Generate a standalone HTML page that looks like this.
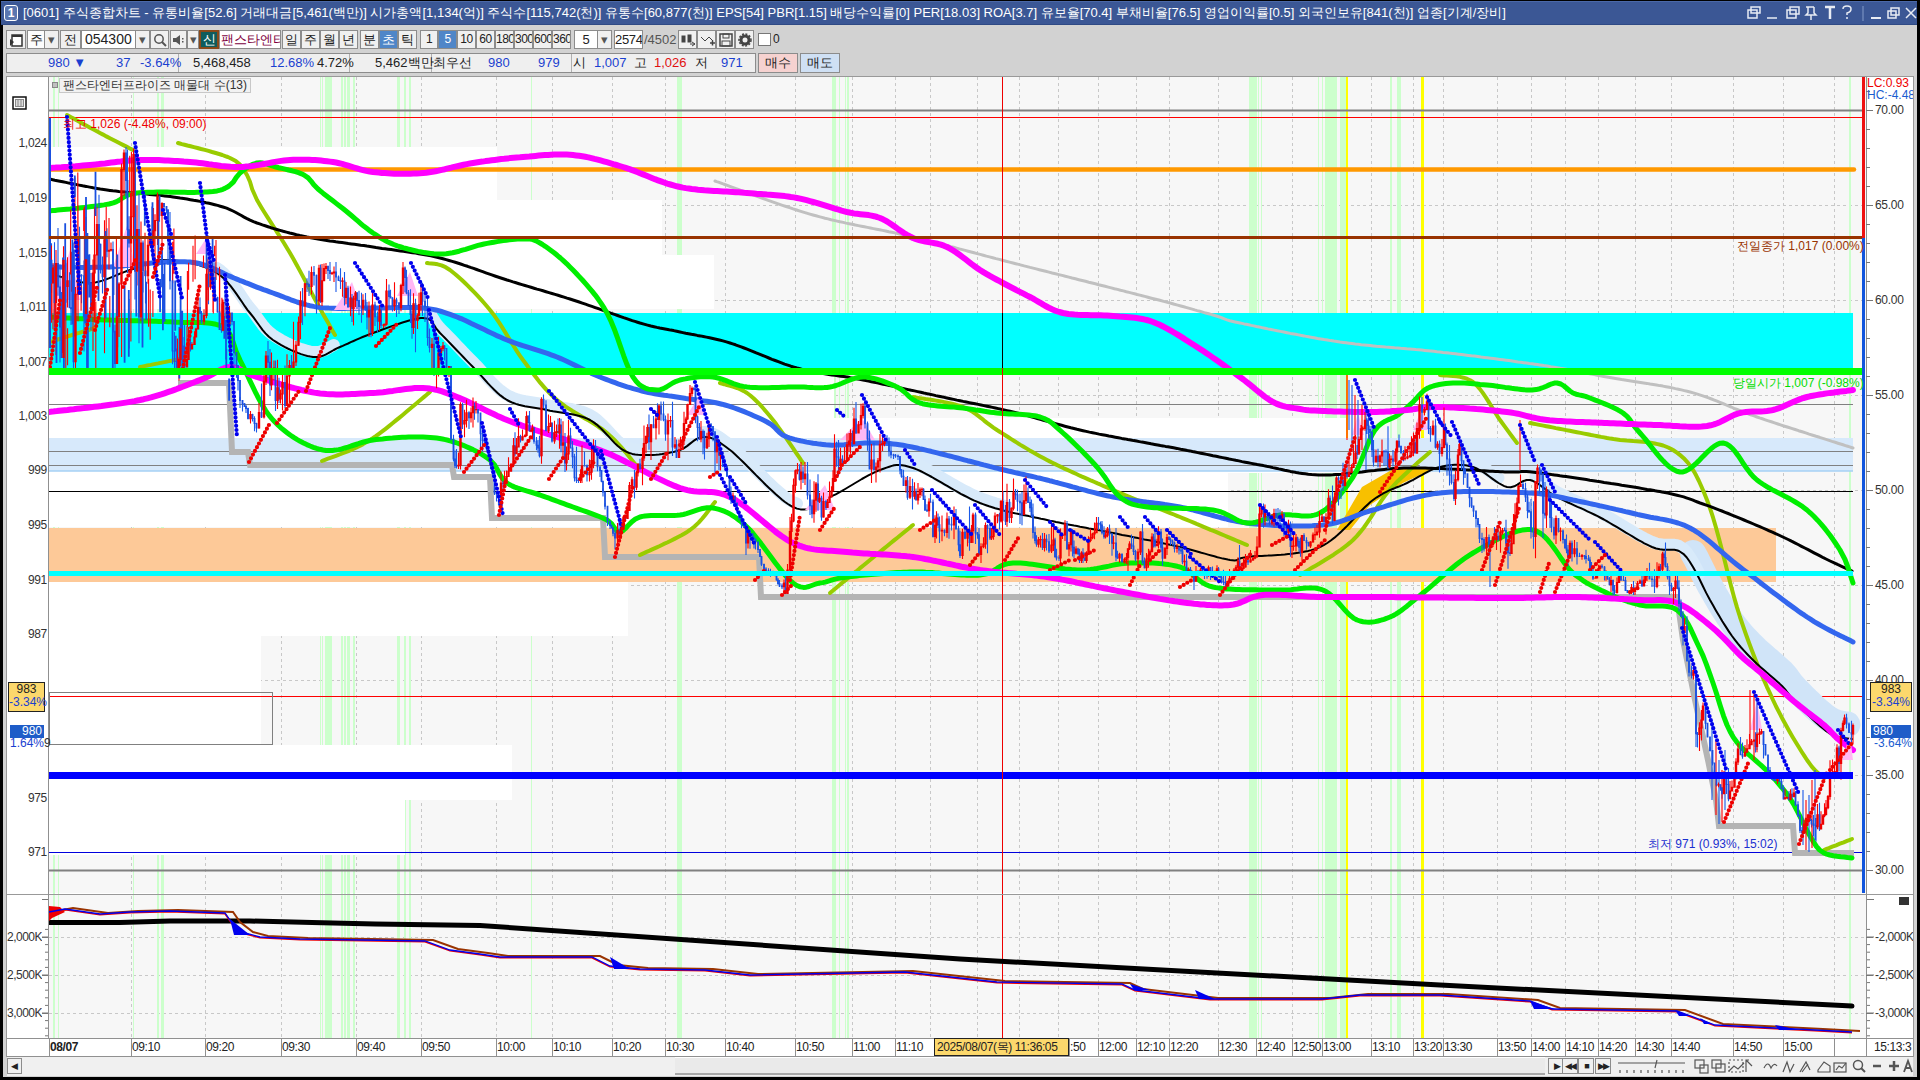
<!DOCTYPE html>
<html><head><meta charset="utf-8"><style>
*{margin:0;padding:0;box-sizing:border-box}
html,body{width:1920px;height:1080px;overflow:hidden;background:#000;font-family:"Liberation Sans",sans-serif;}
.a{position:absolute}
.t{position:absolute;white-space:nowrap;font-size:12px;line-height:14px}
.btn{position:absolute;background:#f0f0f0;border:1px solid #8c8c8c;font-size:13px;line-height:17px;text-align:center;color:#222;white-space:nowrap;overflow:hidden}
</style></head><body>

<div class="a" style="left:3px;top:25px;width:1914px;height:1052px;background:#d2d2d2"></div>
<div class="a" style="left:1px;top:1px;width:1916px;height:24px;background:#3b5795;border-top:1px solid #4a68a8;border-bottom:1px solid #2f4a85"></div>
<div class="a" style="left:4px;top:5px;width:14px;height:16px;border:1px solid #fff;border-radius:3px;background:#5a76b0;color:#fff;font-size:12px;font-weight:bold;line-height:14px;text-align:center">1</div>
<div class="t" style="left:23px;top:5px;color:#fff;font-size:13px;line-height:15px;letter-spacing:0px">[0601] 주식종합차트 - 유통비율[52.6] 거래대금[5,461(백만)] 시가총액[1,134(억)] 주식수[115,742(천)] 유통수[60,877(천)] EPS[54] PBR[1.15] 배당수익률[0] PER[18.03] ROA[3.7] 유보율[70.4] 부채비율[76.5] 영업이익률[0.5] 외국인보유[841(천)] 업종[기계/장비]</div>
<svg class="a" style="left:1740px;top:3px" width="178" height="20" viewBox="0 0 178 20"><g fill="none" stroke="#e8ecf4" stroke-width="1.5"><rect x="8" y="7" width="9" height="8"/><rect x="11" y="4" width="9" height="6"/><line x1="27" y1="15" x2="37" y2="15"/><rect x="47" y="7" width="9" height="8"/><rect x="50" y="4" width="9" height="7"/><path d="M66 4 L74 4 M68 4 L68 10 L66 12 L76 12 L74 10 L74 4 M71 12 L71 17"/><path d="M85 4 L95 4 M90 4 L90 16" stroke-width="2.5"/><path d="M103 6 Q103 3 107 3 Q111 3 111 6 Q111 9 107 10 L107 12 M107 14 L107 16"/><line x1="123" y1="3" x2="123" y2="18" stroke="#6c84b8"/><line x1="131" y1="15" x2="141" y2="15" stroke-width="2"/><rect x="148" y="8" width="8" height="7"/><rect x="151" y="5" width="8" height="7"/><path d="M166 5 L176 15 M176 5 L166 15"/></g></svg>
<div class="btn" style="left:6px;top:30px;width:20px;height:19px;background:#f0f0f0;color:#222;"></div>
<svg class="a" style="left:9px;top:34px" width="14" height="13"><rect x="3" y="1" width="10" height="11" fill="#fff" stroke="#333" stroke-width="1.5"/><rect x="3" y="1" width="10" height="2" fill="#333"/><path d="M1 5 L5 8 L1 12 Z" fill="#333"/></svg>
<div class="btn" style="left:27px;top:30px;width:18px;height:19px;background:#fcfcfc;color:#222;">주</div>
<div class="btn" style="left:44px;top:30px;width:15px;height:19px;background:#f0f0f0;color:#555;">▾</div>
<div class="btn" style="left:60px;top:30px;width:21px;height:19px;background:#f0f0f0;color:#222;">전</div>
<div class="btn" style="left:81px;top:30px;width:55px;height:19px;background:#fff;color:#222;text-align:left;padding-left:3px;font-size:14px">054300</div>
<div class="btn" style="left:135px;top:30px;width:15px;height:19px;background:#f0f0f0;color:#555;">▾</div>
<div class="btn" style="left:150px;top:30px;width:19px;height:19px;background:#f0f0f0;color:#222;"></div>
<svg class="a" style="left:153px;top:33px" width="14" height="14"><circle cx="6" cy="6" r="4.2" fill="none" stroke="#555" stroke-width="1.5"/><line x1="9" y1="9" x2="13" y2="13" stroke="#555" stroke-width="2"/></svg>
<div class="btn" style="left:170px;top:30px;width:17px;height:19px;background:#f0f0f0;color:#222;"></div>
<div class="btn" style="left:187px;top:30px;width:12px;height:19px;background:#f0f0f0;color:#555;">▾</div>
<svg class="a" style="left:172px;top:34px" width="13" height="12"><path d="M1 4 L4 4 L8 1 L8 11 L4 8 L1 8 Z" fill="#555"/><rect x="10" y="4" width="1.5" height="1.5" fill="#555"/><rect x="10" y="7" width="1.5" height="1.5" fill="#555"/></svg>
<div class="a" style="left:199px;top:30px;width:20px;height:19px;background:#0f5c5c;border:2px solid #8a4a1a;color:#fff;font-size:13px;line-height:15px;text-align:center">신</div>
<div class="a" style="left:219px;top:30px;width:62px;height:19px;background:#fff;border:1px solid #8c8c8c;color:#800040;font-size:13px;line-height:17px;overflow:hidden;white-space:nowrap;padding-left:1px">팬스타엔터</div>
<div class="btn" style="left:282px;top:30px;width:19px;height:19px;background:#f0f0f0;color:#222;">일</div>
<div class="btn" style="left:301px;top:30px;width:19px;height:19px;background:#f0f0f0;color:#222;">주</div>
<div class="btn" style="left:320px;top:30px;width:19px;height:19px;background:#f0f0f0;color:#222;">월</div>
<div class="btn" style="left:339px;top:30px;width:19px;height:19px;background:#f0f0f0;color:#222;">년</div>
<div class="btn" style="left:360px;top:30px;width:19px;height:19px;background:#f0f0f0;color:#222;">분</div>
<div class="btn" style="left:379px;top:30px;width:19px;height:19px;background:#4f86c8;color:#fff;">초</div>
<div class="btn" style="left:398px;top:30px;width:19px;height:19px;background:#f0f0f0;color:#222;">틱</div>
<div class="btn" style="left:420px;top:30px;width:18px;height:19px;background:#f0f0f0;color:#222;font-size:12px;letter-spacing:-0.5px">1</div>
<div class="btn" style="left:438px;top:30px;width:19px;height:19px;background:#4f86c8;color:#fff;font-size:12px;letter-spacing:-0.5px">5</div>
<div class="btn" style="left:457px;top:30px;width:19px;height:19px;background:#f0f0f0;color:#222;font-size:12px;letter-spacing:-0.5px">10</div>
<div class="btn" style="left:476px;top:30px;width:19px;height:19px;background:#f0f0f0;color:#222;font-size:12px;letter-spacing:-0.5px">60</div>
<div class="btn" style="left:495px;top:30px;width:19px;height:19px;background:#f0f0f0;color:#222;font-size:12px;letter-spacing:-0.5px">180</div>
<div class="btn" style="left:514px;top:30px;width:19px;height:19px;background:#f0f0f0;color:#222;font-size:12px;letter-spacing:-0.5px">300</div>
<div class="btn" style="left:533px;top:30px;width:19px;height:19px;background:#f0f0f0;color:#222;font-size:12px;letter-spacing:-0.5px">600</div>
<div class="btn" style="left:552px;top:30px;width:19px;height:19px;background:#f0f0f0;color:#222;font-size:12px;letter-spacing:-0.5px">3600</div>
<div class="btn" style="left:574px;top:30px;width:24px;height:19px;background:#fff;color:#222;">5</div>
<div class="btn" style="left:597px;top:30px;width:15px;height:19px;background:#f0f0f0;color:#555;">▾</div>
<div class="btn" style="left:614px;top:30px;width:29px;height:19px;background:#fff;color:#222;font-size:13px;letter-spacing:-0.3px">2574</div>
<div class="t" style="left:644px;top:33px;color:#555;font-size:13px">/4502</div>
<div class="btn" style="left:678px;top:30px;width:19px;height:19px;background:#f0f0f0;color:#222;"></div>
<div class="btn" style="left:697px;top:30px;width:19px;height:19px;background:#f0f0f0;color:#222;"></div>
<div class="btn" style="left:716px;top:30px;width:19px;height:19px;background:#f0f0f0;color:#222;"></div>
<div class="btn" style="left:735px;top:30px;width:19px;height:19px;background:#f0f0f0;color:#222;"></div>
<svg class="a" style="left:680px;top:32px" width="76" height="16"><g fill="#444" stroke="#444"><rect x="2" y="4" width="3" height="6"/><rect x="8" y="3" width="3" height="7"/><path d="M10 12 L15 12 M12 10 L15 12 L12 14" fill="none"/><path d="M21 5 L25 9 L29 5 L33 9" fill="none"/><path d="M30 11 L35 11 M32.5 8.5 L32.5 13.5" fill="none" stroke-width="1.5"/><rect x="40" y="2" width="12" height="12" fill="none" stroke-width="1.5"/><rect x="43" y="2" width="6" height="4" fill="none"/><rect x="42" y="9" width="8" height="5" fill="none"/><circle cx="65" cy="8" r="4" fill="none" stroke-width="3"/><circle cx="65" cy="8" r="6" fill="none" stroke-width="1.5" stroke-dasharray="2 1.5"/></g></svg>
<div class="a" style="left:758px;top:33px;width:13px;height:13px;background:#fff;border:1px solid #777"></div>
<div class="t" style="left:773px;top:32px;color:#222;font-size:12px">0</div>
<div class="a" style="left:6px;top:53px;width:750px;height:20px;background:#efefef;border:1px solid #8c8c8c"></div>
<div class="a" style="left:178px;top:54px;width:1px;height:18px;background:#b0b0b0"></div>
<div class="a" style="left:349px;top:54px;width:1px;height:18px;background:#b0b0b0"></div>
<div class="a" style="left:431px;top:54px;width:1px;height:18px;background:#b0b0b0"></div>
<div class="a" style="left:571px;top:54px;width:1px;height:18px;background:#b0b0b0"></div>
<div class="t" style="left:48px;top:55px;color:#1a3fd0;font-size:13px;line-height:16px">980 ▼</div>
<div class="t" style="left:116px;top:55px;color:#1a3fd0;font-size:13px;line-height:16px">37</div>
<div class="t" style="left:140px;top:55px;color:#1a3fd0;font-size:13px;line-height:16px">-3.64%</div>
<div class="t" style="left:193px;top:55px;color:#222;font-size:13px;line-height:16px">5,468,458</div>
<div class="t" style="left:270px;top:55px;color:#1a3fd0;font-size:13px;line-height:16px">12.68%</div>
<div class="t" style="left:317px;top:55px;color:#222;font-size:13px;line-height:16px">4.72%</div>
<div class="t" style="left:375px;top:55px;color:#222;font-size:13px;line-height:16px">5,462백만</div>
<div class="t" style="left:433px;top:55px;color:#222;font-size:13px;line-height:16px">최우선</div>
<div class="t" style="left:488px;top:55px;color:#1a3fd0;font-size:13px;line-height:16px">980</div>
<div class="t" style="left:538px;top:55px;color:#1a3fd0;font-size:13px;line-height:16px">979</div>
<div class="t" style="left:573px;top:55px;color:#222;font-size:13px;line-height:16px">시</div>
<div class="t" style="left:594px;top:55px;color:#1a3fd0;font-size:13px;line-height:16px">1,007</div>
<div class="t" style="left:634px;top:55px;color:#222;font-size:13px;line-height:16px">고</div>
<div class="t" style="left:654px;top:55px;color:#e01010;font-size:13px;line-height:16px">1,026</div>
<div class="t" style="left:695px;top:55px;color:#222;font-size:13px;line-height:16px">저</div>
<div class="t" style="left:721px;top:55px;color:#1a3fd0;font-size:13px;line-height:16px">971</div>
<div class="btn" style="left:758px;top:53px;width:40px;height:20px;background:#f6d2d0;font-size:13px;line-height:18px">매수</div>
<div class="btn" style="left:800px;top:53px;width:40px;height:20px;background:#cfe0f4;font-size:13px;line-height:18px">매도</div>
<div class="a" style="left:6px;top:76px;width:1908px;height:981px;background:#fff;border:1px solid #999"></div>
<svg class="a" style="left:0;top:0" width="1920" height="1080" viewBox="0 0 1920 1080" shape-rendering="auto">
<defs><clipPath id="cpm"><rect x="49" y="77" width="1813" height="816"/></clipPath><clipPath id="cpl"><rect x="49" y="895" width="1817" height="143"/></clipPath></defs>
<rect x="49" y="77" width="1817" height="816" fill="#f7f7f7"/>
<rect x="49" y="895" width="1817" height="143" fill="#f7f7f7"/>
<line x1="131.5" y1="77" x2="131.5" y2="893" stroke="#c8c8c8" stroke-width="1" stroke-dasharray="3 3"/>
<line x1="131.5" y1="896" x2="131.5" y2="1038" stroke="#c8c8c8" stroke-width="1" stroke-dasharray="3 3"/>
<line x1="205.5" y1="77" x2="205.5" y2="893" stroke="#c8c8c8" stroke-width="1" stroke-dasharray="3 3"/>
<line x1="205.5" y1="896" x2="205.5" y2="1038" stroke="#c8c8c8" stroke-width="1" stroke-dasharray="3 3"/>
<line x1="281.5" y1="77" x2="281.5" y2="893" stroke="#c8c8c8" stroke-width="1" stroke-dasharray="3 3"/>
<line x1="281.5" y1="896" x2="281.5" y2="1038" stroke="#c8c8c8" stroke-width="1" stroke-dasharray="3 3"/>
<line x1="356.5" y1="77" x2="356.5" y2="893" stroke="#c8c8c8" stroke-width="1" stroke-dasharray="3 3"/>
<line x1="356.5" y1="896" x2="356.5" y2="1038" stroke="#c8c8c8" stroke-width="1" stroke-dasharray="3 3"/>
<line x1="421.5" y1="77" x2="421.5" y2="893" stroke="#c8c8c8" stroke-width="1" stroke-dasharray="3 3"/>
<line x1="421.5" y1="896" x2="421.5" y2="1038" stroke="#c8c8c8" stroke-width="1" stroke-dasharray="3 3"/>
<line x1="496.5" y1="77" x2="496.5" y2="893" stroke="#c8c8c8" stroke-width="1" stroke-dasharray="3 3"/>
<line x1="496.5" y1="896" x2="496.5" y2="1038" stroke="#c8c8c8" stroke-width="1" stroke-dasharray="3 3"/>
<line x1="552.5" y1="77" x2="552.5" y2="893" stroke="#c8c8c8" stroke-width="1" stroke-dasharray="3 3"/>
<line x1="552.5" y1="896" x2="552.5" y2="1038" stroke="#c8c8c8" stroke-width="1" stroke-dasharray="3 3"/>
<line x1="612.5" y1="77" x2="612.5" y2="893" stroke="#c8c8c8" stroke-width="1" stroke-dasharray="3 3"/>
<line x1="612.5" y1="896" x2="612.5" y2="1038" stroke="#c8c8c8" stroke-width="1" stroke-dasharray="3 3"/>
<line x1="665.5" y1="77" x2="665.5" y2="893" stroke="#c8c8c8" stroke-width="1" stroke-dasharray="3 3"/>
<line x1="665.5" y1="896" x2="665.5" y2="1038" stroke="#c8c8c8" stroke-width="1" stroke-dasharray="3 3"/>
<line x1="725.5" y1="77" x2="725.5" y2="893" stroke="#c8c8c8" stroke-width="1" stroke-dasharray="3 3"/>
<line x1="725.5" y1="896" x2="725.5" y2="1038" stroke="#c8c8c8" stroke-width="1" stroke-dasharray="3 3"/>
<line x1="795.5" y1="77" x2="795.5" y2="893" stroke="#c8c8c8" stroke-width="1" stroke-dasharray="3 3"/>
<line x1="795.5" y1="896" x2="795.5" y2="1038" stroke="#c8c8c8" stroke-width="1" stroke-dasharray="3 3"/>
<line x1="852.5" y1="77" x2="852.5" y2="893" stroke="#c8c8c8" stroke-width="1" stroke-dasharray="3 3"/>
<line x1="852.5" y1="896" x2="852.5" y2="1038" stroke="#c8c8c8" stroke-width="1" stroke-dasharray="3 3"/>
<line x1="895.5" y1="77" x2="895.5" y2="893" stroke="#c8c8c8" stroke-width="1" stroke-dasharray="3 3"/>
<line x1="895.5" y1="896" x2="895.5" y2="1038" stroke="#c8c8c8" stroke-width="1" stroke-dasharray="3 3"/>
<line x1="930.5" y1="77" x2="930.5" y2="893" stroke="#c8c8c8" stroke-width="1" stroke-dasharray="3 3"/>
<line x1="930.5" y1="896" x2="930.5" y2="1038" stroke="#c8c8c8" stroke-width="1" stroke-dasharray="3 3"/>
<line x1="977.5" y1="77" x2="977.5" y2="893" stroke="#c8c8c8" stroke-width="1" stroke-dasharray="3 3"/>
<line x1="977.5" y1="896" x2="977.5" y2="1038" stroke="#c8c8c8" stroke-width="1" stroke-dasharray="3 3"/>
<line x1="1019.5" y1="77" x2="1019.5" y2="893" stroke="#c8c8c8" stroke-width="1" stroke-dasharray="3 3"/>
<line x1="1019.5" y1="896" x2="1019.5" y2="1038" stroke="#c8c8c8" stroke-width="1" stroke-dasharray="3 3"/>
<line x1="1058.5" y1="77" x2="1058.5" y2="893" stroke="#c8c8c8" stroke-width="1" stroke-dasharray="3 3"/>
<line x1="1058.5" y1="896" x2="1058.5" y2="1038" stroke="#c8c8c8" stroke-width="1" stroke-dasharray="3 3"/>
<line x1="1098.5" y1="77" x2="1098.5" y2="893" stroke="#c8c8c8" stroke-width="1" stroke-dasharray="3 3"/>
<line x1="1098.5" y1="896" x2="1098.5" y2="1038" stroke="#c8c8c8" stroke-width="1" stroke-dasharray="3 3"/>
<line x1="1136.5" y1="77" x2="1136.5" y2="893" stroke="#c8c8c8" stroke-width="1" stroke-dasharray="3 3"/>
<line x1="1136.5" y1="896" x2="1136.5" y2="1038" stroke="#c8c8c8" stroke-width="1" stroke-dasharray="3 3"/>
<line x1="1169.5" y1="77" x2="1169.5" y2="893" stroke="#c8c8c8" stroke-width="1" stroke-dasharray="3 3"/>
<line x1="1169.5" y1="896" x2="1169.5" y2="1038" stroke="#c8c8c8" stroke-width="1" stroke-dasharray="3 3"/>
<line x1="1218.5" y1="77" x2="1218.5" y2="893" stroke="#c8c8c8" stroke-width="1" stroke-dasharray="3 3"/>
<line x1="1218.5" y1="896" x2="1218.5" y2="1038" stroke="#c8c8c8" stroke-width="1" stroke-dasharray="3 3"/>
<line x1="1256.5" y1="77" x2="1256.5" y2="893" stroke="#c8c8c8" stroke-width="1" stroke-dasharray="3 3"/>
<line x1="1256.5" y1="896" x2="1256.5" y2="1038" stroke="#c8c8c8" stroke-width="1" stroke-dasharray="3 3"/>
<line x1="1292.5" y1="77" x2="1292.5" y2="893" stroke="#c8c8c8" stroke-width="1" stroke-dasharray="3 3"/>
<line x1="1292.5" y1="896" x2="1292.5" y2="1038" stroke="#c8c8c8" stroke-width="1" stroke-dasharray="3 3"/>
<line x1="1322.5" y1="77" x2="1322.5" y2="893" stroke="#c8c8c8" stroke-width="1" stroke-dasharray="3 3"/>
<line x1="1322.5" y1="896" x2="1322.5" y2="1038" stroke="#c8c8c8" stroke-width="1" stroke-dasharray="3 3"/>
<line x1="1371.5" y1="77" x2="1371.5" y2="893" stroke="#c8c8c8" stroke-width="1" stroke-dasharray="3 3"/>
<line x1="1371.5" y1="896" x2="1371.5" y2="1038" stroke="#c8c8c8" stroke-width="1" stroke-dasharray="3 3"/>
<line x1="1413.5" y1="77" x2="1413.5" y2="893" stroke="#c8c8c8" stroke-width="1" stroke-dasharray="3 3"/>
<line x1="1413.5" y1="896" x2="1413.5" y2="1038" stroke="#c8c8c8" stroke-width="1" stroke-dasharray="3 3"/>
<line x1="1443.5" y1="77" x2="1443.5" y2="893" stroke="#c8c8c8" stroke-width="1" stroke-dasharray="3 3"/>
<line x1="1443.5" y1="896" x2="1443.5" y2="1038" stroke="#c8c8c8" stroke-width="1" stroke-dasharray="3 3"/>
<line x1="1497.5" y1="77" x2="1497.5" y2="893" stroke="#c8c8c8" stroke-width="1" stroke-dasharray="3 3"/>
<line x1="1497.5" y1="896" x2="1497.5" y2="1038" stroke="#c8c8c8" stroke-width="1" stroke-dasharray="3 3"/>
<line x1="1531.5" y1="77" x2="1531.5" y2="893" stroke="#c8c8c8" stroke-width="1" stroke-dasharray="3 3"/>
<line x1="1531.5" y1="896" x2="1531.5" y2="1038" stroke="#c8c8c8" stroke-width="1" stroke-dasharray="3 3"/>
<line x1="1565.5" y1="77" x2="1565.5" y2="893" stroke="#c8c8c8" stroke-width="1" stroke-dasharray="3 3"/>
<line x1="1565.5" y1="896" x2="1565.5" y2="1038" stroke="#c8c8c8" stroke-width="1" stroke-dasharray="3 3"/>
<line x1="1598.5" y1="77" x2="1598.5" y2="893" stroke="#c8c8c8" stroke-width="1" stroke-dasharray="3 3"/>
<line x1="1598.5" y1="896" x2="1598.5" y2="1038" stroke="#c8c8c8" stroke-width="1" stroke-dasharray="3 3"/>
<line x1="1635.5" y1="77" x2="1635.5" y2="893" stroke="#c8c8c8" stroke-width="1" stroke-dasharray="3 3"/>
<line x1="1635.5" y1="896" x2="1635.5" y2="1038" stroke="#c8c8c8" stroke-width="1" stroke-dasharray="3 3"/>
<line x1="1671.5" y1="77" x2="1671.5" y2="893" stroke="#c8c8c8" stroke-width="1" stroke-dasharray="3 3"/>
<line x1="1671.5" y1="896" x2="1671.5" y2="1038" stroke="#c8c8c8" stroke-width="1" stroke-dasharray="3 3"/>
<line x1="1733.5" y1="77" x2="1733.5" y2="893" stroke="#c8c8c8" stroke-width="1" stroke-dasharray="3 3"/>
<line x1="1733.5" y1="896" x2="1733.5" y2="1038" stroke="#c8c8c8" stroke-width="1" stroke-dasharray="3 3"/>
<line x1="1783.5" y1="77" x2="1783.5" y2="893" stroke="#c8c8c8" stroke-width="1" stroke-dasharray="3 3"/>
<line x1="1783.5" y1="896" x2="1783.5" y2="1038" stroke="#c8c8c8" stroke-width="1" stroke-dasharray="3 3"/>
<line x1="1834.5" y1="77" x2="1834.5" y2="893" stroke="#c8c8c8" stroke-width="1" stroke-dasharray="3 3"/>
<line x1="1834.5" y1="896" x2="1834.5" y2="1038" stroke="#c8c8c8" stroke-width="1" stroke-dasharray="3 3"/>
<line x1="49" y1="205.5" x2="1862" y2="205.5" stroke="#c8c8c8" stroke-width="1" stroke-dasharray="3 3"/>
<line x1="49" y1="300.5" x2="1862" y2="300.5" stroke="#c8c8c8" stroke-width="1" stroke-dasharray="3 3"/>
<line x1="49" y1="395.5" x2="1862" y2="395.5" stroke="#c8c8c8" stroke-width="1" stroke-dasharray="3 3"/>
<line x1="49" y1="490.5" x2="1862" y2="490.5" stroke="#c8c8c8" stroke-width="1" stroke-dasharray="3 3"/>
<line x1="49" y1="585.5" x2="1862" y2="585.5" stroke="#c8c8c8" stroke-width="1" stroke-dasharray="3 3"/>
<line x1="49" y1="680.5" x2="1862" y2="680.5" stroke="#c8c8c8" stroke-width="1" stroke-dasharray="3 3"/>
<line x1="49" y1="775.5" x2="1862" y2="775.5" stroke="#c8c8c8" stroke-width="1" stroke-dasharray="3 3"/>
<line x1="49" y1="937.5" x2="1866" y2="937.5" stroke="#c8c8c8" stroke-width="1" stroke-dasharray="3 3"/>
<line x1="49" y1="975.5" x2="1866" y2="975.5" stroke="#c8c8c8" stroke-width="1" stroke-dasharray="3 3"/>
<line x1="49" y1="1013.5" x2="1866" y2="1013.5" stroke="#c8c8c8" stroke-width="1" stroke-dasharray="3 3"/>
<rect x="53" y="77" width="2" height="961" fill="#ccffcc"/>
<rect x="58" y="77" width="1" height="961" fill="#ccffcc"/>
<rect x="133" y="77" width="1" height="961" fill="#ccffcc"/>
<rect x="157" y="77" width="2" height="961" fill="#ccffcc"/>
<rect x="161" y="77" width="3" height="961" fill="#ccffcc"/>
<rect x="320" y="77" width="1" height="961" fill="#ccffcc"/>
<rect x="322" y="77" width="1" height="961" fill="#ccffcc"/>
<rect x="325" y="77" width="7" height="961" fill="#ccffcc"/>
<rect x="341" y="77" width="2" height="961" fill="#ccffcc"/>
<rect x="344" y="77" width="2" height="961" fill="#ccffcc"/>
<rect x="347" y="77" width="3" height="961" fill="#ccffcc"/>
<rect x="353" y="77" width="2" height="961" fill="#ccffcc"/>
<rect x="397" y="77" width="3" height="961" fill="#ccffcc"/>
<rect x="404" y="77" width="2" height="961" fill="#ccffcc"/>
<rect x="409" y="77" width="2" height="961" fill="#ccffcc"/>
<rect x="531" y="77" width="1" height="961" fill="#ccffcc"/>
<rect x="677" y="77" width="5" height="961" fill="#ccffcc"/>
<rect x="832" y="77" width="4" height="961" fill="#ccffcc"/>
<rect x="839" y="77" width="1" height="961" fill="#ccffcc"/>
<rect x="845" y="77" width="1" height="961" fill="#ccffcc"/>
<rect x="847" y="77" width="2" height="961" fill="#ccffcc"/>
<rect x="1249" y="77" width="8" height="961" fill="#ccffcc"/>
<rect x="1258" y="77" width="1" height="961" fill="#ccffcc"/>
<rect x="1261" y="77" width="1" height="961" fill="#ccffcc"/>
<rect x="1318" y="77" width="1" height="961" fill="#ccffcc"/>
<rect x="1322" y="77" width="1" height="961" fill="#ccffcc"/>
<rect x="1325" y="77" width="12" height="961" fill="#ccffcc"/>
<rect x="1340" y="77" width="6" height="961" fill="#ccffcc"/>
<rect x="1390" y="77" width="2" height="961" fill="#ccffcc"/>
<rect x="1397" y="77" width="4" height="961" fill="#ccffcc"/>
<rect x="1849" y="77" width="2" height="961" fill="#ccffcc"/>
<rect x="1346" y="77" width="2" height="961" fill="#ffff00"/>
<rect x="1421" y="77" width="3" height="961" fill="#ffff00"/>
<rect x="49" y="147" width="448" height="53" fill="#ffffff"/>
<rect x="49" y="200" width="613" height="55" fill="#ffffff"/>
<rect x="49" y="255" width="665" height="54" fill="#ffffff"/>
<rect x="49" y="364" width="785" height="54" fill="#ffffff"/>
<rect x="49" y="418" width="1297" height="55" fill="#ffffff"/>
<rect x="49" y="473" width="1179" height="54" fill="#ffffff"/>
<rect x="49" y="582" width="579" height="54" fill="#ffffff"/>
<rect x="49" y="636" width="212" height="55" fill="#ffffff"/>
<rect x="49" y="691" width="212" height="54" fill="#ffffff"/>
<rect x="49" y="745" width="463" height="55" fill="#ffffff"/>
<rect x="49" y="800" width="356" height="55" fill="#ffffff"/>
<g clip-path="url(#cpm)">
<rect x="49" y="313" width="1804" height="55" fill="#00ffff"/>
<rect x="49" y="438" width="1804" height="33" fill="#d7e9fb"/>
<line x1="49" y1="471" x2="1853" y2="471" stroke="#a6d0f4" stroke-width="1.5"/>
<rect x="49" y="528" width="1727" height="54" fill="#fdc998"/>
<line x1="49" y1="110.5" x2="1862" y2="110.5" stroke="#808080" stroke-width="2" stroke-linecap="butt"/>
<line x1="49" y1="117.5" x2="1862" y2="117.5" stroke="#ff0000" stroke-width="1" stroke-linecap="butt"/>
<line x1="49" y1="404.5" x2="1853" y2="404.5" stroke="#808080" stroke-width="1" stroke-linecap="butt"/>
<line x1="49" y1="451.5" x2="1853" y2="451.5" stroke="#808080" stroke-width="1" stroke-linecap="butt"/>
<line x1="49" y1="465.5" x2="1853" y2="465.5" stroke="#808080" stroke-width="1" stroke-linecap="butt"/>
<line x1="49" y1="491.5" x2="1853" y2="491.5" stroke="#000000" stroke-width="1" stroke-linecap="butt"/>
<line x1="49" y1="696.5" x2="1862" y2="696.5" stroke="#ff0000" stroke-width="1" stroke-linecap="butt"/>
<line x1="49" y1="852.5" x2="1862" y2="852.5" stroke="#0000dd" stroke-width="1.2" stroke-linecap="butt"/>
<line x1="49" y1="870.5" x2="1862" y2="870.5" stroke="#808080" stroke-width="2" stroke-linecap="butt"/>
<line x1="49" y1="169.5" x2="1854" y2="169.5" stroke="#ff9900" stroke-width="4.5" stroke-linecap="round"/>
<polyline points="178.0,383.0 229.0,383.0 232.0,452.0 248.0,452.0 250.0,465.0 452.0,465.0 454.0,477.0 490.0,477.0 492.0,518.0 603.0,518.0 605.0,557.0 759.0,557.0 761.0,597.0 1677.0,597.0 1683.0,640.0 1695.0,700.0 1708.0,760.0 1716.0,800.0 1719.0,826.0 1793.0,826.0 1795.0,853.0 1854.0,853.0" fill="none" stroke="#b4b4b4" stroke-width="6" stroke-linejoin="miter"/>
<polyline points="1693.0,553.0 1696.1,558.5 1699.3,564.8 1702.7,571.8 1706.2,578.9 1710.0,586.0 1712.9,591.1 1715.9,596.4 1719.1,601.8 1722.3,607.2 1725.6,612.4 1728.8,617.4 1732.0,622.0 1735.1,626.1 1738.1,629.9 1741.1,633.5 1744.2,636.9 1747.3,640.2 1750.5,643.5 1754.0,647.0 1756.9,649.8 1760.1,652.7 1763.4,655.6 1766.8,658.6 1770.2,661.4 1773.5,664.3 1776.6,667.0 1779.5,669.6 1782.0,672.0 1786.0,676.5 1788.7,680.2 1791.5,684.0 1796.0,689.0 1798.3,691.3 1801.0,694.0 1803.9,696.9 1807.0,700.0 1810.3,703.1 1813.6,706.3 1816.9,709.3 1820.2,712.2 1823.4,714.8 1826.3,717.1 1829.0,719.0 1833.0,721.2 1837.0,722.6 1840.8,723.6 1844.3,724.1 1847.4,724.4" fill="none" stroke="#d0e4f8" stroke-width="26" stroke-linecap="round" stroke-linejoin="round"/>
<polyline points="217.0,268.0 220.7,270.7 224.2,273.8 227.5,277.3 230.7,281.1 233.7,285.1 236.6,289.2 239.5,293.3 242.2,297.3 244.8,301.2 247.4,304.8 250.0,308.0 253.7,312.6 256.8,317.0 259.7,321.0 262.5,324.8 265.5,328.4 268.9,331.8 273.0,335.0 275.6,336.7 278.3,338.4 281.3,340.2 284.5,341.9 287.7,343.5 291.1,345.1 294.4,346.5 297.8,347.9 301.1,349.1 304.3,350.1 307.4,351.0 310.3,351.6 313.0,352.0 316.5,352.1 319.8,351.7 322.7,350.8 325.6,349.6 328.3,348.2 331.0,346.6 333.8,345.0" fill="none" stroke="#d8eafa" stroke-width="12" stroke-linecap="round" stroke-linejoin="round"/>
<polyline points="431.4,315.9 433.6,319.2 436.1,323.3 440.0,328.0 442.4,330.4 445.0,333.0 447.8,335.9 450.8,339.0 453.9,342.2 457.0,345.5 460.3,348.9 463.5,352.3 466.7,355.6 469.9,358.9 473.0,362.0 476.0,365.1 479.0,368.4 482.0,371.7 485.0,375.0 488.0,378.4 491.1,381.6 494.2,384.7 497.3,387.7 500.4,390.4 503.7,392.9 507.0,395.0 509.9,396.5 512.8,397.8 515.8,398.9 518.8,399.8 521.8,400.5 524.9,401.2 528.0,401.7 531.1,402.2 534.3,402.7 537.4,403.2 540.6,403.7 543.8,404.3 547.0,405.0 550.0,405.7 553.1,406.3 556.2,406.8 559.4,407.3 562.5,407.8 565.7,408.2 568.9,408.8 572.1,409.3 575.3,410.0 578.4,410.7 581.4,411.5 584.4,412.5 587.2,413.7 590.0,415.0 593.4,417.1 596.7,419.6 599.9,422.4 603.0,425.5 606.0,428.7 609.0,431.9 611.9,435.1 614.7,438.1 617.5,440.8 620.3,443.1 623.0,445.0 626.2,446.7 629.3,448.0 632.3,448.9 635.2,449.5 638.1,449.8" fill="none" stroke="#d8eafa" stroke-width="12" stroke-linecap="round" stroke-linejoin="round"/>
<polyline points="703.0,432.0 705.6,432.1 708.0,432.3 710.4,432.8 712.8,433.6 715.3,434.8 718.2,436.4 721.5,438.7 725.4,441.5 730.0,445.0 732.3,446.8 734.7,449.0 737.3,451.4 740.1,454.1 743.1,457.0 746.1,460.0 749.3,463.2 752.5,466.5 755.8,469.9 759.2,473.2 762.6,476.6 765.9,480.0 769.3,483.2 772.6,486.3 775.8,489.3 779.0,492.1 782.1,494.7 785.0,497.0 787.9,499.0 790.5,500.7 793.0,502.0 797.0,503.6" fill="none" stroke="#d8eafa" stroke-width="12" stroke-linecap="round" stroke-linejoin="round"/>
<polyline points="877.3,466.0 880.0,465.0 883.5,463.7 886.6,462.6 889.3,461.7 891.8,460.9 894.2,460.3 896.7,460.0 899.2,460.0 902.0,460.2 905.2,460.8 908.8,461.7 913.0,463.0 915.3,463.8 917.8,464.9 920.4,466.0 923.1,467.4 925.9,468.8 928.8,470.4 931.8,472.0 934.9,473.8 938.0,475.6 941.2,477.4 944.4,479.3 947.6,481.2 950.9,483.1 954.2,485.0 957.5,486.9 960.8,488.8 964.1,490.5 967.4,492.2 970.6,493.8 973.8,495.4 976.9,496.7 980.0,498.0 983.0,499.1 986.1,500.2 989.1,501.3 992.2,502.2 995.2,503.2 998.3,504.0 1001.4,504.9 1004.4,505.7 1007.5,506.4" fill="none" stroke="#d8eafa" stroke-width="12" stroke-linecap="round" stroke-linejoin="round"/>
<polyline points="1425.1,468.1 1428.0,466.6 1431.0,465.2 1434.0,463.9 1437.0,462.8 1440.0,462.0 1443.0,461.3 1446.0,460.8 1449.0,460.3 1452.0,460.0 1454.9,459.8 1457.9,459.7 1460.9,459.9 1463.9,460.1 1466.9,460.6 1470.0,461.2 1473.0,462.0 1476.1,463.2 1479.3,464.8 1482.5,466.7 1485.8,468.9 1489.0,471.3 1492.2,473.6 1495.4,475.9 1498.5,478.0" fill="none" stroke="#d8eafa" stroke-width="12" stroke-linecap="round" stroke-linejoin="round"/>
<polyline points="1535.4,477.1 1538.1,478.7 1540.8,480.7 1543.6,482.9 1546.6,485.1 1549.8,487.5 1553.2,489.8 1557.0,492.0 1559.6,493.4 1562.3,494.7 1565.2,496.1 1568.1,497.5 1571.2,498.9 1574.3,500.3 1577.5,501.8 1580.8,503.2 1584.1,504.7 1587.4,506.3 1590.8,507.9 1594.2,509.5 1597.6,511.2 1601.0,513.0 1603.9,514.5 1606.8,516.2 1609.9,518.0 1613.0,519.8 1616.2,521.7 1619.5,523.7 1622.7,525.6 1625.9,527.6 1629.2,529.5 1632.4,531.4 1635.5,533.3 1638.5,535.1 1641.5,536.7 1644.3,538.3 1647.1,539.7 1649.6,540.9 1652.0,542.0 1656.1,543.5 1659.9,544.3 1663.3,544.7 1666.4,544.8 1669.2,544.8 1671.9,544.7 1674.3,544.8 1676.7,545.2 1679.0,546.0 1683.3,548.8 1686.6,552.2 1689.6,556.5 1693.0,562.0 1696.1,567.5 1699.3,573.8" fill="none" stroke="#d8eafa" stroke-width="12" stroke-linecap="round" stroke-linejoin="round"/>
<polygon points="1337,530 1362,487 1395,468 1437,467 1403,483 1370,505 1350,530" fill="#f8c000"/>
<polyline points="715.0,181.0 716.6,181.6 718.4,182.2 720.4,182.9 722.5,183.7 724.8,184.5 727.3,185.4 729.9,186.4 732.6,187.4 735.4,188.4 738.3,189.5 741.4,190.6 744.5,191.8 747.7,193.0 751.0,194.2 754.3,195.4 757.8,196.6 761.2,197.9 764.7,199.1 768.2,200.4 771.8,201.6 775.4,202.9 778.9,204.1 782.5,205.3 786.1,206.5 789.6,207.7 793.1,208.9 796.6,210.0 800.0,211.1 803.3,212.1 806.6,213.1 809.9,214.1 813.0,215.0 816.0,215.8 819.0,216.6 822.0,217.4 825.0,218.2 828.0,218.9 831.1,219.7 834.1,220.4 837.1,221.1 840.1,221.8 843.2,222.4 846.2,223.1 849.2,223.7 852.2,224.3 855.3,225.0 858.3,225.6 861.4,226.2 864.4,226.8 867.4,227.4 870.5,228.0 873.5,228.6 876.6,229.2 879.6,229.8 882.6,230.4 885.7,231.0 888.7,231.7 891.8,232.3 894.8,232.9 897.8,233.6 900.9,234.2 903.9,234.9 906.9,235.6 910.0,236.3 913.0,237.0 916.0,237.7 919.0,238.5 922.0,239.2 924.9,239.9 927.8,240.6 930.7,241.4 933.6,242.1 936.5,242.8 939.4,243.6 942.2,244.3 945.1,245.1 947.9,245.8 950.8,246.6 953.7,247.3 956.5,248.1 959.4,248.9 962.3,249.6 965.2,250.4 968.2,251.2 971.1,252.0 974.1,252.8 977.1,253.6 980.2,254.4 983.3,255.2 986.4,256.1 989.5,256.9 992.7,257.7 996.0,258.6 999.3,259.4 1002.6,260.3 1006.0,261.2 1009.5,262.1 1013.0,263.0 1015.7,263.7 1018.5,264.4 1021.3,265.1 1024.2,265.9 1027.1,266.6 1030.1,267.4 1033.1,268.1 1036.2,268.9 1039.3,269.7 1042.5,270.5 1045.7,271.3 1048.9,272.1 1052.2,273.0 1055.5,273.8 1058.8,274.6 1062.1,275.4 1065.4,276.3 1068.8,277.1 1072.1,278.0 1075.4,278.8 1078.8,279.7 1082.1,280.5 1085.5,281.3 1088.8,282.2 1092.1,283.0 1095.4,283.8 1098.6,284.7 1101.8,285.5 1105.1,286.3 1108.2,287.1 1111.3,287.9 1114.4,288.7 1117.5,289.4 1120.5,290.2 1123.4,290.9 1126.3,291.7 1129.1,292.4 1131.9,293.1 1134.6,293.8 1137.2,294.5 1139.8,295.1 1142.3,295.8 1144.7,296.4 1147.0,297.0 1151.4,298.2 1155.7,299.3 1159.8,300.3 1163.7,301.4 1167.4,302.4 1171.0,303.3 1174.4,304.3 1177.6,305.1 1180.8,306.0 1183.8,306.8 1186.7,307.6 1189.5,308.4 1192.1,309.1 1194.7,309.9 1197.2,310.6 1199.7,311.2 1202.0,311.9 1204.3,312.6 1206.5,313.2 1208.7,313.8 1210.9,314.4 1213.0,315.0 1217.3,316.3 1220.2,317.2 1222.2,318.0 1223.7,318.6 1225.1,319.2 1227.0,319.9 1229.8,320.7 1234.0,321.7 1240.0,323.0 1242.0,323.4 1244.1,323.9 1246.3,324.3 1248.7,324.8 1251.2,325.4 1253.7,325.9 1256.4,326.5 1259.2,327.0 1262.0,327.6 1264.9,328.2 1267.9,328.9 1271.0,329.5 1274.1,330.1 1277.3,330.8 1280.5,331.4 1283.8,332.0 1287.1,332.7 1290.4,333.4 1293.8,334.0 1297.2,334.6 1300.6,335.3 1304.0,335.9 1307.4,336.6 1310.8,337.2 1314.1,337.8 1317.5,338.4 1320.8,338.9 1324.1,339.5 1327.4,340.0 1330.6,340.6 1333.8,341.1 1336.9,341.5 1340.0,342.0 1343.0,342.4 1346.1,342.8 1349.1,343.2 1352.1,343.6 1355.2,344.0 1358.2,344.3 1361.2,344.7 1364.2,345.0 1367.3,345.3 1370.3,345.6 1373.3,345.9 1376.4,346.2 1379.4,346.4 1382.4,346.7 1385.5,347.0 1388.5,347.2 1391.5,347.5 1394.5,347.8 1397.6,348.0 1400.6,348.3 1403.6,348.5 1406.7,348.8 1409.7,349.0 1412.7,349.3 1415.8,349.6 1418.8,349.8 1421.8,350.1 1424.8,350.4 1427.9,350.7 1430.9,351.0 1433.9,351.3 1437.0,351.7 1440.0,352.0 1443.0,352.4 1446.1,352.7 1449.2,353.1 1452.3,353.4 1455.5,353.8 1458.6,354.2 1461.8,354.6 1465.0,355.0 1468.2,355.4 1471.4,355.8 1474.6,356.1 1477.8,356.5 1480.9,357.0 1484.1,357.4 1487.3,357.8 1490.5,358.2 1493.6,358.6 1496.8,359.0 1499.9,359.4 1503.0,359.8 1506.1,360.2 1509.1,360.6 1512.1,361.0 1515.1,361.4 1518.1,361.9 1521.0,362.3 1523.8,362.7 1526.6,363.1 1529.4,363.5 1532.1,363.8 1534.8,364.2 1537.4,364.6 1540.0,365.0 1543.7,365.6 1547.3,366.1 1550.7,366.7 1554.0,367.2 1557.1,367.7 1560.2,368.3 1563.2,368.8 1566.1,369.3 1569.0,369.8 1571.8,370.4 1574.6,370.9 1577.3,371.4 1580.1,371.9 1582.8,372.5 1585.6,373.0 1588.5,373.5 1591.3,374.1 1594.3,374.6 1597.3,375.2 1600.4,375.8 1603.7,376.4 1607.0,377.0 1609.8,377.5 1612.7,378.0 1615.6,378.5 1618.6,379.0 1621.6,379.5 1624.7,379.9 1627.8,380.4 1630.9,380.9 1634.1,381.4 1637.3,381.9 1640.5,382.4 1643.7,382.9 1646.9,383.4 1650.1,384.0 1653.3,384.5 1656.5,385.0 1659.7,385.6 1662.9,386.1 1666.1,386.7 1669.2,387.3 1672.3,387.9 1675.4,388.6 1678.4,389.2 1681.4,389.9 1684.3,390.6 1687.2,391.3 1690.0,392.0 1693.3,392.9 1696.6,393.9 1699.7,394.9 1702.8,395.9 1705.7,396.9 1708.6,397.9 1711.5,399.0 1714.3,400.1 1717.1,401.2 1719.9,402.3 1722.7,403.5 1725.5,404.7 1728.3,405.8 1731.2,407.0 1734.1,408.3 1737.1,409.5 1740.1,410.7 1743.3,412.0 1746.5,413.2 1749.9,414.5 1753.4,415.7 1757.0,417.0 1759.6,417.9 1762.4,418.8 1765.3,419.8 1768.3,420.8 1771.4,421.8 1774.6,422.9 1777.9,424.0 1781.2,425.1 1784.6,426.2 1788.1,427.3 1791.6,428.4 1795.1,429.5 1798.6,430.7 1802.2,431.8 1805.7,432.9 1809.2,434.1 1812.7,435.2 1816.1,436.3 1819.5,437.3 1822.8,438.4 1826.0,439.4 1829.1,440.4 1832.1,441.4 1835.1,442.3 1837.9,443.2 1840.5,444.0 1843.0,444.8 1845.4,445.6 1847.6,446.3 1849.6,446.9 1851.4,447.5 1853.0,448.0" fill="none" stroke="#c0c0c0" stroke-width="3" stroke-linejoin="round" stroke-linecap="round" />
<polyline points="67.0,115.0 68.8,116.0 71.0,117.2 73.6,118.6 76.6,120.3 79.8,122.0 83.1,123.9 86.6,125.8 90.1,127.7 93.6,129.5 96.9,131.3 100.0,133.0 103.1,134.6 106.4,136.4 109.9,138.2 113.4,140.0 116.9,141.8 120.2,143.5 123.4,145.1 126.4,146.6 129.0,148.0 131.2,149.1 133.0,150.0" fill="none" stroke="#99cc00" stroke-width="4" stroke-linejoin="round" stroke-linecap="round" />
<polyline points="178.0,143.0 179.8,143.5 181.9,144.1 184.5,144.7 187.4,145.5 190.6,146.3 193.9,147.1 197.5,148.0 201.1,149.0 204.8,149.9 208.5,150.9 212.1,152.0 215.7,153.0 219.1,154.0 222.3,155.0 225.2,156.1 227.8,157.0 230.0,158.0 235.8,161.1 239.7,164.3 242.4,167.5 244.6,171.1 247.0,175.0 250.0,181.7 252.2,189.3 257.0,200.0 259.2,203.8 261.7,208.0 264.5,212.5 267.6,217.3 270.8,222.4 274.1,227.5 277.5,232.8 280.8,238.0 284.1,243.2 287.1,248.2 290.0,253.0 293.3,258.8 296.6,264.7 299.8,270.6 302.9,276.4 305.9,282.2 308.9,287.8 311.7,293.2 314.4,298.3 317.0,303.0 320.7,309.7 324.3,316.2 327.7,322.1 330.7,327.4 333.1,331.7 335.0,335.0" fill="none" stroke="#99cc00" stroke-width="4" stroke-linejoin="round" stroke-linecap="round" />
<polyline points="50.0,342.0 52.0,341.4 54.7,340.5 57.8,339.5 61.3,338.4 65.0,337.2 68.6,336.1 72.0,335.0 75.4,333.9 79.2,332.8 83.0,331.6 86.7,330.5 90.1,329.5 92.9,328.6 95.0,328.0" fill="none" stroke="#99cc00" stroke-width="4" stroke-linejoin="round" stroke-linecap="round" />
<polyline points="140.0,367.0 141.9,366.6 144.4,366.1 147.3,365.5 150.7,364.9 154.3,364.1 158.1,363.4 161.9,362.6 165.7,361.9 169.3,361.1 172.7,360.5 175.6,359.9 178.1,359.4 180.0,359.0" fill="none" stroke="#99cc00" stroke-width="4" stroke-linejoin="round" stroke-linecap="round" />
<polyline points="322.0,461.0 323.7,460.3 325.6,459.6 327.9,458.7 330.3,457.9 333.1,456.9 336.0,455.8 339.0,454.7 342.2,453.5 345.6,452.2 349.0,450.8 352.5,449.3 356.0,447.6 359.6,445.9 363.1,444.1 366.6,442.1 370.0,440.0 372.8,438.2 375.8,436.1 378.9,433.8 382.2,431.4 385.6,428.8 389.0,426.1 392.5,423.3 396.0,420.4 399.5,417.6 403.0,414.7 406.4,411.8 409.7,409.0 413.0,406.3 416.0,403.7 418.9,401.3 421.6,399.0 424.1,396.9 426.4,395.0 428.3,393.3 430.0,392.0" fill="none" stroke="#99cc00" stroke-width="4" stroke-linejoin="round" stroke-linecap="round" />
<polyline points="427.0,263.0 428.9,263.3 431.4,263.5 434.4,263.8 437.7,264.3 441.5,265.4 445.6,267.2 450.0,270.0 452.5,272.0 455.3,274.2 458.2,276.8 461.3,279.5 464.5,282.5 467.7,285.7 471.0,289.0 474.4,292.4 477.7,295.9 480.9,299.4 484.1,303.0 487.1,306.5 490.0,310.0 493.3,314.2 496.4,318.6 499.5,323.2 502.5,327.9 505.4,332.6 508.3,337.4 511.2,342.1 514.1,346.8 517.0,351.4 520.0,355.8 523.0,360.0 526.0,364.0 528.9,368.0 531.8,371.8 534.6,375.6 537.5,379.3 540.4,382.9 543.4,386.4 546.5,389.9 549.8,393.3 553.3,396.7 557.0,400.0 559.7,402.2 562.6,404.4 565.6,406.6 568.8,408.6 572.0,410.7 575.3,412.7 578.7,414.7 582.1,416.7 585.4,418.7 588.8,420.6 592.1,422.6 595.3,424.6 598.4,426.7 601.5,428.7 604.3,430.8 607.0,433.0 610.8,436.4 614.5,440.0 618.1,443.8 621.6,447.7 625.0,451.6 628.2,455.5 631.1,459.1 633.8,462.5 636.2,465.5 638.3,468.0 640.0,470.0" fill="none" stroke="#99cc00" stroke-width="4" stroke-linejoin="round" stroke-linecap="round" />
<polyline points="640.0,555.0 641.8,554.1 644.0,553.1 646.6,551.9 649.6,550.6 652.8,549.1 656.2,547.6 659.8,546.0 663.4,544.2 667.2,542.5 670.9,540.7 674.5,538.9 678.1,537.0 681.5,535.2 684.6,533.4 687.5,531.7 690.0,530.0 694.5,526.5 698.6,522.6 702.3,518.5 705.6,514.4 708.6,510.6 711.1,507.1 713.2,504.2 715.0,502.0" fill="none" stroke="#99cc00" stroke-width="4" stroke-linejoin="round" stroke-linecap="round" />
<polyline points="720.0,383.0 721.8,383.6 724.2,384.2 727.0,385.0 730.2,385.8 733.6,386.8 737.1,388.0 740.5,389.4 743.9,391.1 747.0,393.0 750.3,395.5 753.5,398.2 756.6,401.2 759.8,404.4 763.0,408.0 766.2,411.7 769.6,415.7 773.0,420.0 776.0,423.8 779.2,428.3 782.7,433.1 786.2,438.1 789.6,443.2 793.0,448.1 796.1,452.8 798.9,456.9 801.2,460.4 803.0,463.0" fill="none" stroke="#99cc00" stroke-width="4" stroke-linejoin="round" stroke-linecap="round" />
<polyline points="830.0,593.0 831.8,591.5 833.9,589.8 836.4,587.7 839.3,585.3 842.3,582.8 845.6,580.1 849.0,577.3 852.6,574.3 856.2,571.4 859.7,568.4 863.3,565.5 866.7,562.7 870.0,560.0 873.1,557.5 876.4,554.8 879.8,552.0 883.3,549.1 886.9,546.2 890.5,543.3 894.0,540.4 897.4,537.7 900.7,535.0 903.8,532.5 906.6,530.2 909.1,528.2 911.2,526.4 913.0,525.0" fill="none" stroke="#99cc00" stroke-width="4" stroke-linejoin="round" stroke-linecap="round" />
<polyline points="913.0,397.0 914.8,397.3 917.0,397.7 919.5,398.1 922.4,398.5 925.5,399.0 928.8,399.4 932.3,400.0 935.9,400.6 939.5,401.2 943.2,401.9 946.9,402.6 950.5,403.4 953.9,404.2 957.2,405.1 960.2,406.0 963.0,407.0 966.6,408.6 969.9,410.3 973.0,412.1 975.9,414.1 978.6,416.2 981.4,418.3 984.1,420.6 987.0,422.9 990.1,425.2 993.4,427.6 997.0,430.0 999.7,431.7 1002.4,433.4 1005.2,435.2 1008.0,437.0 1010.9,438.9 1013.9,440.7 1016.9,442.6 1020.0,444.6 1023.2,446.5 1026.4,448.4 1029.7,450.4 1033.0,452.3 1036.4,454.3 1039.9,456.2 1043.4,458.1 1047.0,460.0 1049.7,461.4 1052.4,462.7 1055.2,464.1 1058.0,465.5 1060.9,466.9 1063.8,468.3 1066.8,469.6 1069.8,471.0 1072.8,472.4 1075.9,473.8 1078.9,475.2 1082.0,476.6 1085.1,477.9 1088.3,479.3 1091.4,480.7 1094.5,482.0 1097.6,483.4 1100.7,484.7 1103.8,486.1 1106.9,487.4 1110.0,488.7 1113.0,490.0 1116.0,491.3 1119.1,492.6 1122.1,493.8 1125.1,495.1 1128.2,496.3 1131.2,497.6 1134.2,498.8 1137.3,500.0 1140.3,501.2 1143.4,502.4 1146.4,503.6 1149.5,504.8 1152.5,506.0 1155.6,507.2 1158.6,508.4 1161.7,509.6 1164.8,510.9 1167.8,512.1 1170.9,513.3 1173.9,514.5 1177.0,515.8 1180.0,517.0 1183.1,518.3 1186.3,519.6 1189.7,521.0 1193.1,522.4 1196.6,523.9 1200.1,525.3 1203.6,526.8 1207.2,528.3 1210.7,529.8 1214.2,531.2 1217.7,532.7 1221.1,534.1 1224.4,535.5 1227.6,536.8 1230.6,538.1 1233.6,539.4 1236.3,540.5 1238.9,541.6 1241.3,542.6 1243.4,543.5 1245.3,544.3 1247.0,545.0" fill="none" stroke="#99cc00" stroke-width="4" stroke-linejoin="round" stroke-linecap="round" />
<polyline points="1300.0,575.0 1301.8,573.9 1303.9,572.6 1306.4,571.1 1309.2,569.4 1312.3,567.6 1315.6,565.7 1319.0,563.7 1322.6,561.5 1326.2,559.3 1329.9,557.0 1333.6,554.7 1337.2,552.2 1340.7,549.8 1344.1,547.3 1347.3,544.9 1350.3,542.4 1353.0,540.0 1356.8,536.1 1360.4,531.9 1363.9,527.5 1367.1,522.9 1370.2,518.3 1373.2,513.6 1376.0,509.0 1378.8,504.6 1381.6,500.4 1384.3,496.5 1387.0,493.0 1390.7,488.7 1394.3,484.8 1397.7,481.2 1401.1,478.0 1404.3,475.0 1407.3,472.2 1410.2,469.6 1413.0,467.0 1417.2,463.1 1421.3,459.5 1424.9,456.4 1427.8,453.9 1430.0,452.0" fill="none" stroke="#99cc00" stroke-width="4" stroke-linejoin="round" stroke-linecap="round" />
<polyline points="1440.0,375.0 1441.8,375.3 1444.1,375.4 1446.8,375.6 1449.8,375.7 1453.1,376.0 1456.5,376.3 1460.1,376.9 1463.5,377.7 1466.9,378.7 1470.1,380.2 1473.0,382.0 1476.3,384.9 1479.6,388.6 1482.8,392.9 1486.0,397.6 1489.0,402.4 1492.0,407.3 1494.8,412.0 1497.5,416.3 1500.0,420.0 1504.3,425.9 1508.3,431.4 1511.9,436.2 1514.8,440.1 1517.0,443.0" fill="none" stroke="#99cc00" stroke-width="4" stroke-linejoin="round" stroke-linecap="round" />
<polyline points="1530.0,423.0 1531.7,423.3 1533.6,423.7 1535.7,424.1 1538.1,424.6 1540.6,425.1 1543.4,425.6 1546.3,426.2 1549.3,426.8 1552.5,427.4 1555.8,428.1 1559.2,428.7 1562.6,429.4 1566.1,430.1 1569.7,430.8 1573.3,431.5 1576.9,432.2 1580.5,432.9 1584.1,433.6 1587.6,434.3 1591.1,435.0 1594.5,435.6 1597.8,436.2 1601.0,436.9 1604.1,437.4 1607.0,438.0 1610.3,438.6 1613.5,439.1 1616.8,439.5 1620.1,439.9 1623.4,440.2 1626.7,440.5 1629.9,440.7 1633.2,441.0 1636.4,441.2 1639.5,441.5 1642.7,441.8 1645.8,442.1 1648.8,442.5 1651.8,443.0 1654.7,443.5 1657.6,444.1 1660.4,444.8 1663.1,445.5 1665.7,446.5 1668.2,447.5 1670.7,448.7 1673.0,450.0 1677.3,452.9 1681.1,455.9 1684.6,459.1 1687.8,462.6 1690.7,466.4 1693.4,470.6 1696.1,475.3 1698.7,480.5 1701.3,486.3 1704.1,492.8 1707.0,500.0 1710.0,508.2 1713.1,517.7 1716.1,528.0 1719.1,539.0 1722.1,550.6 1725.1,562.3 1728.0,574.1 1731.0,585.7 1734.0,596.9 1737.0,607.4 1740.0,617.0 1743.0,625.9 1746.0,634.5 1749.0,642.7 1752.0,650.7 1754.9,658.3 1757.9,665.7 1760.9,672.9 1763.9,679.9 1766.9,686.8 1770.0,693.4 1773.0,700.0 1776.1,706.5 1779.4,712.9 1782.7,719.2 1786.0,725.3 1789.3,731.2 1792.6,736.9 1795.8,742.2 1798.9,747.3 1801.8,752.0 1804.5,756.2 1807.0,760.0 1811.8,766.6 1815.8,771.1 1819.2,774.1 1822.0,776.2 1824.0,778.0" fill="none" stroke="#99cc00" stroke-width="4" stroke-linejoin="round" stroke-linecap="round" />
<polyline points="1824.0,850.0 1826.0,849.2 1828.9,848.1 1832.3,846.7 1836.1,845.3 1839.9,843.7 1843.7,842.3 1847.1,840.9 1850.0,839.8 1852.0,839.0" fill="none" stroke="#99cc00" stroke-width="4" stroke-linejoin="round" stroke-linecap="round" />
<polyline points="49.0,179.0 50.7,179.3 52.6,179.7 54.8,180.2 57.3,180.7 59.9,181.2 62.8,181.8 65.8,182.4 68.9,183.1 72.2,183.7 75.6,184.4 79.0,185.1 82.6,185.8 86.1,186.4 89.7,187.1 93.2,187.8 96.8,188.4 100.3,189.0 103.7,189.5 107.0,190.0 109.9,190.4 112.8,190.8 115.7,191.1 118.7,191.5 121.8,191.8 124.9,192.1 128.0,192.4 131.1,192.7 134.2,193.0 137.4,193.3 140.5,193.6 143.6,193.8 146.7,194.1 149.8,194.4 152.9,194.7 155.9,195.0 158.9,195.3 161.9,195.6 164.7,195.9 167.6,196.3 170.3,196.6 173.0,197.0 176.6,197.5 180.1,198.1 183.6,198.6 187.0,199.1 190.3,199.7 193.6,200.3 196.8,200.8 200.0,201.4 203.1,202.0 206.1,202.7 209.1,203.3 212.0,204.0 214.8,204.7 217.6,205.4 220.3,206.2 223.0,207.0 226.6,208.2 229.9,209.6 233.0,211.0 235.9,212.5 238.6,214.0 241.4,215.5 244.1,217.1 247.0,218.6 250.1,220.1 253.4,221.6 257.0,223.0 259.7,223.9 262.4,224.9 265.2,225.8 268.0,226.7 270.9,227.7 273.9,228.6 276.9,229.5 280.0,230.4 283.2,231.3 286.4,232.1 289.7,233.0 293.0,233.8 296.4,234.7 299.9,235.5 303.4,236.2 307.0,237.0 309.7,237.5 312.4,238.1 315.2,238.6 318.0,239.0 320.9,239.5 323.8,240.0 326.8,240.4 329.8,240.9 332.8,241.3 335.9,241.8 338.9,242.2 342.0,242.6 345.1,243.0 348.3,243.5 351.4,243.9 354.5,244.3 357.6,244.7 360.7,245.2 363.8,245.6 366.9,246.1 370.0,246.5 373.0,247.0 376.0,247.5 379.1,247.9 382.1,248.4 385.1,248.8 388.2,249.2 391.2,249.6 394.2,250.0 397.3,250.5 400.3,250.9 403.4,251.3 406.4,251.8 409.5,252.2 412.5,252.7 415.6,253.1 418.6,253.7 421.7,254.2 424.8,254.7 427.8,255.3 430.9,255.9 433.9,256.6 437.0,257.3 440.0,258.0 443.0,258.8 446.1,259.6 449.1,260.5 452.2,261.4 455.2,262.3 458.3,263.3 461.4,264.3 464.4,265.3 467.5,266.3 470.5,267.4 473.6,268.4 476.6,269.5 479.7,270.6 482.7,271.7 485.8,272.8 488.8,273.8 491.8,274.9 494.9,276.0 497.9,277.0 500.9,278.0 504.0,279.0 507.0,280.0 510.0,280.9 513.0,281.9 516.0,282.8 519.0,283.7 522.0,284.6 525.0,285.5 528.0,286.4 531.0,287.3 534.0,288.2 537.0,289.1 540.0,289.9 543.0,290.8 546.0,291.7 549.0,292.6 552.0,293.5 555.0,294.4 558.0,295.3 561.0,296.2 564.0,297.1 567.0,298.1 570.0,299.0 573.0,300.0 576.1,301.0 579.2,302.0 582.3,303.1 585.5,304.2 588.7,305.3 591.9,306.4 595.2,307.6 598.4,308.7 601.7,309.9 604.9,311.0 608.1,312.2 611.3,313.3 614.5,314.4 617.6,315.5 620.6,316.6 623.6,317.7 626.6,318.7 629.4,319.6 632.2,320.6 634.9,321.4 637.5,322.2 640.0,323.0 643.9,324.1 647.5,325.1 650.9,326.0 654.0,326.7 656.9,327.4 659.7,328.0 662.4,328.5 665.1,329.0 667.8,329.5 670.6,330.1 673.6,330.6 676.7,331.3 680.0,332.0 682.8,332.6 685.7,333.2 688.5,333.7 691.4,334.3 694.3,334.8 697.3,335.4 700.3,335.9 703.3,336.5 706.4,337.1 709.6,337.8 712.8,338.5 716.1,339.2 719.4,340.0 722.9,340.9 726.4,341.9 730.0,343.0 732.7,343.9 735.5,344.8 738.3,345.8 741.2,346.9 744.1,348.0 747.1,349.2 750.1,350.4 753.2,351.6 756.2,352.9 759.4,354.1 762.5,355.4 765.7,356.7 768.8,358.0 772.0,359.3 775.2,360.5 778.3,361.7 781.5,362.9 784.6,364.1 787.8,365.1 790.9,366.2 794.0,367.1 797.0,368.0 800.0,368.8 803.0,369.6 805.9,370.2 808.8,370.9 811.7,371.5 814.6,372.0 817.5,372.6 820.3,373.1 823.2,373.5 826.1,374.0 828.9,374.4 831.8,374.9 834.8,375.3 837.7,375.7 840.7,376.2 843.7,376.6 846.8,377.1 849.9,377.6 853.1,378.2 856.3,378.7 859.6,379.3 863.0,380.0 865.7,380.5 868.5,381.1 871.3,381.7 874.2,382.3 877.2,382.9 880.1,383.5 883.2,384.2 886.2,384.8 889.3,385.5 892.4,386.1 895.5,386.8 898.7,387.5 901.8,388.2 905.0,388.9 908.2,389.6 911.3,390.3 914.5,390.9 917.6,391.6 920.7,392.3 923.8,393.0 926.8,393.6 929.9,394.3 932.8,394.9 935.8,395.6 938.7,396.2 941.5,396.8 944.3,397.4 947.0,398.0 950.4,398.7 953.7,399.4 956.9,400.1 960.1,400.7 963.2,401.4 966.3,402.0 969.3,402.6 972.3,403.2 975.2,403.8 978.2,404.4 981.1,405.0 983.9,405.6 986.8,406.2 989.7,406.8 992.5,407.4 995.4,408.0 998.3,408.6 1001.2,409.3 1004.1,409.9 1007.0,410.6 1010.0,411.3 1013.0,412.0 1016.0,412.7 1019.1,413.5 1022.1,414.3 1025.1,415.1 1028.2,415.9 1031.2,416.8 1034.2,417.6 1037.3,418.5 1040.3,419.3 1043.4,420.2 1046.4,421.1 1049.5,421.9 1052.5,422.8 1055.6,423.7 1058.6,424.5 1061.7,425.3 1064.8,426.2 1067.8,427.0 1070.9,427.8 1073.9,428.5 1077.0,429.3 1080.0,430.0 1083.1,430.7 1086.2,431.4 1089.4,432.1 1092.6,432.7 1095.8,433.4 1099.1,434.1 1102.3,434.7 1105.6,435.3 1108.8,436.0 1112.1,436.6 1115.3,437.2 1118.5,437.8 1121.7,438.4 1124.8,438.9 1127.8,439.5 1130.8,440.0 1133.7,440.6 1136.6,441.1 1139.3,441.6 1142.0,442.1 1144.6,442.5 1147.0,443.0 1151.1,443.8 1154.6,444.4 1157.7,445.0 1160.4,445.5 1163.0,445.9 1165.5,446.4 1168.0,446.8 1170.7,447.3 1173.6,447.8 1176.9,448.4 1180.6,449.2 1185.0,450.0 1187.3,450.5 1189.8,450.9 1192.4,451.5 1195.1,452.0 1197.8,452.6 1200.7,453.2 1203.7,453.8 1206.7,454.4 1209.8,455.0 1213.0,455.7 1216.2,456.3 1219.4,457.0 1222.6,457.6 1225.9,458.3 1229.2,459.0 1232.4,459.6 1235.7,460.3 1238.9,460.9 1242.1,461.6 1245.2,462.2 1248.3,462.8 1251.4,463.4 1254.3,463.9 1257.2,464.5 1260.0,465.0 1263.4,465.6 1266.6,466.3 1269.8,466.9 1272.9,467.6 1275.9,468.2 1278.8,468.9 1281.7,469.5 1284.6,470.2 1287.5,470.8 1290.4,471.4 1293.3,471.9 1296.2,472.5 1299.1,473.0 1302.1,473.4 1305.2,473.8 1308.3,474.2 1311.6,474.5 1314.9,474.7 1318.4,474.9 1322.0,475.0 1324.6,475.0 1327.3,475.0 1330.0,474.9 1332.8,474.8 1335.6,474.6 1338.4,474.4 1341.3,474.2 1344.2,473.9 1347.1,473.6 1350.0,473.3 1353.0,473.0 1356.0,472.6 1359.1,472.2 1362.1,471.9 1365.2,471.5 1368.3,471.1 1371.4,470.7 1374.6,470.4 1377.8,470.0 1381.0,469.7 1384.2,469.4 1387.4,469.1 1390.6,468.8 1393.9,468.6 1397.1,468.4 1400.4,468.2 1403.7,468.1 1407.0,468.0 1409.8,468.0 1412.8,468.0 1415.8,468.0 1418.9,468.0 1422.0,468.0 1425.2,468.1 1428.4,468.2 1431.7,468.3 1435.0,468.4 1438.3,468.5 1441.7,468.6 1445.1,468.8 1448.5,468.9 1451.8,469.1 1455.2,469.2 1458.6,469.4 1461.9,469.6 1465.2,469.8 1468.5,469.9 1471.7,470.1 1474.9,470.3 1478.1,470.5 1481.1,470.7 1484.2,470.8 1487.1,471.0 1489.9,471.2 1492.7,471.3 1495.4,471.5 1497.9,471.6 1500.4,471.7 1502.7,471.8 1504.9,471.9 1507.0,472.0 1512.2,472.1 1515.9,472.1 1518.4,472.0 1520.2,471.8 1521.5,471.6 1522.8,471.5 1524.3,471.4 1526.4,471.5 1529.5,471.8 1533.9,472.2 1540.0,473.0 1542.0,473.3 1544.2,473.6 1546.5,473.9 1549.0,474.2 1551.5,474.6 1554.3,474.9 1557.1,475.3 1560.0,475.8 1563.0,476.2 1566.1,476.6 1569.3,477.1 1572.6,477.6 1575.9,478.1 1579.3,478.6 1582.8,479.1 1586.3,479.6 1589.8,480.2 1593.4,480.7 1596.9,481.3 1600.5,481.8 1604.1,482.4 1607.7,482.9 1611.2,483.5 1614.8,484.0 1618.3,484.6 1621.7,485.2 1625.2,485.7 1628.5,486.2 1631.9,486.8 1635.1,487.3 1638.3,487.8 1641.4,488.4 1644.3,488.9 1647.2,489.4 1650.0,489.8 1652.7,490.3 1655.2,490.8 1657.6,491.2 1659.9,491.6 1662.0,492.0 1667.8,493.1 1672.8,494.2 1677.0,495.2 1680.6,496.1 1683.7,496.9 1686.3,497.8 1688.7,498.6 1690.9,499.4 1693.0,500.2 1695.2,501.1 1697.5,502.0 1700.1,503.0 1703.0,504.0 1706.2,505.1 1709.3,506.2 1712.5,507.4 1715.6,508.6 1718.8,509.8 1721.9,511.0 1725.1,512.3 1728.2,513.5 1731.4,514.8 1734.5,516.1 1737.7,517.4 1740.8,518.7 1744.0,520.0 1747.2,521.3 1750.3,522.6 1753.5,524.0 1756.6,525.3 1759.8,526.6 1762.9,528.0 1766.1,529.4 1769.2,530.8 1772.4,532.2 1775.5,533.6 1778.7,535.0 1781.8,536.5 1785.0,538.0 1788.2,539.5 1791.5,541.2 1794.8,542.8 1798.1,544.5 1801.5,546.3 1804.8,548.0 1808.1,549.7 1811.3,551.4 1814.5,553.1 1817.6,554.7 1820.5,556.2 1823.3,557.7 1826.0,559.0 1830.1,561.0 1834.2,562.9 1838.0,564.7 1841.6,566.3 1844.8,567.8 1847.7,569.1 1850.1,570.1 1852.0,571.0" fill="none" stroke="#000000" stroke-width="3" stroke-linejoin="round" stroke-linecap="round" />
<polyline points="49.0,273.0 50.8,273.5 53.1,274.2 55.7,275.1 58.6,276.1 61.8,277.2 65.2,278.3 68.8,279.4 72.4,280.4 76.1,281.3 79.8,282.1 83.3,282.6 86.8,283.0 90.0,283.0 93.1,282.7 96.2,282.2 99.4,281.5 102.5,280.6 105.6,279.5 108.7,278.4 111.8,277.1 114.9,275.8 117.9,274.5 121.0,273.3 124.0,272.1 127.0,271.0 130.0,270.0 133.1,269.0 136.2,267.9 139.2,266.8 142.1,265.6 145.0,264.5 147.9,263.4 150.8,262.4 153.8,261.5 156.9,260.8 160.1,260.3 163.5,260.0 167.0,260.0 169.8,260.1 172.7,260.3 175.8,260.6 179.0,261.0 182.2,261.5 185.5,262.0 188.9,262.6 192.2,263.4 195.6,264.2 198.9,265.1 202.2,266.2 205.4,267.3 208.5,268.6 211.5,269.9 214.3,271.4 217.0,273.0 220.7,275.7 224.2,278.8 227.5,282.3 230.7,286.1 233.7,290.1 236.6,294.2 239.5,298.3 242.2,302.3 244.8,306.2 247.4,309.8 250.0,313.0 253.7,317.6 256.8,322.0 259.7,326.0 262.5,329.8 265.5,333.4 268.9,336.8 273.0,340.0 275.6,341.7 278.3,343.4 281.3,345.2 284.5,346.9 287.7,348.5 291.1,350.1 294.4,351.5 297.8,352.9 301.1,354.1 304.3,355.1 307.4,356.0 310.3,356.6 313.0,357.0 316.5,357.1 319.8,356.7 322.7,355.8 325.6,354.6 328.3,353.2 331.0,351.6 333.8,350.0 336.8,348.4 340.0,347.0 342.7,345.9 345.4,344.7 348.1,343.5 350.8,342.2 353.6,341.0 356.5,339.7 359.5,338.3 362.6,337.0 365.9,335.7 369.3,334.3 373.0,333.0 375.7,332.0 378.7,331.0 381.8,329.8 385.1,328.6 388.5,327.4 392.0,326.1 395.5,324.9 399.0,323.7 402.5,322.5 405.9,321.5 409.2,320.5 412.4,319.7 415.4,319.0 418.2,318.4 420.8,318.1 423.0,318.0 428.3,318.8 431.4,320.9 433.6,324.2 436.1,328.3 440.0,333.0 442.4,335.4 445.0,338.0 447.8,340.9 450.8,344.0 453.9,347.2 457.0,350.5 460.3,353.9 463.5,357.3 466.7,360.6 469.9,363.9 473.0,367.0 476.0,370.1 479.0,373.4 482.0,376.7 485.0,380.0 488.0,383.4 491.1,386.6 494.2,389.7 497.3,392.7 500.4,395.4 503.7,397.9 507.0,400.0 509.9,401.5 512.8,402.8 515.8,403.9 518.8,404.8 521.8,405.5 524.9,406.2 528.0,406.7 531.1,407.2 534.3,407.7 537.4,408.2 540.6,408.7 543.8,409.3 547.0,410.0 550.0,410.7 553.1,411.3 556.2,411.8 559.4,412.3 562.5,412.8 565.7,413.2 568.9,413.8 572.1,414.3 575.3,415.0 578.4,415.7 581.4,416.5 584.4,417.5 587.2,418.7 590.0,420.0 593.4,422.1 596.7,424.6 599.9,427.4 603.0,430.5 606.0,433.7 609.0,436.9 611.9,440.1 614.7,443.1 617.5,445.8 620.3,448.1 623.0,450.0 626.2,451.7 629.3,453.0 632.3,453.9 635.2,454.5 638.1,454.8 641.0,455.0 643.9,455.0 646.9,455.0 650.0,455.0 652.9,454.9 655.9,454.8 659.0,454.5 662.1,454.1 665.2,453.6 668.4,453.1 671.4,452.4 674.4,451.7 677.3,450.9 680.0,450.0 683.6,448.3 687.0,446.1 690.1,443.6 693.2,441.2 696.3,439.1 699.6,437.6 703.0,437.0 705.6,437.1 708.0,437.3 710.4,437.8 712.8,438.6 715.3,439.8 718.2,441.4 721.5,443.7 725.4,446.5 730.0,450.0 732.3,451.8 734.7,454.0 737.3,456.4 740.1,459.1 743.1,462.0 746.1,465.0 749.3,468.2 752.5,471.5 755.8,474.9 759.2,478.2 762.6,481.6 765.9,485.0 769.3,488.2 772.6,491.3 775.8,494.3 779.0,497.1 782.1,499.7 785.0,502.0 787.9,504.0 790.5,505.7 793.0,507.0 797.0,508.6 800.5,509.4 803.8,509.6 806.8,509.3 809.6,508.4 812.3,507.2 815.0,505.8 817.7,504.1 820.4,502.3 823.4,500.4 826.5,498.6 830.0,497.0 832.8,495.7 835.7,494.3 838.8,492.6 842.0,490.9 845.2,489.0 848.5,487.0 851.9,485.0 855.2,483.0 858.6,481.0 861.9,479.0 865.2,477.2 868.4,475.4 871.5,473.8 874.5,472.3 877.3,471.0 880.0,470.0 883.5,468.7 886.6,467.6 889.3,466.7 891.8,465.9 894.2,465.3 896.7,465.0 899.2,465.0 902.0,465.2 905.2,465.8 908.8,466.7 913.0,468.0 915.3,468.8 917.8,469.9 920.4,471.0 923.1,472.4 925.9,473.8 928.8,475.4 931.8,477.0 934.9,478.8 938.0,480.6 941.2,482.4 944.4,484.3 947.6,486.2 950.9,488.1 954.2,490.0 957.5,491.9 960.8,493.8 964.1,495.5 967.4,497.2 970.6,498.8 973.8,500.4 976.9,501.7 980.0,503.0 983.0,504.1 986.1,505.2 989.1,506.3 992.2,507.2 995.2,508.2 998.3,509.0 1001.4,509.9 1004.4,510.7 1007.5,511.4 1010.5,512.2 1013.6,512.9 1016.6,513.6 1019.7,514.2 1022.7,514.9 1025.8,515.5 1028.8,516.1 1031.8,516.8 1034.9,517.4 1037.9,518.0 1040.9,518.7 1044.0,519.3 1047.0,520.0 1050.0,520.7 1053.0,521.3 1056.0,522.0 1059.0,522.6 1062.0,523.2 1065.0,523.8 1068.0,524.4 1071.0,525.0 1074.0,525.6 1077.0,526.1 1080.0,526.7 1083.0,527.2 1086.0,527.8 1089.0,528.4 1092.0,528.9 1095.0,529.5 1098.0,530.1 1101.0,530.6 1104.0,531.2 1107.0,531.8 1110.0,532.4 1113.0,533.0 1116.0,533.6 1119.1,534.2 1122.2,534.9 1125.4,535.5 1128.5,536.1 1131.7,536.8 1134.8,537.4 1138.0,538.1 1141.2,538.7 1144.3,539.4 1147.5,540.0 1150.6,540.6 1153.8,541.3 1156.8,541.9 1159.9,542.6 1162.9,543.2 1165.9,543.9 1168.8,544.5 1171.7,545.1 1174.5,545.8 1177.3,546.4 1180.0,547.0 1183.7,547.9 1187.3,548.8 1190.9,549.7 1194.5,550.7 1198.0,551.7 1201.4,552.7 1204.8,553.6 1208.1,554.6 1211.3,555.5 1214.4,556.3 1217.4,557.2 1220.2,557.9 1222.9,558.6 1225.4,559.1 1227.8,559.6 1230.0,560.0 1234.6,560.5 1236.5,560.3 1237.8,559.5 1240.5,558.3 1247.0,557.0 1249.0,556.7 1251.2,556.5 1253.6,556.3 1256.2,556.2 1258.9,556.0 1261.8,555.9 1264.8,555.7 1267.9,555.6 1271.2,555.4 1274.5,555.2 1277.8,555.0 1281.2,554.8 1284.7,554.5 1288.2,554.1 1291.6,553.8 1295.1,553.3 1298.5,552.8 1301.8,552.3 1305.1,551.6 1308.3,550.9 1311.4,550.1 1314.4,549.2 1317.3,548.1 1320.0,547.0 1323.7,545.2 1327.3,543.0 1330.8,540.5 1334.2,537.9 1337.6,535.0 1340.9,531.9 1344.2,528.8 1347.4,525.6 1350.5,522.3 1353.5,519.1 1356.5,515.9 1359.4,512.8 1362.3,509.8 1365.0,507.0 1367.8,504.4 1370.4,502.0 1373.0,500.0 1376.8,497.3 1380.4,495.1 1383.7,493.2 1386.8,491.6 1389.8,490.2 1392.7,489.0 1395.5,487.8 1398.3,486.8 1401.1,485.6 1404.0,484.4 1407.0,483.0 1410.0,481.4 1413.1,479.8 1416.1,478.1 1419.1,476.4 1422.1,474.8 1425.1,473.1 1428.0,471.6 1431.0,470.2 1434.0,468.9 1437.0,467.8 1440.0,467.0 1443.0,466.3 1446.0,465.8 1449.0,465.3 1452.0,465.0 1454.9,464.8 1457.9,464.7 1460.9,464.9 1463.9,465.1 1466.9,465.6 1470.0,466.2 1473.0,467.0 1476.1,468.2 1479.3,469.8 1482.5,471.7 1485.8,473.9 1489.0,476.3 1492.2,478.6 1495.4,480.9 1498.5,483.0 1501.5,484.7 1504.3,486.1 1507.0,487.0 1510.8,487.2 1514.3,486.3 1517.4,484.6 1520.4,482.7 1523.5,481.0 1526.6,480.0 1530.0,480.0 1532.7,480.8 1535.4,482.1 1538.1,483.7 1540.8,485.7 1543.6,487.9 1546.6,490.1 1549.8,492.5 1553.2,494.8 1557.0,497.0 1559.6,498.4 1562.3,499.7 1565.2,501.1 1568.1,502.5 1571.2,503.9 1574.3,505.3 1577.5,506.8 1580.8,508.2 1584.1,509.7 1587.4,511.3 1590.8,512.9 1594.2,514.5 1597.6,516.2 1601.0,518.0 1603.9,519.5 1606.8,521.2 1609.9,523.0 1613.0,524.8 1616.2,526.7 1619.5,528.7 1622.7,530.6 1625.9,532.6 1629.2,534.5 1632.4,536.4 1635.5,538.3 1638.5,540.1 1641.5,541.7 1644.3,543.3 1647.1,544.7 1649.6,545.9 1652.0,547.0 1656.1,548.5 1659.9,549.3 1663.3,549.7 1666.4,549.8 1669.2,549.8 1671.9,549.7 1674.3,549.8 1676.7,550.2 1679.0,551.0 1683.3,553.8 1686.6,557.2 1689.6,561.5 1693.0,567.0 1696.1,572.5 1699.3,578.8 1702.7,585.8 1706.2,592.9 1710.0,600.0 1712.9,605.1 1715.9,610.4 1719.1,615.8 1722.3,621.2 1725.6,626.4 1728.8,631.4 1732.0,636.0 1735.1,640.1 1738.1,643.9 1741.1,647.5 1744.2,650.9 1747.3,654.2 1750.5,657.5 1754.0,661.0 1756.9,663.8 1760.1,666.7 1763.4,669.6 1766.8,672.6 1770.2,675.4 1773.5,678.3 1776.6,681.0 1779.5,683.6 1782.0,686.0 1786.0,690.5 1788.7,694.2 1791.5,698.0 1796.0,703.0 1798.3,705.3 1801.0,708.0 1803.9,710.9 1807.0,714.0 1810.3,717.1 1813.6,720.3 1816.9,723.3 1820.2,726.2 1823.4,728.8 1826.3,731.1 1829.0,733.0 1833.0,735.2 1837.0,736.6 1840.8,737.6 1844.3,738.1 1847.4,738.4 1850.0,738.7 1852.0,739.0" fill="none" stroke="#000000" stroke-width="2" stroke-linejoin="round" stroke-linecap="round" />
<polyline points="49.0,267.0 50.7,267.0 52.6,267.0 54.9,267.1 57.4,267.1 60.0,267.1 62.9,267.2 66.0,267.2 69.2,267.3 72.5,267.3 75.9,267.3 79.4,267.4 82.9,267.4 86.5,267.4 90.0,267.4 93.6,267.3 97.1,267.3 100.5,267.2 103.8,267.1 107.0,267.0 110.0,266.9 113.1,266.7 116.3,266.5 119.5,266.2 122.7,265.9 126.0,265.6 129.2,265.3 132.5,265.0 135.8,264.7 139.1,264.4 142.3,264.1 145.5,263.7 148.6,263.4 151.7,263.1 154.6,262.9 157.5,262.6 160.3,262.4 163.0,262.2 165.6,262.1 168.0,262.0 172.1,261.9 175.7,261.8 179.0,261.7 182.1,261.7 184.9,261.8 187.6,261.9 190.2,262.1 192.8,262.4 195.4,262.8 198.1,263.3 201.0,264.0 204.0,264.8 206.9,265.8 209.8,266.9 212.7,268.2 215.7,269.5 218.6,270.9 221.6,272.3 224.6,273.8 227.6,275.2 230.8,276.6 234.0,278.0 236.8,279.1 239.6,280.3 242.5,281.4 245.4,282.6 248.3,283.7 251.3,284.9 254.3,286.1 257.4,287.3 260.4,288.4 263.5,289.6 266.7,290.7 269.8,291.9 273.0,293.0 276.0,294.1 278.9,295.2 281.9,296.3 284.9,297.5 287.9,298.6 290.9,299.8 293.9,300.9 297.0,302.0 300.2,303.0 303.4,304.0 306.7,304.9 310.0,305.7 313.5,306.4 317.0,307.0 319.8,307.4 322.7,307.7 325.7,307.9 328.8,308.1 331.9,308.2 335.0,308.3 338.2,308.4 341.4,308.4 344.6,308.4 347.9,308.3 351.1,308.3 354.3,308.2 357.5,308.2 360.7,308.1 363.9,308.0 367.0,308.0 370.0,308.0 373.0,308.0 376.3,308.0 379.6,308.0 383.0,307.9 386.3,307.9 389.6,307.8 392.9,307.7 396.2,307.6 399.4,307.5 402.6,307.4 405.7,307.4 408.8,307.4 411.8,307.4 414.7,307.5 417.6,307.6 420.3,307.8 423.0,308.0 426.6,308.4 429.9,308.9 433.0,309.4 435.9,310.0 438.6,310.7 441.4,311.5 444.1,312.3 447.0,313.3 450.1,314.4 453.4,315.6 457.0,317.0 459.7,318.1 462.5,319.2 465.4,320.5 468.4,321.9 471.4,323.4 474.6,324.9 477.8,326.4 481.0,328.0 484.3,329.6 487.5,331.2 490.8,332.8 494.1,334.3 497.4,335.9 500.6,337.3 503.8,338.7 507.0,340.0 510.1,341.2 513.3,342.4 516.5,343.5 519.7,344.6 522.9,345.7 526.1,346.7 529.3,347.7 532.4,348.7 535.6,349.7 538.8,350.7 541.9,351.7 545.0,352.7 548.1,353.7 551.1,354.8 554.1,355.9 557.0,357.0 560.3,358.4 563.5,359.8 566.7,361.2 569.8,362.7 572.9,364.2 576.0,365.7 579.0,367.2 582.0,368.7 585.0,370.2 588.0,371.6 591.0,373.1 594.0,374.4 597.0,375.7 600.0,377.0 603.0,378.2 606.1,379.4 609.1,380.5 612.1,381.6 615.1,382.7 618.1,383.8 621.1,384.8 624.1,385.8 627.1,386.8 630.1,387.7 633.1,388.6 636.1,389.4 639.0,390.2 642.0,391.0 645.2,391.8 648.4,392.5 651.5,393.1 654.7,393.7 657.8,394.2 660.9,394.7 664.1,395.2 667.2,395.6 670.3,396.1 673.5,396.5 676.6,397.0 679.8,397.5 683.0,398.0 686.0,398.5 688.9,398.9 691.9,399.3 694.9,399.7 697.9,400.1 700.9,400.5 703.9,400.9 706.9,401.3 710.0,401.8 713.0,402.3 716.0,402.8 719.0,403.5 722.0,404.2 725.0,405.0 728.1,405.9 731.2,406.9 734.4,408.0 737.6,409.2 740.9,410.4 744.2,411.7 747.4,413.0 750.5,414.3 753.6,415.7 756.6,417.0 759.5,418.3 762.2,419.6 764.7,420.8 767.0,422.0 771.4,424.7 774.5,427.4 777.0,430.1 779.5,432.6 782.6,434.9 787.0,437.0 789.3,437.8 791.8,438.6 794.5,439.4 797.4,440.1 800.4,440.8 803.5,441.4 806.6,442.1 809.8,442.6 813.1,443.2 816.4,443.6 819.6,444.1 822.8,444.4 825.9,444.8 829.0,445.0 832.0,445.2 835.0,445.2 838.0,445.1 841.0,445.0 844.0,444.8 847.1,444.5 850.1,444.2 853.1,444.0 856.1,443.7 859.1,443.4 862.1,443.2 865.1,443.1 868.0,443.0 871.0,443.0 874.1,443.1 876.9,443.1 879.6,443.1 882.1,443.2 884.7,443.3 887.3,443.4 890.0,443.6 892.9,443.9 896.0,444.2 899.4,444.7 903.1,445.3 907.3,446.1 912.0,447.0 914.3,447.5 916.8,448.0 919.3,448.6 922.1,449.2 924.9,449.9 927.8,450.6 930.9,451.3 934.0,452.1 937.2,452.9 940.5,453.7 943.8,454.5 947.1,455.4 950.5,456.2 953.9,457.1 957.3,458.0 960.7,458.9 964.1,459.8 967.5,460.7 970.9,461.5 974.2,462.4 977.4,463.2 980.6,464.1 983.7,464.9 986.7,465.6 989.6,466.4 992.4,467.1 995.1,467.8 997.6,468.4 1000.0,469.0 1004.3,470.0 1008.2,471.0 1011.7,471.8 1015.0,472.6 1018.0,473.3 1020.8,473.9 1023.6,474.5 1026.2,475.1 1028.8,475.7 1031.4,476.3 1034.2,476.9 1037.0,477.6 1040.1,478.3 1043.4,479.1 1047.0,480.0 1049.6,480.7 1052.3,481.3 1055.0,482.1 1057.8,482.8 1060.7,483.6 1063.6,484.4 1066.6,485.2 1069.6,486.0 1072.6,486.9 1075.7,487.7 1078.8,488.6 1081.9,489.4 1085.0,490.2 1088.1,491.1 1091.3,491.9 1094.4,492.7 1097.6,493.5 1100.7,494.3 1103.8,495.0 1106.9,495.7 1110.0,496.4 1113.0,497.0 1116.0,497.6 1119.1,498.1 1122.1,498.7 1125.1,499.2 1128.2,499.6 1131.2,500.1 1134.2,500.5 1137.3,500.9 1140.3,501.3 1143.4,501.7 1146.4,502.1 1149.5,502.4 1152.5,502.8 1155.6,503.2 1158.6,503.6 1161.7,504.0 1164.8,504.5 1167.8,504.9 1170.9,505.4 1173.9,505.9 1177.0,506.4 1180.0,507.0 1183.0,507.6 1186.1,508.3 1189.1,509.0 1192.1,509.7 1195.0,510.5 1198.0,511.3 1201.0,512.1 1204.0,513.0 1207.0,513.8 1209.9,514.7 1212.9,515.5 1215.9,516.3 1218.9,517.2 1222.0,518.0 1225.0,518.7 1228.1,519.5 1231.2,520.2 1234.3,520.9 1237.4,521.5 1240.6,522.0 1243.8,522.6 1247.0,523.0 1249.9,523.4 1252.9,523.7 1255.9,524.0 1258.9,524.3 1262.0,524.6 1265.2,524.8 1268.4,525.1 1271.6,525.3 1274.8,525.5 1278.0,525.6 1281.2,525.8 1284.5,525.9 1287.7,526.0 1290.9,526.1 1294.0,526.1 1297.2,526.1 1300.3,526.1 1303.4,526.1 1306.4,526.0 1309.3,525.9 1312.2,525.8 1315.0,525.6 1317.8,525.5 1320.4,525.2 1323.0,525.0 1326.8,524.5 1330.4,524.0 1333.7,523.3 1336.9,522.5 1340.0,521.6 1342.9,520.7 1345.8,519.7 1348.6,518.7 1351.3,517.6 1354.1,516.5 1357.0,515.4 1359.9,514.3 1362.9,513.2 1366.1,512.1 1369.5,511.0 1373.0,510.0 1375.7,509.3 1378.4,508.5 1381.1,507.6 1383.8,506.8 1386.6,505.9 1389.4,505.0 1392.3,504.2 1395.1,503.3 1398.1,502.3 1401.0,501.5 1404.0,500.6 1407.0,499.7 1410.1,498.8 1413.2,498.0 1416.4,497.2 1419.6,496.5 1422.9,495.8 1426.2,495.1 1429.6,494.5 1433.0,493.9 1436.5,493.4 1440.0,493.0 1442.7,492.7 1445.4,492.5 1448.3,492.3 1451.2,492.1 1454.2,491.9 1457.3,491.8 1460.4,491.7 1463.6,491.6 1466.8,491.5 1470.0,491.5 1473.3,491.5 1476.6,491.4 1479.9,491.4 1483.2,491.5 1486.5,491.5 1489.8,491.5 1493.0,491.6 1496.3,491.7 1499.5,491.8 1502.6,491.9 1505.7,492.0 1508.8,492.1 1511.7,492.2 1514.6,492.3 1517.5,492.4 1520.2,492.5 1522.8,492.6 1525.3,492.8 1527.7,492.9 1530.0,493.0 1534.5,493.3 1538.4,493.6 1541.9,493.9 1545.0,494.3 1547.8,494.7 1550.5,495.1 1552.9,495.6 1555.4,496.1 1557.8,496.6 1560.3,497.2 1563.0,497.8 1566.0,498.5 1569.3,499.2 1573.0,500.0 1575.6,500.5 1578.3,501.1 1581.1,501.7 1584.0,502.3 1586.9,502.9 1590.0,503.6 1593.1,504.3 1596.3,504.9 1599.5,505.7 1602.8,506.4 1606.1,507.1 1609.3,507.9 1612.6,508.6 1615.9,509.4 1619.1,510.1 1622.3,510.8 1625.4,511.6 1628.5,512.3 1631.5,513.0 1634.5,513.7 1637.3,514.4 1640.0,515.0 1643.6,515.8 1647.1,516.5 1650.4,517.2 1653.7,517.8 1656.9,518.3 1660.0,518.9 1663.1,519.4 1666.1,520.0 1669.0,520.6 1672.0,521.3 1674.9,522.1 1677.9,523.0 1680.9,524.0 1683.9,525.1 1686.9,526.5 1690.0,528.0 1693.1,529.7 1696.1,531.6 1699.1,533.5 1702.1,535.7 1705.1,537.9 1708.0,540.2 1711.0,542.7 1713.9,545.2 1716.9,547.8 1720.0,550.4 1723.1,553.1 1726.3,555.9 1729.6,558.6 1732.9,561.4 1736.4,564.2 1740.0,567.0 1742.7,569.1 1745.5,571.2 1748.4,573.5 1751.4,575.8 1754.5,578.1 1757.6,580.5 1760.8,583.0 1764.0,585.4 1767.2,587.9 1770.5,590.4 1773.8,592.9 1777.0,595.3 1780.3,597.8 1783.5,600.2 1786.6,602.6 1789.8,604.9 1792.9,607.1 1795.9,609.3 1798.8,611.4 1801.6,613.4 1804.4,615.2 1807.0,617.0 1810.8,619.4 1814.5,621.8 1818.3,624.0 1822.0,626.1 1825.6,628.1 1829.1,630.0 1832.5,631.8 1835.8,633.4 1838.9,635.0 1841.9,636.4 1844.6,637.8 1847.1,639.0 1849.3,640.1 1851.3,641.1 1853.0,642.0" fill="none" stroke="#3366ee" stroke-width="5" stroke-linejoin="round" stroke-linecap="round" />
<polyline points="49.0,211.0 50.7,210.8 52.7,210.6 55.1,210.4 57.7,210.1 60.5,209.8 63.6,209.5 66.8,209.2 70.2,208.9 73.7,208.5 77.2,208.2 80.8,207.8 84.4,207.4 88.0,207.0 91.5,206.6 94.8,206.2 98.1,205.8 101.2,205.3 104.0,204.9 106.7,204.4 109.0,204.0 113.3,202.9 116.6,201.6 119.1,200.3 121.3,198.8 123.4,197.4 125.7,196.1 128.6,194.8 132.2,193.8 137.0,193.0 139.3,192.8 141.7,192.6 144.4,192.4 147.3,192.3 150.3,192.2 153.5,192.2 156.8,192.1 160.1,192.1 163.6,192.1 167.1,192.1 170.6,192.2 174.1,192.2 177.7,192.2 181.1,192.3 184.5,192.3 187.9,192.4 191.1,192.4 194.2,192.4 197.1,192.3 199.9,192.3 202.5,192.2 204.9,192.1 207.0,192.0 212.8,191.5 217.1,190.9 220.4,190.1 222.9,189.3 224.9,188.4 226.9,187.3 229.0,186.0 233.3,182.1 236.3,177.4 240.0,173.0 243.0,170.6 246.3,168.1 249.8,165.8 253.4,164.1 257.0,163.0 259.9,162.8 262.9,163.1 265.8,163.9 268.9,164.9 272.3,165.9 276.0,167.0 278.8,167.7 281.9,168.4 285.2,169.1 288.6,170.0 292.0,170.8 295.4,171.7 298.5,172.7 301.5,173.8 304.0,175.0 308.2,177.9 311.0,181.1 313.8,184.8 318.0,189.0 320.5,191.1 323.3,193.4 326.3,195.7 329.5,198.2 332.9,200.8 336.2,203.4 339.6,206.0 342.9,208.5 346.0,211.0 349.0,213.5 352.0,216.0 355.0,218.6 358.0,221.2 361.0,223.8 364.0,226.3 367.0,228.6 370.0,230.9 373.0,233.0 376.0,234.9 378.9,236.8 381.7,238.5 384.6,240.2 387.5,241.7 390.6,243.1 393.8,244.5 397.3,245.8 401.0,247.0 403.6,247.8 406.3,248.5 409.1,249.3 412.0,250.0 415.0,250.7 418.1,251.4 421.2,252.0 424.3,252.6 427.5,253.0 430.7,253.4 433.8,253.8 436.9,254.0 440.0,254.0 443.0,254.0 446.2,253.8 449.4,253.3 452.6,252.8 455.9,252.0 459.1,251.2 462.3,250.2 465.5,249.3 468.6,248.3 471.8,247.3 474.9,246.3 478.0,245.4 481.0,244.7 484.0,244.0 487.2,243.4 490.5,242.8 493.7,242.2 497.0,241.6 500.2,241.1 503.3,240.6 506.4,240.2 509.4,239.8 512.2,239.5 515.0,239.3 517.6,239.1 520.0,239.0 524.1,238.9 527.4,238.8 530.2,239.0 533.0,239.6 536.1,240.9 540.0,243.0 542.5,244.5 545.2,246.3 548.0,248.3 551.0,250.5 554.1,252.8 557.2,255.3 560.4,258.0 563.6,260.9 566.8,263.8 569.9,266.9 573.0,270.0 576.1,273.2 579.2,276.6 582.4,280.0 585.6,283.6 588.8,287.3 592.0,291.1 595.2,295.1 598.3,299.3 601.3,303.7 604.2,308.2 607.0,313.0 610.6,320.3 614.1,328.7 617.4,337.7 620.6,346.9 623.7,355.8 626.8,364.1 629.9,371.3 633.0,377.0 636.1,381.2 639.2,384.4 642.2,386.6 645.2,388.1 648.2,389.1 651.1,389.6 654.1,389.8 657.0,390.0 660.3,389.7 663.4,388.6 666.4,387.0 669.5,385.0 672.7,383.0 676.2,381.3 680.0,380.0 682.6,379.4 685.4,378.9 688.3,378.3 691.2,377.8 694.3,377.4 697.4,377.1 700.5,376.8 703.7,376.7 706.8,376.7 709.9,376.8 713.0,377.0 716.0,377.5 718.9,378.2 721.8,379.1 724.6,380.1 727.5,381.2 730.4,382.4 733.4,383.6 736.5,384.6 739.8,385.6 743.3,386.4 747.0,387.0 749.7,387.3 752.6,387.5 755.6,387.6 758.8,387.7 762.0,387.7 765.3,387.7 768.7,387.7 772.1,387.6 775.4,387.5 778.8,387.4 782.1,387.3 785.3,387.2 788.4,387.1 791.5,387.1 794.3,387.0 797.0,387.0 800.6,387.0 804.0,387.1 807.2,387.3 810.3,387.4 813.1,387.6 816.0,387.7 818.7,387.7 821.5,387.7 824.2,387.6 827.1,387.4 830.0,387.0 833.0,386.4 836.0,385.5 839.0,384.5 842.0,383.3 844.9,382.0 847.9,380.8 850.9,379.6 853.9,378.6 856.9,377.7 860.0,377.2 863.0,377.0 866.1,377.1 869.3,377.5 872.5,378.1 875.8,378.9 879.0,379.9 882.2,380.9 885.4,382.1 888.5,383.3 891.5,384.5 894.3,385.8 897.0,387.0 900.7,389.1 903.8,391.5 906.6,394.0 909.3,396.6 912.3,399.1 915.8,401.2 920.0,403.0 922.5,403.7 925.2,404.3 928.1,404.8 931.1,405.2 934.3,405.6 937.5,405.9 940.8,406.2 944.2,406.4 947.5,406.7 950.8,406.9 954.0,407.1 957.2,407.4 960.2,407.7 963.0,408.0 966.4,408.5 969.6,408.9 972.7,409.4 975.6,409.9 978.6,410.3 981.4,410.8 984.4,411.3 987.3,411.7 990.4,412.2 993.6,412.6 997.0,413.0 999.8,413.3 1002.8,413.5 1006.0,413.7 1009.2,413.9 1012.5,414.0 1015.8,414.2 1019.2,414.3 1022.5,414.5 1025.7,414.7 1028.9,415.0 1031.9,415.4 1034.8,415.8 1037.5,416.3 1040.0,417.0 1044.2,418.5 1047.7,420.2 1050.7,422.1 1053.4,424.3 1056.2,426.8 1059.3,429.7 1063.0,433.0 1065.7,435.4 1068.7,438.1 1071.8,441.1 1075.0,444.2 1078.3,447.5 1081.7,450.8 1085.0,454.2 1088.2,457.5 1091.3,460.8 1094.3,464.0 1097.0,467.0 1100.8,471.7 1104.3,476.4 1107.4,481.2 1110.4,485.8 1113.5,490.0 1116.6,493.8 1120.0,497.0 1122.6,499.0 1125.0,500.7 1127.3,502.1 1129.6,503.2 1132.1,504.1 1135.0,504.9 1138.3,505.6 1142.3,506.3 1147.0,507.0 1149.2,507.3 1151.7,507.5 1154.3,507.7 1157.1,507.8 1160.0,508.0 1163.1,508.1 1166.2,508.1 1169.5,508.2 1172.8,508.2 1176.2,508.3 1179.6,508.3 1183.0,508.4 1186.4,508.4 1189.7,508.5 1193.0,508.5 1196.3,508.6 1199.4,508.8 1202.4,508.9 1205.3,509.1 1208.1,509.4 1210.6,509.7 1213.0,510.0 1217.3,510.9 1221.1,512.0 1224.6,513.4 1227.8,514.9 1230.7,516.4 1233.4,517.9 1236.1,519.4 1238.7,520.7 1241.3,521.8 1244.1,522.6 1247.0,523.0 1250.0,523.0 1253.0,522.7 1255.9,522.2 1258.8,521.4 1261.7,520.4 1264.6,519.4 1267.5,518.4 1270.5,517.3 1273.6,516.4 1276.7,515.6 1280.0,515.0 1282.9,514.7 1285.8,514.7 1288.9,514.8 1292.0,515.1 1295.2,515.3 1298.4,515.6 1301.6,515.9 1304.8,516.0 1308.0,515.9 1311.1,515.7 1314.2,515.1 1317.1,514.3 1320.0,513.0 1323.3,511.0 1326.6,508.7 1329.8,505.9 1333.0,502.9 1336.1,499.6 1339.1,496.0 1342.1,492.3 1345.0,488.5 1347.8,484.7 1350.4,480.8 1353.0,477.0 1356.7,470.6 1360.1,463.4 1363.1,455.9 1366.1,448.5 1369.0,441.4 1371.9,435.1 1375.0,430.0 1378.3,426.2 1381.7,423.3 1385.2,421.2 1388.7,419.6 1392.0,418.2 1395.1,416.8 1398.0,415.0 1401.5,412.3 1404.6,409.7 1407.4,407.2 1410.1,404.6 1413.0,402.0 1415.8,399.1 1418.5,396.0 1421.3,393.0 1424.4,390.2 1428.0,388.0 1430.6,386.9 1433.3,386.0 1436.2,385.2 1439.3,384.5 1442.5,384.0 1445.9,383.5 1449.4,383.2 1453.0,383.0 1455.7,382.9 1458.5,382.9 1461.3,383.0 1464.2,383.1 1467.2,383.3 1470.3,383.5 1473.4,383.8 1476.7,384.0 1480.0,384.4 1483.5,384.7 1487.0,385.0 1489.7,385.3 1492.6,385.6 1495.6,386.0 1498.7,386.4 1501.9,386.9 1505.2,387.4 1508.4,387.8 1511.7,388.3 1514.9,388.7 1518.1,389.1 1521.1,389.4 1524.1,389.7 1526.9,389.9 1529.6,390.0 1532.0,390.0 1536.1,389.6 1539.9,388.7 1543.2,387.5 1546.3,386.2 1549.2,384.9 1551.9,383.8 1554.4,383.1 1557.0,383.0 1560.8,384.0 1564.0,386.0 1567.0,388.5 1569.9,391.0 1573.0,393.0 1576.1,394.2 1579.0,394.9 1582.0,395.5 1585.6,396.4 1590.0,398.0 1592.5,399.0 1595.2,400.1 1598.3,401.2 1601.5,402.5 1604.8,403.9 1608.2,405.3 1611.5,406.8 1614.7,408.3 1617.8,409.8 1620.5,411.4 1623.0,413.0 1627.1,416.4 1629.8,419.7 1632.3,423.4 1635.4,427.7 1640.0,433.0 1642.3,435.6 1644.9,438.6 1647.6,442.1 1650.5,445.8 1653.6,449.7 1656.8,453.6 1660.0,457.5 1663.4,461.1 1666.7,464.4 1670.1,467.3 1673.5,469.6 1676.8,471.2 1680.0,472.0 1683.0,471.9 1686.1,470.8 1689.2,469.1 1692.3,466.7 1695.5,464.0 1698.7,460.9 1701.9,457.6 1705.0,454.4 1708.2,451.3 1711.3,448.5 1714.3,446.1 1717.3,444.3 1720.2,443.2 1723.0,443.0 1726.4,443.9 1729.5,445.8 1732.5,448.5 1735.4,451.9 1738.2,455.7 1741.0,459.9 1743.8,464.3 1746.8,468.6 1750.0,472.8 1753.3,476.7 1757.0,480.0 1759.7,482.0 1762.6,484.0 1765.6,485.9 1768.8,487.8 1772.0,489.6 1775.3,491.3 1778.7,493.1 1782.1,494.8 1785.4,496.6 1788.8,498.3 1792.1,500.1 1795.3,502.0 1798.4,503.9 1801.5,505.8 1804.3,507.9 1807.0,510.0 1810.7,513.3 1814.3,516.8 1817.8,520.4 1821.1,524.1 1824.3,527.9 1827.3,531.7 1830.2,535.5 1832.9,539.3 1835.4,543.0 1837.8,546.6 1840.0,550.0 1845.0,559.5 1848.6,569.0 1851.1,577.2 1853.0,583.0" fill="none" stroke="#00ee00" stroke-width="5" stroke-linejoin="round" stroke-linecap="round" />
<polyline points="49.0,317.0 50.7,317.1 52.6,317.2 54.8,317.3 57.3,317.5 59.9,317.6 62.8,317.8 65.8,317.9 68.9,318.1 72.2,318.3 75.6,318.5 79.0,318.7 82.6,318.8 86.1,319.0 89.7,319.2 93.2,319.4 96.8,319.6 100.3,319.7 103.7,319.9 107.0,320.0 109.9,320.1 112.8,320.2 115.7,320.3 118.7,320.4 121.8,320.5 124.9,320.5 128.0,320.6 131.1,320.7 134.2,320.7 137.4,320.8 140.5,320.9 143.6,320.9 146.7,321.0 149.8,321.1 152.9,321.2 155.9,321.3 158.9,321.4 161.9,321.5 164.7,321.6 167.6,321.7 170.3,321.8 173.0,322.0 176.6,322.2 180.2,322.3 183.8,322.4 187.4,322.4 190.9,322.4 194.4,322.4 197.8,322.5 201.1,322.6 204.3,322.7 207.4,322.9 210.3,323.3 213.2,323.7 215.9,324.3 218.4,325.0 220.8,325.9 223.0,327.0 228.3,331.4 231.4,336.9 233.6,343.5 236.1,351.2 240.0,360.0 242.3,364.6 244.8,369.7 247.4,375.2 250.1,381.1 253.0,387.1 255.9,393.2 259.1,399.3 262.3,405.1 265.7,410.6 269.3,415.6 273.0,420.0 275.7,422.8 278.4,425.5 281.3,428.1 284.3,430.5 287.4,432.9 290.5,435.2 293.7,437.4 296.9,439.4 300.2,441.3 303.5,443.0 306.8,444.6 310.1,446.0 313.4,447.3 316.6,448.4 319.8,449.3 323.0,450.0 326.1,450.5 329.2,450.6 332.4,450.5 335.5,450.1 338.6,449.6 341.8,448.9 344.9,448.0 348.0,447.1 351.1,446.0 354.2,445.0 357.4,444.0 360.5,442.9 363.6,442.0 366.8,441.2 369.9,440.5 373.0,440.0 376.2,439.6 379.4,439.2 382.6,438.9 385.9,438.5 389.2,438.2 392.5,438.0 395.7,437.7 399.0,437.5 402.2,437.3 405.4,437.2 408.6,437.0 411.6,437.0 414.6,436.9 417.5,436.9 420.3,436.9 423.0,437.0 426.7,437.2 430.2,437.4 433.5,437.7 436.6,438.1 439.6,438.5 442.5,439.0 445.4,439.6 448.2,440.3 451.1,441.1 454.0,442.0 457.0,443.0 460.1,444.1 463.3,445.3 466.5,446.7 469.7,448.1 473.0,449.6 476.1,451.2 479.2,452.9 482.2,454.6 485.0,456.4 487.6,458.2 490.0,460.0 494.2,464.4 497.2,469.3 499.8,474.3 502.8,479.0 507.0,483.0 509.4,484.5 512.0,485.9 514.8,487.1 517.8,488.2 520.9,489.2 524.1,490.2 527.3,491.1 530.6,492.0 533.8,493.0 536.9,494.0 540.0,495.0 543.0,496.1 546.0,497.2 549.0,498.2 552.0,499.3 554.9,500.4 557.9,501.5 560.9,502.6 563.9,503.7 566.9,504.8 570.0,505.9 573.0,507.0 576.1,508.1 579.4,509.3 582.8,510.5 586.2,511.7 589.6,512.9 592.9,514.1 596.1,515.3 599.2,516.5 602.1,517.7 604.7,518.9 607.0,520.0 611.6,523.7 614.4,527.8 616.8,530.9 620.0,532.0 622.7,530.9 625.4,528.5 628.3,525.4 631.6,522.0 635.4,519.1 640.0,517.0 642.4,516.4 645.1,516.0 648.0,515.8 651.1,515.6 654.2,515.5 657.5,515.5 660.9,515.5 664.2,515.5 667.6,515.6 670.8,515.5 674.0,515.5 677.1,515.3 680.0,515.0 683.3,514.5 686.4,513.7 689.5,512.7 692.5,511.7 695.4,510.7 698.3,509.7 701.2,508.8 704.1,508.2 707.0,507.8 710.0,507.7 713.0,508.0 716.0,508.6 719.0,509.4 721.9,510.3 724.8,511.4 727.7,512.8 730.7,514.4 733.7,516.3 736.8,518.4 740.1,520.9 743.5,523.8 747.0,527.0 749.8,529.8 752.7,533.0 755.7,536.7 758.9,540.7 762.1,545.0 765.4,549.4 768.8,553.9 772.1,558.4 775.4,562.9 778.6,567.1 781.8,571.1 784.8,574.8 787.7,578.1 790.5,580.8 793.0,583.0 796.8,585.5 800.3,586.9 803.4,587.4 806.3,587.2 809.0,586.5 811.7,585.5 814.4,584.5 817.1,583.6 820.0,583.0 822.8,582.6 825.3,582.1 827.6,581.4 829.9,580.7 832.3,579.9 835.1,579.1 838.4,578.4 842.3,577.7 847.0,577.0 849.2,576.7 851.5,576.5 854.0,576.2 856.6,575.9 859.3,575.6 862.2,575.3 865.1,575.1 868.1,574.8 871.2,574.5 874.3,574.2 877.5,573.9 880.7,573.7 884.0,573.4 887.3,573.2 890.6,573.0 893.9,572.8 897.2,572.6 900.4,572.4 903.6,572.3 906.8,572.2 909.9,572.1 913.0,572.0 916.1,572.0 919.2,572.0 922.4,572.1 925.6,572.3 928.8,572.4 932.1,572.6 935.4,572.9 938.7,573.1 942.0,573.4 945.3,573.7 948.6,573.9 951.8,574.2 955.0,574.4 958.1,574.7 961.2,574.9 964.2,575.0 967.1,575.2 969.9,575.3 972.6,575.3 975.2,575.3 977.7,575.2 980.0,575.0 984.1,574.4 987.6,573.5 990.5,572.3 993.1,570.9 995.4,569.5 997.6,568.0 999.9,566.6 1002.5,565.3 1005.4,564.2 1008.9,563.4 1013.0,563.0 1015.4,562.9 1017.9,563.0 1020.5,563.1 1023.3,563.3 1026.3,563.6 1029.3,563.9 1032.4,564.3 1035.6,564.7 1038.8,565.2 1042.1,565.7 1045.4,566.2 1048.8,566.7 1052.1,567.2 1055.5,567.7 1058.8,568.2 1062.0,568.6 1065.2,569.0 1068.4,569.3 1071.5,569.6 1074.4,569.8 1077.3,570.0 1080.0,570.0 1083.6,569.9 1087.1,569.7 1090.4,569.4 1093.7,569.0 1096.9,568.5 1100.0,567.9 1103.1,567.3 1106.1,566.7 1109.0,566.1 1112.0,565.4 1114.9,564.8 1117.9,564.3 1120.9,563.8 1123.9,563.4 1126.9,563.2 1130.0,563.0 1133.2,562.9 1136.4,562.9 1139.6,562.8 1142.9,562.9 1146.2,562.9 1149.5,563.0 1152.8,563.1 1156.1,563.3 1159.3,563.6 1162.5,563.8 1165.6,564.2 1168.7,564.6 1171.7,565.1 1174.6,565.7 1177.3,566.3 1180.0,567.0 1183.5,568.3 1186.6,569.9 1189.3,571.8 1191.8,573.8 1194.2,576.0 1196.7,578.2 1199.2,580.3 1202.0,582.3 1205.2,584.2 1208.8,585.8 1213.0,587.0 1215.4,587.5 1217.9,587.9 1220.6,588.3 1223.4,588.6 1226.4,588.9 1229.5,589.1 1232.6,589.3 1235.9,589.5 1239.2,589.6 1242.5,589.7 1245.9,589.8 1249.3,589.8 1252.6,589.8 1256.0,589.8 1259.3,589.9 1262.5,589.9 1265.7,589.9 1268.8,589.9 1271.8,589.9 1274.7,589.9 1277.4,589.9 1280.0,590.0 1283.8,590.0 1287.5,589.9 1291.0,589.7 1294.3,589.3 1297.5,589.0 1300.6,588.6 1303.6,588.3 1306.5,588.1 1309.3,587.9 1312.1,587.9 1314.8,588.1 1317.5,588.5 1320.3,589.1 1323.0,590.0 1326.4,591.7 1329.7,594.1 1332.9,596.9 1336.1,600.1 1339.1,603.5 1342.1,606.9 1345.1,610.3 1348.0,613.4 1351.0,616.1 1354.0,618.4 1357.0,620.0 1360.0,621.0 1363.1,621.7 1366.1,622.1 1369.1,622.2 1372.1,622.1 1375.1,621.6 1378.0,621.0 1381.0,620.2 1384.0,619.3 1387.0,618.2 1390.0,617.0 1392.9,615.7 1395.8,614.1 1398.5,612.4 1401.3,610.5 1404.0,608.4 1406.9,606.2 1409.7,603.8 1412.8,601.3 1416.0,598.6 1419.4,595.9 1423.0,593.0 1425.6,590.9 1428.4,588.6 1431.2,586.2 1434.1,583.7 1437.0,581.1 1440.1,578.4 1443.2,575.7 1446.3,572.9 1449.5,570.2 1452.8,567.5 1456.1,564.8 1459.4,562.2 1462.8,559.7 1466.2,557.3 1469.6,555.1 1473.0,553.0 1475.8,551.4 1478.7,549.7 1481.6,548.0 1484.7,546.3 1487.8,544.5 1490.9,542.8 1494.1,541.1 1497.2,539.4 1500.4,537.8 1503.6,536.3 1506.8,534.9 1510.0,533.6 1513.1,532.5 1516.2,531.5 1519.2,530.7 1522.1,530.1 1525.0,529.7 1527.8,529.6 1530.4,529.6 1533.0,530.0 1536.7,531.2 1540.3,533.2 1543.7,535.9 1547.0,539.1 1550.1,542.8 1553.1,546.7 1556.1,550.9 1559.0,555.1 1561.8,559.3 1564.6,563.3 1567.4,567.0 1570.2,570.3 1573.0,573.0 1576.3,575.7 1579.6,578.1 1582.7,580.3 1585.8,582.3 1588.9,584.1 1592.0,585.7 1595.0,587.3 1598.0,588.7 1601.0,590.2 1604.0,591.6 1607.0,593.0 1610.0,594.4 1613.0,595.8 1616.0,597.0 1618.9,598.2 1621.8,599.4 1624.8,600.5 1627.7,601.5 1630.7,602.4 1633.8,603.4 1636.9,604.2 1640.0,605.0 1643.0,605.6 1646.1,605.9 1649.3,606.0 1652.6,606.0 1655.9,606.0 1659.2,605.9 1662.4,606.0 1665.6,606.2 1668.7,606.7 1671.7,607.4 1674.4,608.5 1677.0,610.0 1681.0,613.6 1684.6,618.3 1687.9,623.7 1690.9,629.5 1693.7,635.6 1696.4,641.5 1699.0,647.0 1703.1,655.9 1706.5,664.7 1709.7,673.6 1713.0,683.0 1716.5,693.5 1720.0,704.9 1723.5,715.8 1727.0,725.0 1730.2,731.8 1733.2,737.1 1736.6,741.8 1741.0,747.0 1743.5,749.6 1746.2,752.3 1749.2,755.0 1752.3,757.7 1755.6,760.5 1758.8,763.3 1762.0,766.2 1765.1,769.1 1768.0,772.0 1771.5,775.8 1775.0,779.5 1778.3,783.4 1781.6,787.3 1784.8,791.3 1788.0,795.6 1791.0,800.0 1794.5,805.8 1797.8,812.1 1801.1,818.7 1804.2,825.1 1807.2,831.0 1810.0,836.0 1813.5,841.9 1816.4,846.4 1819.6,850.0 1824.0,853.0 1826.7,854.1 1829.8,855.0 1833.3,855.7 1837.0,856.3 1840.7,856.8 1844.2,857.1 1847.4,857.5 1850.0,857.7 1852.0,858.0" fill="none" stroke="#00ee00" stroke-width="5" stroke-linejoin="round" stroke-linecap="round" />
<polyline points="49.0,168.0 50.8,167.9 53.0,167.7 55.5,167.6 58.3,167.4 61.4,167.2 64.7,166.9 68.1,166.7 71.7,166.4 75.4,166.2 79.1,165.9 82.8,165.6 86.4,165.3 90.0,165.0 92.9,164.7 95.8,164.4 98.8,164.1 101.9,163.7 105.0,163.4 108.1,163.0 111.3,162.6 114.4,162.2 117.6,161.8 120.9,161.5 124.1,161.1 127.3,160.8 130.5,160.5 133.7,160.3 136.9,160.1 140.0,160.0 143.1,159.9 146.2,159.9 149.4,159.9 152.5,159.9 155.6,160.0 158.8,160.1 161.9,160.2 165.0,160.4 168.1,160.5 171.2,160.7 174.4,160.9 177.5,161.1 180.6,161.3 183.8,161.6 186.9,161.8 190.0,162.0 193.1,162.3 196.2,162.6 199.4,162.9 202.5,163.3 205.6,163.7 208.8,164.2 211.9,164.6 215.0,165.1 218.1,165.5 221.2,165.9 224.4,166.2 227.5,166.5 230.6,166.8 233.8,166.9 236.9,167.0 240.0,167.0 243.1,166.9 246.3,166.6 249.5,166.3 252.7,165.9 255.9,165.4 259.1,164.9 262.3,164.3 265.4,163.7 268.6,163.1 271.8,162.5 274.9,161.9 278.0,161.4 281.1,160.9 284.1,160.5 287.1,160.2 290.0,160.0 293.3,159.8 296.5,159.7 299.7,159.7 302.9,159.7 306.0,159.7 309.1,159.8 312.1,159.9 315.1,160.1 318.2,160.3 321.1,160.6 324.1,160.9 327.1,161.2 330.0,161.6 333.0,162.0 336.1,162.5 339.2,163.2 342.2,163.9 345.2,164.8 348.1,165.7 351.1,166.6 354.0,167.5 357.0,168.4 360.1,169.3 363.1,170.1 366.3,170.9 369.6,171.5 373.0,172.0 375.9,172.3 378.8,172.6 381.8,172.9 384.8,173.1 387.9,173.3 391.0,173.5 394.2,173.7 397.4,173.8 400.6,173.8 403.8,173.8 407.0,173.8 410.3,173.7 413.5,173.6 416.7,173.5 419.9,173.3 423.0,173.0 426.1,172.7 429.2,172.2 432.4,171.7 435.5,171.2 438.6,170.6 441.8,169.9 444.9,169.2 448.0,168.4 451.1,167.7 454.2,166.9 457.4,166.2 460.5,165.5 463.6,164.8 466.8,164.1 469.9,163.5 473.0,163.0 476.1,162.5 479.2,162.0 482.4,161.6 485.5,161.1 488.6,160.7 491.8,160.3 494.9,159.9 498.0,159.5 501.1,159.1 504.2,158.8 507.4,158.4 510.5,158.1 513.6,157.8 516.8,157.5 519.9,157.3 523.0,157.0 526.1,156.7 529.2,156.5 532.4,156.2 535.5,155.9 538.6,155.6 541.8,155.3 544.9,155.1 548.0,154.9 551.1,154.7 554.2,154.5 557.4,154.5 560.5,154.4 563.6,154.5 566.8,154.6 569.9,154.7 573.0,155.0 576.1,155.4 579.2,155.8 582.3,156.3 585.3,156.8 588.4,157.4 591.4,158.1 594.5,158.9 597.6,159.6 600.6,160.4 603.7,161.3 606.9,162.2 610.0,163.1 613.2,164.1 616.4,165.0 619.7,166.0 623.0,167.0 625.8,167.9 628.7,168.8 631.5,169.9 634.4,170.9 637.2,172.0 640.1,173.2 643.1,174.4 646.0,175.6 649.0,176.8 651.9,178.0 654.9,179.2 658.0,180.3 661.0,181.4 664.1,182.5 667.2,183.6 670.4,184.5 673.5,185.4 676.8,186.3 680.0,187.0 682.9,187.6 685.8,188.1 688.8,188.5 691.8,189.0 694.9,189.3 698.0,189.7 701.2,190.0 704.3,190.3 707.5,190.5 710.7,190.7 713.9,190.9 717.1,191.1 720.3,191.3 723.5,191.5 726.6,191.6 729.7,191.8 732.7,192.0 735.7,192.2 738.6,192.3 741.5,192.5 744.3,192.8 747.0,193.0 750.6,193.3 754.1,193.6 757.4,193.9 760.7,194.1 763.9,194.3 767.0,194.6 770.1,194.8 773.1,195.0 776.0,195.2 779.0,195.5 781.9,195.8 784.9,196.1 787.9,196.5 790.9,197.0 793.9,197.4 797.0,198.0 800.2,198.6 803.4,199.4 806.6,200.2 809.9,201.1 813.2,202.0 816.5,202.9 819.8,203.9 823.1,204.9 826.3,205.9 829.5,206.9 832.6,207.9 835.7,208.9 838.7,209.7 841.6,210.6 844.3,211.3 847.0,212.0 850.6,212.8 854.0,213.4 857.2,213.8 860.3,214.2 863.1,214.5 866.0,214.8 868.7,215.1 871.5,215.6 874.2,216.2 877.1,217.0 880.0,218.0 883.0,219.3 886.0,220.9 889.0,222.7 892.0,224.7 894.9,226.8 897.9,228.9 900.9,230.9 903.9,233.0 906.9,234.8 910.0,236.5 913.0,238.0 916.1,239.2 919.1,240.1 922.2,240.9 925.3,241.5 928.4,242.0 931.6,242.6 934.7,243.2 937.8,243.8 940.9,244.7 943.9,245.7 947.0,247.0 950.1,248.6 953.2,250.5 956.3,252.5 959.5,254.8 962.6,257.1 965.7,259.4 968.8,261.8 971.7,264.1 974.6,266.2 977.4,268.2 980.0,270.0 983.8,272.4 987.2,274.4 990.3,276.2 993.4,277.9 996.4,279.5 999.6,281.2 1003.0,283.0 1005.8,284.5 1008.6,286.0 1011.5,287.5 1014.4,289.0 1017.4,290.6 1020.4,292.1 1023.5,293.7 1026.7,295.4 1030.0,297.0 1032.7,298.4 1035.4,300.0 1038.1,301.6 1040.8,303.2 1043.6,304.9 1046.5,306.5 1049.5,308.1 1052.6,309.5 1055.9,310.9 1059.3,312.0 1063.0,313.0 1065.7,313.5 1068.5,314.0 1071.5,314.3 1074.5,314.6 1077.7,314.8 1080.9,314.9 1084.2,315.1 1087.6,315.1 1090.9,315.2 1094.2,315.2 1097.5,315.3 1100.8,315.3 1104.0,315.4 1107.1,315.6 1110.1,315.8 1113.0,316.0 1116.4,316.3 1119.7,316.6 1122.8,316.8 1125.9,317.0 1128.9,317.2 1131.9,317.5 1134.8,317.8 1137.8,318.2 1140.7,318.7 1143.7,319.3 1146.7,320.0 1149.8,320.9 1153.0,322.0 1156.0,323.2 1159.1,324.5 1162.2,326.0 1165.3,327.6 1168.5,329.3 1171.6,331.1 1174.8,333.0 1178.0,334.9 1181.2,336.9 1184.4,338.9 1187.6,341.0 1190.7,343.0 1193.9,345.0 1197.0,347.0 1200.1,349.0 1203.3,351.1 1206.5,353.2 1209.7,355.4 1212.8,357.6 1216.0,359.8 1219.2,362.0 1222.3,364.2 1225.4,366.4 1228.5,368.6 1231.5,370.8 1234.4,372.9 1237.2,375.0 1240.0,377.0 1243.4,379.5 1246.7,382.1 1249.9,384.7 1253.0,387.2 1256.0,389.7 1259.0,392.1 1261.9,394.4 1264.7,396.6 1267.5,398.6 1270.3,400.4 1273.0,402.0 1276.3,403.6 1279.5,404.9 1282.6,405.9 1285.6,406.6 1288.6,407.2 1291.5,407.7 1294.4,408.1 1297.2,408.5 1300.0,409.0 1303.3,409.6 1306.1,410.0 1308.7,410.3 1311.5,410.5 1314.6,410.6 1318.3,410.8 1323.0,411.0 1325.4,411.1 1328.1,411.2 1330.9,411.3 1334.0,411.4 1337.2,411.5 1340.5,411.6 1343.9,411.7 1347.3,411.8 1350.8,411.8 1354.2,411.9 1357.7,411.9 1361.0,412.0 1364.2,412.0 1367.3,412.0 1370.3,412.0 1373.0,412.0 1376.7,411.9 1380.2,411.8 1383.5,411.7 1386.6,411.5 1389.6,411.4 1392.5,411.1 1395.4,410.9 1398.2,410.7 1401.1,410.5 1404.0,410.2 1407.0,410.0 1409.9,409.7 1412.6,409.4 1415.2,409.0 1417.6,408.6 1420.2,408.3 1422.8,407.9 1425.5,407.5 1428.6,407.3 1431.9,407.1 1435.7,407.0 1440.0,407.0 1442.4,407.1 1444.9,407.1 1447.6,407.3 1450.5,407.4 1453.5,407.5 1456.6,407.7 1459.7,407.9 1463.0,408.1 1466.3,408.3 1469.7,408.6 1473.1,408.8 1476.5,409.1 1479.8,409.3 1483.2,409.6 1486.5,409.9 1489.8,410.2 1492.9,410.5 1496.0,410.8 1499.0,411.1 1501.8,411.4 1504.5,411.7 1507.0,412.0 1510.9,412.5 1514.4,413.1 1517.7,413.7 1520.6,414.4 1523.4,415.1 1526.1,415.8 1528.7,416.5 1531.4,417.2 1534.1,417.8 1537.0,418.4 1540.0,419.0 1543.3,419.5 1547.0,420.0 1549.6,420.3 1552.2,420.5 1555.0,420.7 1557.9,420.9 1560.8,421.1 1563.8,421.3 1566.9,421.5 1570.0,421.6 1573.2,421.7 1576.4,421.9 1579.6,422.0 1582.8,422.1 1585.9,422.2 1589.1,422.3 1592.2,422.4 1595.3,422.5 1598.4,422.7 1601.3,422.8 1604.2,422.9 1607.0,423.0 1610.4,423.2 1613.7,423.3 1617.0,423.5 1620.2,423.6 1623.4,423.7 1626.5,423.9 1629.6,424.0 1632.6,424.1 1635.7,424.2 1638.7,424.4 1641.7,424.5 1644.7,424.6 1647.8,424.7 1650.8,424.8 1653.9,424.9 1657.0,425.0 1660.2,425.1 1663.4,425.3 1666.6,425.4 1669.9,425.6 1673.2,425.9 1676.5,426.1 1679.8,426.3 1683.1,426.4 1686.3,426.6 1689.5,426.7 1692.6,426.8 1695.7,426.8 1698.7,426.7 1701.6,426.6 1704.3,426.3 1707.0,426.0 1710.6,425.3 1714.0,424.4 1717.2,423.2 1720.3,421.9 1723.1,420.5 1726.0,419.0 1728.7,417.6 1731.5,416.2 1734.2,414.9 1737.1,413.9 1740.0,413.0 1743.0,412.4 1746.0,412.0 1749.0,411.7 1752.0,411.6 1754.9,411.5 1757.9,411.5 1760.9,411.4 1763.9,411.3 1766.9,411.0 1770.0,410.6 1773.0,410.0 1776.0,409.2 1779.0,408.2 1781.9,407.0 1784.8,405.8 1787.7,404.4 1790.7,403.1 1793.7,401.7 1796.8,400.4 1800.1,399.1 1803.5,398.0 1807.0,397.0 1809.8,396.3 1812.9,395.7 1816.2,395.1 1819.6,394.5 1823.1,394.0 1826.7,393.4 1830.3,392.9 1833.9,392.5 1837.3,392.0 1840.6,391.6 1843.7,391.2 1846.6,390.9 1849.1,390.5 1851.2,390.3 1853.0,390.0" fill="none" stroke="#ff00ff" stroke-width="6" stroke-linejoin="round" stroke-linecap="round" />
<polyline points="49.0,412.0 50.6,411.8 52.5,411.6 54.6,411.3 56.8,411.1 59.3,410.8 61.9,410.5 64.6,410.2 67.5,409.9 70.6,409.5 73.7,409.2 77.0,408.8 80.3,408.4 83.8,408.1 87.2,407.7 90.8,407.2 94.3,406.8 97.9,406.4 101.5,406.0 105.0,405.5 108.6,405.0 112.1,404.6 115.6,404.1 119.0,403.6 122.3,403.1 125.6,402.6 128.7,402.1 131.7,401.6 134.6,401.1 137.4,400.5 140.0,400.0 143.7,399.2 147.4,398.3 151.0,397.4 154.5,396.4 157.9,395.4 161.2,394.4 164.5,393.3 167.7,392.2 170.8,391.2 173.8,390.1 176.8,389.0 179.6,387.9 182.5,386.8 185.2,385.7 187.8,384.7 190.4,383.7 192.9,382.7 195.4,381.8 197.7,380.9 200.0,380.0 204.2,378.3 208.0,376.6 211.3,374.9 214.3,373.2 217.1,371.6 219.7,370.2 222.2,369.0 224.7,368.0 227.3,367.3 230.0,367.0 233.0,367.1 235.6,367.6 238.0,368.4 240.4,369.5 242.9,370.9 245.7,372.4 248.8,373.9 252.6,375.5 257.0,377.0 259.3,377.7 261.7,378.4 264.3,379.2 267.0,380.1 269.8,381.0 272.7,381.9 275.7,382.8 278.8,383.7 282.0,384.7 285.2,385.6 288.4,386.6 291.7,387.5 295.0,388.3 298.3,389.2 301.5,390.0 304.7,390.7 307.9,391.4 311.0,392.0 314.1,392.6 317.0,393.0 320.2,393.4 323.4,393.7 326.6,394.0 329.8,394.2 333.0,394.3 336.2,394.4 339.3,394.4 342.5,394.4 345.6,394.3 348.7,394.2 351.8,394.1 354.9,394.0 358.0,393.8 361.0,393.6 364.1,393.5 367.1,393.3 370.0,393.1 373.0,393.0 376.3,392.8 379.6,392.5 383.0,392.2 386.3,391.8 389.6,391.3 392.9,390.9 396.2,390.4 399.4,389.9 402.6,389.5 405.7,389.1 408.8,388.7 411.8,388.4 414.7,388.1 417.6,388.0 420.3,387.9 423.0,388.0 426.6,388.2 429.9,388.6 433.0,389.1 435.9,389.7 438.6,390.4 441.4,391.2 444.1,392.1 447.0,393.2 450.1,394.3 453.4,395.6 457.0,397.0 459.7,398.1 462.5,399.2 465.4,400.5 468.4,401.9 471.4,403.4 474.6,404.9 477.8,406.4 481.0,408.0 484.3,409.6 487.5,411.2 490.8,412.8 494.1,414.3 497.4,415.9 500.6,417.3 503.8,418.7 507.0,420.0 510.1,421.2 513.2,422.4 516.4,423.6 519.5,424.7 522.6,425.8 525.8,426.9 528.9,427.9 532.0,428.9 535.1,430.0 538.2,431.0 541.4,432.0 544.5,433.0 547.6,434.0 550.8,435.0 553.9,436.0 557.0,437.0 560.1,438.0 563.1,438.9 566.0,439.8 569.0,440.6 571.9,441.4 574.7,442.2 577.6,443.0 580.6,443.9 583.5,444.7 586.6,445.7 589.7,446.6 592.9,447.7 596.2,448.8 599.6,450.1 603.2,451.5 607.0,453.0 609.6,454.1 612.4,455.3 615.2,456.6 618.1,458.0 621.1,459.5 624.2,461.0 627.3,462.6 630.5,464.2 633.7,465.9 637.0,467.6 640.2,469.2 643.5,470.9 646.8,472.6 650.0,474.3 653.3,475.9 656.5,477.6 659.7,479.1 662.8,480.6 665.9,482.1 668.9,483.5 671.8,484.7 674.6,485.9 677.4,487.0 680.0,488.0 683.7,489.2 687.3,490.1 690.6,490.8 693.8,491.2 696.9,491.5 699.9,491.7 702.8,491.7 705.6,491.8 708.5,491.9 711.3,492.1 714.2,492.3 717.1,492.8 720.1,493.4 723.3,494.3 726.6,495.5 730.0,497.0 732.7,498.4 735.5,500.1 738.4,502.0 741.3,504.0 744.3,506.2 747.3,508.5 750.4,511.0 753.5,513.5 756.6,516.1 759.7,518.7 762.8,521.3 765.9,523.9 769.1,526.5 772.2,529.0 775.3,531.5 778.3,533.8 781.4,536.0 784.4,538.0 787.3,539.9 790.2,541.6 793.0,543.0 796.2,544.4 799.3,545.6 802.4,546.7 805.4,547.6 808.3,548.3 811.2,548.9 814.1,549.4 817.0,549.8 819.8,550.1 822.7,550.3 825.5,550.5 828.4,550.7 831.4,550.8 834.4,551.0 837.4,551.2 840.5,551.4 843.7,551.7 847.0,552.0 849.8,552.3 852.5,552.6 855.4,552.8 858.3,553.0 861.2,553.2 864.1,553.4 867.1,553.6 870.1,553.8 873.1,553.9 876.1,554.1 879.2,554.2 882.3,554.4 885.3,554.6 888.4,554.8 891.5,555.0 894.6,555.2 897.7,555.4 900.8,555.7 903.9,555.9 906.9,556.3 910.0,556.6 913.0,557.0 916.0,557.4 919.1,557.9 922.1,558.4 925.1,559.0 928.2,559.5 931.2,560.1 934.2,560.8 937.3,561.4 940.3,562.0 943.4,562.7 946.4,563.4 949.5,564.0 952.5,564.7 955.6,565.4 958.6,566.0 961.7,566.7 964.8,567.3 967.8,567.9 970.9,568.5 973.9,569.0 977.0,569.5 980.0,570.0 983.0,570.4 986.1,570.8 989.1,571.2 992.2,571.6 995.2,571.9 998.3,572.2 1001.4,572.5 1004.4,572.7 1007.5,573.0 1010.5,573.2 1013.6,573.5 1016.6,573.8 1019.7,574.0 1022.7,574.3 1025.8,574.5 1028.8,574.8 1031.8,575.1 1034.9,575.4 1037.9,575.8 1040.9,576.2 1044.0,576.6 1047.0,577.0 1050.0,577.5 1053.0,578.0 1056.0,578.5 1059.0,579.0 1062.0,579.6 1065.0,580.1 1068.0,580.7 1071.0,581.3 1074.0,581.9 1077.0,582.6 1080.0,583.2 1083.0,583.8 1086.0,584.5 1089.0,585.1 1092.0,585.7 1095.0,586.4 1098.0,587.0 1101.0,587.6 1104.0,588.2 1107.0,588.8 1110.0,589.4 1113.0,590.0 1116.0,590.6 1119.1,591.2 1122.2,591.8 1125.4,592.4 1128.5,593.0 1131.7,593.6 1134.8,594.2 1138.0,594.8 1141.2,595.4 1144.3,596.0 1147.5,596.6 1150.6,597.2 1153.8,597.8 1156.8,598.3 1159.9,598.9 1162.9,599.4 1165.9,599.9 1168.8,600.4 1171.7,600.8 1174.5,601.3 1177.3,601.6 1180.0,602.0 1183.6,602.5 1187.2,602.9 1190.7,603.3 1194.1,603.7 1197.5,604.0 1200.7,604.4 1204.0,604.6 1207.1,604.9 1210.2,605.1 1213.2,605.2 1216.2,605.3 1219.1,605.4 1221.9,605.4 1224.7,605.3 1227.4,605.2 1230.0,605.0 1233.5,604.5 1236.7,603.8 1239.6,602.9 1242.2,601.8 1244.8,600.7 1247.3,599.5 1249.9,598.3 1252.7,597.2 1255.8,596.3 1259.2,595.5 1263.0,595.0 1265.4,594.8 1268.0,594.7 1270.7,594.7 1273.5,594.7 1276.4,594.7 1279.4,594.8 1282.4,594.9 1285.5,595.1 1288.7,595.3 1291.8,595.5 1295.1,595.7 1298.3,595.9 1301.5,596.1 1304.7,596.3 1307.8,596.5 1311.0,596.7 1314.0,596.8 1317.1,596.9 1320.0,597.0 1323.1,597.1 1325.9,597.1 1328.6,597.1 1331.0,597.1 1333.4,597.1 1335.7,597.1 1338.1,597.1 1340.5,597.1 1343.0,597.1 1345.6,597.0 1348.5,597.0 1351.6,597.0 1355.0,597.0 1358.9,597.0 1363.1,597.0 1367.8,597.0 1373.0,597.0 1375.2,597.0 1377.5,597.0 1379.9,597.0 1382.4,597.1 1385.0,597.1 1387.7,597.1 1390.5,597.1 1393.4,597.1 1396.3,597.2 1399.3,597.2 1402.4,597.2 1405.5,597.3 1408.7,597.3 1412.0,597.3 1415.3,597.3 1418.6,597.4 1422.0,597.4 1425.4,597.4 1428.8,597.5 1432.3,597.5 1435.7,597.5 1439.2,597.6 1442.7,597.6 1446.1,597.6 1449.6,597.7 1453.0,597.7 1456.5,597.7 1459.9,597.7 1463.3,597.8 1466.6,597.8 1469.9,597.8 1473.2,597.8 1476.4,597.9 1479.5,597.9 1482.6,597.9 1485.7,597.9 1488.6,597.9 1491.5,598.0 1494.3,598.0 1497.1,598.0 1499.7,598.0 1502.2,598.0 1504.7,598.0 1507.0,598.0 1511.4,598.0 1515.6,598.0 1519.5,597.9 1523.1,597.9 1526.6,597.8 1529.9,597.8 1533.0,597.7 1536.0,597.6 1538.8,597.5 1541.5,597.5 1544.2,597.4 1546.8,597.3 1549.3,597.2 1551.8,597.2 1554.3,597.1 1556.8,597.0 1559.3,597.0 1561.9,597.0 1564.5,596.9 1567.2,596.9 1570.0,597.0 1573.0,597.0 1576.1,597.1 1579.2,597.1 1582.3,597.2 1585.5,597.3 1588.8,597.4 1592.0,597.5 1595.3,597.7 1598.6,597.8 1601.8,597.9 1605.1,598.1 1608.3,598.2 1611.5,598.4 1614.7,598.6 1617.8,598.7 1620.9,598.9 1623.9,599.1 1626.8,599.2 1629.6,599.4 1632.4,599.6 1635.0,599.7 1637.6,599.9 1640.0,600.0 1644.1,600.2 1647.9,600.2 1651.4,600.2 1654.6,600.2 1657.6,600.1 1660.4,600.1 1663.2,600.2 1665.9,600.4 1668.5,600.7 1671.2,601.2 1674.0,602.0 1677.0,603.0 1680.1,604.3 1683.2,605.9 1686.3,607.6 1689.4,609.6 1692.5,611.7 1695.6,613.9 1698.6,616.3 1701.6,618.6 1704.6,621.0 1707.5,623.4 1710.3,625.7 1713.0,628.0 1716.5,631.0 1719.9,634.3 1723.3,637.6 1726.5,640.9 1729.6,644.2 1732.6,647.4 1735.5,650.5 1738.3,653.4 1741.0,656.0 1744.5,659.2 1747.4,661.7 1750.0,663.8 1752.7,666.0 1756.0,668.6 1760.0,672.0 1762.4,674.1 1765.1,676.4 1768.0,678.9 1771.0,681.6 1774.2,684.3 1777.4,687.1 1780.7,690.0 1784.0,692.8 1787.2,695.5 1790.3,698.2 1793.2,700.7 1796.0,703.0 1799.5,705.9 1803.0,708.6 1806.4,711.3 1809.8,713.8 1813.0,716.3 1816.0,718.6 1818.9,720.8 1821.5,723.0 1824.0,725.0 1828.5,729.1 1831.8,732.7 1834.8,735.9 1838.0,739.0 1841.2,741.6 1844.6,744.1 1848.0,746.5 1850.9,748.6 1853.0,750.0" fill="none" stroke="#ff00ff" stroke-width="6" stroke-linejoin="round" stroke-linecap="round" />
<polygon points="55,300 70,250 80,300" fill="#ffb8f4"/>
<polygon points="113,267 128,223 134,267" fill="#ffb8f4"/>
<polygon points="196,254 205,240 209,254" fill="#ffb8f4"/>
<polygon points="334,310 352,282 362,310" fill="#ffb8f4"/>
<polygon points="397,296 410,272 418,296" fill="#ffb8f4"/>
<polygon points="687,415 700,395 707,415" fill="#ffb8f4"/>
<polygon points="805,510 825,485 835,510" fill="#ffb8f4"/>
<polygon points="840,440 862,418 875,440" fill="#ffb8f4"/>
<polygon points="1352,435 1358,413 1364,435" fill="#ffb8f4"/>
<polygon points="1413,430 1422,408 1428,430" fill="#ffb8f4"/>
<polygon points="1750,730 1757,700 1762,730" fill="#ffb8f4"/>
<polygon points="1842,760 1850,735 1853,760" fill="#ffb8f4"/>
<path d="M51.5 243.3V293.0M54.5 242.2V329.0M58.0 227.9V295.8M60.0 264.6V362.6M61.5 292.0V357.9M65.5 249.6V317.1M69.5 272.3V307.8M71.0 270.9V325.1M73.5 256.7V373.0M79.5 226.8V294.3M81.5 274.2V303.2M84.0 260.5V351.5M88.5 255.0V284.7M91.0 272.9V330.8M99.0 194.7V268.0M100.5 243.8V273.5M102.5 256.6V293.4M107.0 228.2V257.3M113.0 241.4V332.7M115.0 324.7V370.5M126.0 147.0V197.9M127.5 149.4V273.1M129.0 216.2V247.4M135.0 151.2V299.4M139.0 193.7V343.2M143.0 240.6V292.4M145.5 263.0V303.6M152.0 206.5V250.6M159.5 196.1V221.7M164.0 203.0V213.3M166.5 206.8V213.5M168.0 209.0V265.0M170.0 212.0V289.5M172.5 264.9V364.2M174.5 332.1V368.0M176.5 348.5V374.2M182.0 320.4V359.8M184.5 324.9V369.5M190.5 333.2V351.5M200.0 297.6V313.9M201.5 311.1V323.7M208.5 263.6V304.2M212.5 252.3V283.7M215.0 262.3V297.5M217.5 296.8V312.6M219.5 302.6V330.1M221.5 323.7V332.8M225.0 290.2V317.8M227.5 300.8V339.3M232.0 317.0V325.2M234.0 337.0V374.8M236.5 362.0V377.7M238.0 377.0V390.4M240.0 397.0V407.9M242.5 400.3V411.5M244.5 403.3V406.1M246.0 405.0V413.0M248.0 407.7V418.4M252.5 413.7V421.4M254.5 416.3V431.2M256.5 422.7V432.6M261.5 383.5V417.9M268.0 341.0V377.9M270.0 349.0V396.0M275.5 360.5V411.1M279.0 377.7V403.1M285.0 365.4V408.0M291.5 355.0V373.3M302.5 288.1V325.1M307.0 278.2V292.1M309.0 270.7V295.9M314.0 266.0V285.5M316.5 274.8V313.7M320.5 264.4V302.7M328.0 265.5V279.1M330.0 262.0V281.0M336.0 262.0V292.0M338.5 275.6V280.6M340.5 268.3V289.0M344.5 272.0V305.6M348.0 285.8V307.8M352.0 294.0V322.0M357.0 292.0V309.0M359.0 290.8V315.0M361.5 292.7V322.7M365.5 293.1V310.7M367.0 301.9V329.5M371.0 309.4V337.2M375.0 301.8V326.1M377.5 311.5V332.4M381.0 305.6V327.9M389.0 284.5V307.5M390.5 289.7V298.0M392.5 297.3V311.4M396.5 297.7V317.1M399.0 302.2V313.9M405.0 266.4V292.2M406.5 269.7V294.2M408.5 289.9V305.0M410.5 289.3V323.0M412.0 310.6V338.8M415.5 298.8V352.2M422.5 282.8V316.0M425.0 293.5V322.1M427.5 297.0V345.8M429.5 328.6V352.5M434.0 324.1V376.1M444.5 345.0V360.5M446.5 353.0V372.9M451.0 371.0V440.3M453.5 434.7V461.5M455.0 450.5V468.0M456.5 448.9V468.4M462.5 402.7V428.9M469.0 411.3V429.1M474.5 402.8V419.8M478.0 409.4V422.5M480.5 419.6V448.0M482.5 427.9V451.3M484.5 439.9V447.1M486.5 444.4V450.7M488.5 452.6V456.3M490.5 460.8V469.1M492.5 466.2V477.0M494.5 470.2V495.1M496.5 491.0V501.4M498.5 493.0V505.5M503.0 480.8V489.6M515.0 432.3V456.3M520.5 434.8V442.5M528.0 415.1V423.6M529.5 411.1V431.6M534.0 427.0V443.7M536.5 437.1V450.3M538.0 439.9V452.8M539.5 435.7V457.6M543.5 394.6V408.3M546.0 400.2V430.7M552.0 422.3V442.4M558.0 418.6V433.2M561.0 418.8V452.2M565.0 433.1V471.9M570.5 427.7V447.9M572.5 441.1V468.3M574.5 453.8V481.5M576.5 446.7V483.0M578.5 478.9V483.0M584.5 451.6V465.6M587.0 464.6V481.5M595.5 440.0V448.4M597.5 452.0V471.3M600.0 467.0V476.9M601.5 477.7V482.2M603.0 488.4V496.4M605.0 502.7V509.4M607.5 517.8V526.0M610.0 522.0V529.1M611.5 524.5V527.6M613.0 527.0V536.2M615.0 530.3V549.5M619.0 521.2V538.0M625.5 515.1V521.0M634.5 470.1V498.5M640.0 458.7V469.4M649.0 414.4V449.8M653.5 416.0V427.3M657.5 403.2V419.3M661.0 401.5V420.8M663.5 401.4V421.2M665.5 415.5V440.8M672.5 401.7V456.1M676.5 439.5V457.3M694.0 386.9V389.8M695.5 388.0V423.3M697.5 415.6V441.3M699.5 423.1V440.1M703.0 429.5V454.2M704.5 430.8V459.5M711.0 423.0V431.3M713.0 428.3V441.2M715.0 433.7V474.4M719.0 444.3V470.2M722.5 455.8V466.9M724.5 462.8V468.3M727.0 471.5V476.8M729.5 480.2V500.1M731.0 486.4V504.0M735.0 499.5V504.0M737.0 506.5V513.2M739.0 513.5V520.2M741.5 519.0V528.3M743.5 521.7V527.9M746.0 525.0V555.0M750.0 530.3V548.7M752.5 533.7V542.2M754.0 535.7V548.4M755.5 538.5V549.4M758.0 546.0V552.9M760.0 552.0V556.2M761.5 556.5V566.1M764.0 564.0V574.0M766.0 567.3V572.3M768.5 568.2V573.3M770.5 568.8V576.7M773.0 570.7V575.6M776.5 571.9V580.5M778.0 578.1V584.8M779.5 580.0V587.0M782.0 583.4V589.1M785.5 572.9V594.0M799.5 464.2V480.4M803.0 466.4V483.0M807.5 462.0V499.5M810.0 479.6V514.9M812.0 499.4V518.2M818.0 474.3V510.8M821.5 495.8V520.8M826.0 499.7V510.0M836.5 441.7V466.7M838.5 440.1V476.0M842.5 455.3V466.3M852.5 430.4V447.0M856.0 402.0V433.8M865.0 404.0V428.4M867.5 421.5V450.8M869.5 430.6V468.8M874.0 442.8V470.7M887.0 435.2V443.9M889.0 437.4V456.5M891.0 445.7V458.3M893.5 453.7V459.1M895.5 453.9V457.7M898.0 454.5V459.9M900.0 457.0V474.3M901.5 469.0V477.7M903.5 469.8V485.2M907.5 476.1V499.7M912.5 478.7V509.5M916.0 488.6V499.6M923.5 488.2V499.1M925.0 495.6V511.1M927.0 504.2V512.0M930.5 493.7V502.3M933.0 499.5V537.4M938.0 513.5V527.9M939.5 516.4V543.0M944.5 529.4V536.2M949.0 516.0V538.8M951.5 516.8V530.5M956.0 509.0V529.7M958.5 525.7V551.2M960.0 530.7V558.0M965.0 526.3V539.3M969.5 506.5V550.8M975.5 512.4V543.9M977.5 532.1V538.8M979.0 528.1V554.4M987.5 524.3V553.2M990.0 525.6V540.0M999.5 512.7V529.6M1003.0 491.0V520.7M1005.5 505.0V525.0M1009.5 499.0V523.0M1015.5 488.9V499.8M1017.5 489.8V511.2M1020.0 493.5V523.9M1022.0 492.0V525.3M1028.0 487.5V503.0M1030.0 496.4V512.0M1031.5 499.6V517.1M1033.0 503.6V538.4M1035.0 526.6V543.5M1036.5 535.2V546.8M1042.5 533.0V549.9M1046.5 534.4V550.4M1049.0 533.9V553.1M1055.0 537.7V557.6M1056.5 548.8V560.4M1059.0 555.3V561.0M1067.0 520.9V549.2M1072.5 529.1V556.6M1074.0 540.4V558.1M1078.0 547.8V555.1M1079.5 548.8V563.0M1083.0 548.3V563.0M1085.0 552.2V560.1M1098.5 517.0V529.9M1100.5 521.6V530.3M1102.0 520.9V534.5M1104.0 526.2V538.8M1109.5 524.4V544.0M1112.0 532.9V555.8M1116.0 527.9V561.2M1117.5 550.8V558.7M1122.0 553.4V562.0M1131.5 534.4V549.1M1133.5 536.5V554.9M1135.5 549.8V561.5M1142.5 523.9V563.9M1144.5 557.6V568.2M1153.5 533.7V547.6M1155.0 529.8V547.4M1161.0 529.1V551.9M1162.5 538.5V565.8M1169.0 536.0V539.5M1170.5 537.5V545.2M1172.5 539.5V545.4M1174.5 541.5V552.5M1179.0 546.5V554.4M1181.0 547.5V554.1M1182.5 548.2V564.3M1186.5 554.1V575.0M1190.5 567.0V575.3M1194.0 571.2V590.1M1198.0 569.9V575.7M1202.5 569.0V573.7M1204.5 571.1V579.1M1207.0 572.6V578.8M1210.5 567.1V580.0M1212.5 566.6V578.1M1218.5 567.0V577.4M1220.0 574.6V577.7M1221.5 573.8V583.5M1223.5 569.7V585.3M1225.5 574.1V587.5M1231.5 577.8V579.5M1239.5 544.9V570.6M1248.0 555.5V565.0M1263.5 503.6V527.8M1267.5 509.9V521.4M1269.5 512.2V525.4M1276.0 508.8V520.8M1278.0 508.0V521.4M1280.0 509.5V527.5M1284.0 512.5V536.4M1286.5 523.9V534.5M1290.5 521.4V556.7M1297.5 536.8V546.6M1299.0 538.8V551.5M1300.5 537.6V556.7M1304.0 533.3V540.1M1306.5 537.3V549.8M1308.5 541.7V545.6M1324.0 516.2V521.9M1330.0 495.4V509.9M1332.5 485.5V523.8M1338.5 476.2V505.5M1341.0 475.4V499.0M1343.0 462.7V491.0M1347.0 461.3V478.7M1357.0 445.1V459.0M1367.0 418.2V433.9M1368.5 413.8V438.8M1370.0 426.1V440.3M1372.0 425.9V457.1M1373.5 439.9V466.5M1378.0 448.8V467.2M1384.0 449.9V466.0M1386.0 449.4V465.2M1388.0 426.3V468.9M1393.0 450.1V466.5M1399.0 434.4V448.0M1401.0 445.5V452.7M1403.5 450.1V461.2M1415.0 436.5V452.6M1422.0 396.9V428.9M1428.5 396.0V434.1M1430.5 426.1V441.7M1435.5 418.8V448.4M1439.5 440.5V472.5M1445.5 423.5V444.3M1447.0 442.6V475.8M1449.5 445.0V485.6M1451.5 464.6V484.6M1454.0 474.2V501.0M1461.5 451.7V469.9M1463.5 462.3V484.7M1465.0 470.3V478.1M1467.5 483.7V488.0M1469.5 494.3V507.3M1471.5 501.5V508.1M1473.5 507.5V517.0M1476.0 515.0V527.5M1478.0 521.0V527.6M1479.5 525.5V543.1M1482.0 532.8V553.1M1484.0 537.3V551.4M1489.0 534.5V554.8M1494.5 527.0V540.2M1498.0 528.1V540.0M1504.5 527.5V531.3M1506.0 519.8V551.9M1508.0 534.0V568.7M1510.0 537.5V555.9M1523.0 481.9V489.4M1525.5 482.7V502.0M1527.5 494.1V518.3M1529.0 501.8V512.8M1531.0 498.9V538.4M1533.5 501.3V548.8M1539.5 466.5V493.8M1541.0 470.0V481.5M1543.0 476.0V537.9M1545.0 482.0V518.6M1548.5 492.5V500.7M1550.0 497.0V528.1M1551.5 504.2V532.3M1554.0 518.2V539.5M1558.5 522.5V532.5M1563.0 529.6V543.5M1565.0 538.8V548.2M1566.5 534.5V553.2M1568.0 545.0V566.3M1572.0 540.5V561.4M1577.0 541.9V564.6M1579.5 552.7V556.5M1584.5 554.9V559.6M1586.0 549.8V563.6M1588.5 555.1V560.9M1590.0 556.8V569.5M1591.5 562.0V575.4M1593.0 566.1V579.9M1602.0 564.2V568.6M1604.5 566.0V580.5M1607.5 572.8V579.6M1609.5 577.0V584.3M1613.0 579.5V595.0M1614.5 584.9V594.9M1621.0 573.5V581.1M1623.5 573.0V580.2M1625.5 577.1V590.8M1627.5 589.9V592.7M1629.5 590.7V594.5M1633.5 581.1V595.0M1642.0 575.2V586.4M1649.5 562.7V579.1M1652.0 575.8V587.1M1654.5 569.3V593.1M1660.5 564.0V571.0M1664.0 551.4V565.6M1665.5 542.4V567.5M1667.5 563.3V579.5M1669.5 570.6V595.0M1671.5 582.9V591.6M1677.5 572.0V589.2M1679.0 580.2V611.5M1681.0 599.5V617.1M1683.0 611.0V645.5M1687.0 616.2V660.9M1689.0 652.3V676.5M1691.5 665.5V678.4M1696.0 669.3V747.0M1697.5 731.9V747.6M1705.5 719.7V729.3M1707.5 733.5V737.1M1710.0 747.0V751.4M1712.5 759.5V765.4M1714.5 769.5V777.5M1716.5 777.8V786.5M1720.5 784.5V790.7M1722.0 787.0V798.8M1726.5 777.2V794.0M1728.5 767.9V801.3M1740.5 737.0V755.0M1742.5 742.4V758.8M1755.5 732.3V752.5M1763.5 738.9V758.5M1765.5 751.4V755.3M1768.0 767.0V774.0M1770.0 767.0V778.9M1771.5 775.2V779.7M1773.5 774.8V780.2M1775.0 777.0V781.3M1779.5 773.7V782.3M1781.5 777.7V788.9M1783.5 785.6V798.7M1789.0 791.0V800.1M1792.0 788.2V798.6M1795.5 790.9V806.1M1798.0 801.3V816.9M1800.0 814.5V833.0M1802.0 827.1V837.4M1810.0 817.0V820.6M1811.5 818.8V827.5M1813.5 814.9V836.5M1816.0 818.0V841.5M1819.5 802.7V831.1M1839.0 745.7V771.5M1846.5 713.8V728.6M1849.0 722.5V732.4M1851.5 720.8V743.7M1712 720V800M1719 760V824M1725 750V810M1757 700V750M1803 790V845M1809 795V852M1815 770V840M1349 380V430M1352 385V450M1358 400V455M1366 410V470M1490 540V587" stroke="#1a5ae8" stroke-width="1.1" fill="none"/>
<path d="M49.5 245.4V301.2M53.0 263.1V329.2M56.0 250.0V354.9M63.5 246.2V357.3M67.5 257.3V307.5M75.5 287.1V373.0M78.0 205.0V321.2M86.0 216.9V316.6M93.0 259.4V351.1M94.5 207.0V322.5M97.0 207.2V269.3M104.5 220.3V353.3M109.0 217.9V269.5M111.0 242.6V251.6M117.0 286.2V364.1M119.0 282.2V336.9M121.5 163.6V309.4M124.0 149.5V196.1M131.0 207.9V252.2M133.5 148.4V265.3M137.0 205.3V285.4M141.0 221.4V321.3M148.0 236.1V283.8M150.0 239.7V245.6M153.5 207.9V247.1M155.0 214.3V264.4M157.5 192.4V244.9M162.0 202.3V245.1M179.0 357.5V380.5M180.5 315.4V366.3M187.0 326.3V362.0M188.5 327.0V357.5M192.0 342.2V347.0M194.5 331.3V339.5M196.0 327.7V335.0M198.0 295.1V329.0M204.0 309.2V324.8M206.5 266.0V318.2M210.5 264.0V289.8M223.0 299.4V331.2M229.5 305.8V354.3M250.5 411.0V423.5M259.0 403.0V428.6M264.0 370.0V418.6M266.0 351.0V385.0M271.5 352.4V390.3M274.0 360.6V380.6M277.5 359.7V409.1M280.5 389.4V403.5M282.5 372.7V410.5M287.0 354.3V406.0M289.5 359.9V403.5M293.5 321.8V374.2M296.0 341.1V366.0M298.5 316.6V345.7M300.5 291.3V339.3M305.0 282.9V316.2M311.5 266.6V294.4M319.0 264.8V305.6M322.0 264.0V306.1M324.0 263.5V280.7M326.0 263.0V273.9M332.0 271.8V275.1M334.0 266.6V282.0M342.5 277.4V296.7M346.0 282.0V304.3M350.5 286.4V316.2M353.5 295.8V325.5M355.5 290.9V307.0M363.0 294.3V315.1M369.0 301.6V337.1M372.5 292.6V336.1M379.5 304.7V330.7M383.5 323.7V327.9M385.0 323.4V326.8M386.5 279.0V325.6M394.5 282.3V311.1M401.0 283.8V311.3M403.0 262.0V294.1M413.5 293.2V334.1M417.5 313.4V328.9M419.0 292.7V315.5M421.0 284.1V310.9M432.0 338.0V368.0M436.5 367.7V388.3M438.5 336.8V376.6M441.0 345.9V362.1M443.0 342.1V351.2M449.0 366.0V377.0M458.5 452.5V468.9M460.5 402.3V469.4M464.5 409.8V437.3M466.5 399.8V427.4M471.0 407.5V422.5M473.0 397.4V427.4M476.0 401.1V413.5M501.0 471.6V498.0M504.5 470.8V485.7M506.5 470.4V479.0M508.5 457.3V473.7M511.0 462.9V467.0M513.5 438.1V460.3M516.5 437.9V452.3M518.5 418.2V447.0M522.5 429.5V440.5M525.0 434.2V436.5M526.5 411.3V436.5M531.0 428.6V432.3M532.5 424.6V439.6M541.5 397.2V463.7M548.5 414.4V433.0M550.5 416.1V426.1M554.5 420.8V443.7M556.5 424.5V436.9M559.5 418.0V448.7M563.0 421.2V459.5M566.5 446.4V470.5M568.5 419.8V459.9M580.5 469.3V483.0M582.0 445.5V483.0M589.5 459.6V481.6M591.5 447.5V479.8M593.5 439.3V468.2M617.5 523.0V549.1M621.0 520.0V539.0M623.5 515.3V529.0M627.5 508.6V513.0M629.5 481.9V505.0M632.0 476.7V489.4M636.5 470.7V490.2M638.0 463.5V476.6M642.5 447.8V485.3M644.0 425.4V460.9M646.0 435.4V453.2M647.5 424.3V443.1M651.0 424.0V460.1M656.0 411.1V439.6M659.0 404.7V434.4M668.0 413.6V460.2M670.5 415.9V427.6M675.0 436.9V448.9M679.0 439.6V455.0M680.5 436.7V449.3M682.5 436.8V448.0M684.0 411.8V445.0M686.0 416.8V423.2M687.5 403.8V419.7M690.0 384.9V404.6M692.0 386.6V396.5M701.0 421.0V442.2M707.0 432.8V448.9M709.0 421.6V447.1M717.0 439.0V463.4M720.5 448.8V470.5M733.0 492.5V500.3M748.0 527.7V548.6M775.0 571.0V576.2M784.0 579.4V591.4M787.5 564.0V593.8M790.0 517.0V569.9M791.5 513.8V544.7M793.5 478.5V522.3M795.5 469.6V492.8M797.5 463.0V474.2M801.0 462.0V489.6M805.0 462.0V485.1M814.0 481.2V522.7M816.0 482.1V511.7M819.5 493.1V503.0M823.5 492.4V517.5M827.5 499.1V505.5M829.5 481.5V499.5M831.5 486.2V493.5M833.0 470.2V489.0M834.5 434.2V481.9M840.5 447.7V470.9M844.5 447.1V464.0M847.0 433.6V459.0M849.0 432.9V451.5M850.5 429.2V453.8M854.0 407.8V444.2M858.5 421.1V433.0M861.0 403.8V429.5M863.0 403.2V418.5M871.5 444.0V483.0M876.0 462.5V482.4M878.0 458.1V470.3M880.0 434.0V472.6M882.5 436.4V451.1M884.5 439.2V446.3M906.0 477.1V492.7M910.0 477.0V498.9M914.5 482.2V499.5M918.0 483.1V504.4M920.0 487.5V498.1M922.0 487.5V496.2M929.0 498.3V516.8M935.0 515.2V543.0M936.5 511.2V538.6M942.0 515.5V541.2M947.0 512.5V537.8M954.0 506.5V539.3M962.5 528.8V558.9M967.5 528.7V546.5M971.5 525.1V542.1M973.0 512.8V543.1M981.0 543.3V563.0M983.5 537.2V548.2M985.5 522.5V548.7M991.5 527.9V540.1M993.5 527.5V539.7M995.0 512.6V532.1M997.5 514.0V523.3M1001.0 500.0V522.4M1007.0 483.8V526.7M1011.5 507.4V522.9M1013.5 478.6V510.5M1024.0 484.6V514.3M1026.0 476.6V504.1M1038.5 537.1V547.5M1040.5 535.6V547.6M1044.5 533.1V551.4M1051.5 522.7V553.1M1053.5 522.7V550.9M1060.5 528.4V563.0M1062.5 533.9V538.9M1065.0 520.3V541.0M1069.0 541.9V556.3M1071.0 529.8V551.5M1076.0 546.3V554.5M1081.5 551.3V563.0M1086.5 551.3V563.0M1088.5 536.2V554.4M1090.5 528.8V542.2M1092.5 532.8V539.2M1094.5 522.5V539.2M1096.5 517.0V532.4M1105.5 530.6V538.4M1107.5 526.9V537.2M1113.5 535.8V549.2M1119.5 552.7V562.6M1124.5 557.5V563.5M1126.5 552.9V564.0M1128.0 548.2V571.0M1129.5 541.2V550.0M1138.0 548.8V567.7M1140.5 531.3V555.1M1146.5 553.1V571.2M1148.5 548.8V567.8M1150.0 549.5V557.9M1152.0 533.3V551.3M1157.0 538.7V545.5M1158.5 526.2V548.6M1165.0 547.1V558.0M1167.0 534.0V555.1M1177.0 544.0V552.7M1184.5 554.6V566.0M1188.5 567.6V573.2M1192.0 570.5V578.6M1196.0 566.0V581.7M1200.5 567.4V574.4M1208.5 565.5V576.8M1215.0 570.4V578.2M1217.0 565.2V572.7M1227.5 580.8V585.5M1229.5 569.1V583.5M1234.0 568.0V579.0M1236.0 564.9V573.8M1238.0 557.2V575.0M1242.0 567.4V571.0M1243.5 557.9V569.5M1245.5 554.1V567.5M1250.5 549.9V562.6M1253.0 556.7V560.8M1255.0 551.1V559.2M1257.0 536.2V557.8M1259.5 504.6V546.8M1261.5 505.4V517.6M1265.0 504.6V525.6M1272.0 514.1V525.2M1274.0 508.7V526.5M1282.0 511.0V521.4M1288.5 519.7V537.1M1292.0 540.3V558.1M1293.5 533.5V550.8M1296.0 533.9V551.6M1302.0 534.9V561.9M1310.5 541.2V548.0M1313.0 532.6V542.4M1315.0 527.6V539.9M1317.0 524.7V535.7M1319.5 511.2V537.7M1322.0 513.9V522.0M1326.0 513.3V534.5M1328.5 489.3V518.6M1334.5 492.2V521.3M1336.5 476.2V501.7M1345.0 463.9V483.0M1349.0 456.5V475.0M1351.5 464.3V470.0M1353.5 446.0V466.0M1355.5 435.0V462.0M1359.0 436.5V455.0M1361.0 424.9V439.3M1363.0 426.6V430.5M1365.0 411.9V430.8M1376.0 449.6V461.7M1380.0 454.6V467.4M1382.0 439.5V463.0M1389.5 453.5V468.2M1391.0 455.5V463.6M1395.5 448.6V465.2M1397.0 440.3V464.5M1405.0 446.3V460.5M1407.5 449.2V459.2M1410.0 446.0V458.0M1411.5 436.3V457.2M1413.5 432.6V456.2M1417.0 422.5V454.0M1419.5 396.5V438.8M1424.5 407.0V415.5M1427.0 393.8V409.2M1433.0 420.4V435.6M1437.5 441.2V449.8M1442.0 438.9V456.5M1444.0 407.4V448.2M1455.5 470.6V505.0M1458.0 448.9V481.5M1459.5 442.8V454.8M1486.5 527.0V554.2M1491.0 543.6V546.3M1493.0 536.3V546.9M1496.5 530.3V549.9M1500.5 527.0V552.8M1502.5 528.1V534.7M1511.5 534.8V546.2M1513.5 513.9V531.8M1515.0 503.3V520.5M1517.0 497.4V505.5M1518.5 485.0V494.2M1520.5 474.6V487.0M1535.5 480.9V558.3M1537.5 464.5V488.9M1546.5 486.5V528.1M1556.0 515.4V544.1M1560.5 527.4V541.2M1570.0 540.6V557.7M1574.5 539.9V557.3M1582.0 553.9V559.7M1595.5 569.3V578.0M1597.0 569.3V577.9M1598.5 564.8V572.2M1600.0 564.7V575.3M1606.0 570.2V580.8M1611.0 574.6V592.0M1617.0 577.4V593.6M1619.0 572.6V583.0M1631.5 584.0V594.1M1635.0 586.4V594.9M1637.5 580.9V588.3M1640.0 579.4V583.5M1644.0 575.0V585.6M1645.5 574.1V583.0M1647.0 568.1V581.0M1657.0 562.2V588.3M1659.0 563.5V578.5M1662.5 551.8V572.5M1673.5 586.9V604.1M1675.5 574.3V597.9M1684.5 618.0V633.0M1693.5 666.1V679.5M1699.5 722.3V751.1M1701.5 710.1V740.6M1703.0 702.4V720.2M1718.5 782.4V787.3M1724.0 771.1V793.6M1730.0 781.1V796.3M1732.0 780.6V789.7M1734.5 774.0V781.3M1736.0 758.2V776.3M1738.0 743.2V765.0M1745.0 744.9V754.7M1747.0 739.2V751.3M1749.5 733.9V747.2M1751.5 739.0V743.8M1754.0 735.9V742.0M1757.0 732.6V752.3M1759.5 728.5V744.0M1761.5 728.9V734.6M1777.5 772.3V784.0M1785.0 789.3V798.8M1787.0 796.5V799.1M1790.5 789.2V800.1M1794.0 788.2V796.9M1804.0 819.7V832.5M1806.0 814.8V823.8M1808.0 813.9V823.4M1817.5 804.0V829.3M1821.0 811.2V828.3M1823.0 813.9V820.7M1824.5 803.3V817.2M1826.0 800.0V813.8M1828.0 795.1V809.2M1830.0 760.3V799.8M1832.5 759.4V778.7M1834.5 761.4V775.7M1837.0 744.2V779.0M1841.0 727.8V779.8M1843.0 720.5V731.5M1844.5 714.4V724.9M1853.0 723.6V743.8M130.9 241.8V341.6M162.9 288.6V306.9M65.8 299.5V370.0M77.8 172.4V234.7M83.7 208.7V231.1M139.5 262.1V315.3M106.2 206.7V249.9M187.4 270.9V326.9M221.9 297.8V307.8M213.3 266.1V313.4M62.6 270.7V353.0M70.7 209.4V237.5M193.0 245.8V281.8M70.5 237.3V274.4M67.6 328.3V365.3M188.6 262.7V289.8M116.4 236.2V335.3M152.9 291.0V317.0M213.0 292.8V311.9M208.3 275.3V300.5M95.8 301.8V369.5M81.1 285.3V310.8M150.2 289.6V339.8M214.6 245.8V256.1M129.7 155.7V192.4M54.9 266.2V324.7M207.9 258.8V290.0M177.5 338.4V369.5M130.6 193.1V232.7M226.3 305.5V319.1M105.1 296.6V318.2M131.4 151.7V242.9M74.9 177.5V247.8M172.7 241.8V283.2M51.4 245.6V322.7M219.5 266.7V302.3M203.5 255.5V267.7M148.6 278.8V326.8M195.1 235.4V279.3M109.8 296.1V327.3M219.7 269.0V316.5M121.6 289.2V357.1M173.9 228.4V273.8M221.7 303.8V324.5M216.0 240.1V280.1M84.4 206.4V281.3M71.6 251.7V291.7M145.0 232.7V275.9M1716 740V815M1722 770V822M1750 690V745M1754 692V760M1806 800V850M1812 780V848M1347 375V440M1355 395V440M1362 405V450M1520 420V470" stroke="#ff0000" stroke-width="1.1" fill="none"/>
<path d="M51.5 259.8V283.6M54.5 267.4V302.9M58.0 263.1V287.6M60.0 286.6V327.5M61.5 326.5V358.1M65.5 259.8V287.0M69.5 280.2V308.3M71.0 307.3V309.3M73.5 308.3V362.3M79.5 236.4V275.7M81.5 274.7V276.3M84.0 275.3V314.0M88.5 259.2V283.3M91.0 282.3V311.1M99.0 223.9V244.8M100.5 243.8V270.3M102.5 269.3V277.3M107.0 239.3V251.7M113.0 249.0V331.8M115.0 330.8V364.1M126.0 152.5V181.1M127.5 180.1V230.2M129.0 229.2V243.6M135.0 154.1V271.7M139.0 229.0V317.6M143.0 242.5V271.4M145.5 270.4V276.3M152.0 240.3V245.9M159.5 195.4V216.0M164.0 203.0V207.0M166.5 206.0V210.8M168.0 209.8V240.7M170.0 239.7V281.3M172.5 280.3V351.4M174.5 350.4V361.9M176.5 360.9V372.0M182.0 328.5V346.6M184.5 345.6V367.5M190.5 342.1V349.5M200.0 307.1V313.8M201.5 312.8V321.7M208.5 273.8V287.3M212.5 270.9V278.0M215.0 277.0V297.9M217.5 296.9V312.4M219.5 311.4V329.9M221.5 328.9V330.8M225.0 302.1V303.6M227.5 302.6V324.6M232.0 312.5V322.1M234.0 321.1V352.9M236.5 351.9V366.0M238.0 365.0V381.0M240.0 380.0V401.0M242.5 400.0V404.3M244.5 403.3V407.0M246.0 406.0V409.0M248.0 408.0V419.2M252.5 414.0V419.0M254.5 418.0V423.9M256.5 422.9V428.6M261.5 411.9V417.4M268.0 355.6V362.8M270.0 361.8V385.4M275.5 367.4V401.0M279.0 387.2V399.5M285.0 382.0V406.0M291.5 365.0V368.4M302.5 300.2V306.2M307.0 283.2V284.8M309.0 283.8V287.0M314.0 271.9V275.8M316.5 274.8V301.5M320.5 267.8V302.3M328.0 266.0V271.1M330.0 270.1V274.1M336.0 271.4V277.5M338.5 276.5V280.9M340.5 279.9V281.7M344.5 280.4V297.9M348.0 287.7V307.3M352.0 297.4V309.1M357.0 292.5V300.9M359.0 299.9V307.0M361.5 306.0V308.5M365.5 299.7V308.2M367.0 307.2V317.5M371.0 309.8V333.0M375.0 304.4V317.3M377.5 316.3V321.8M381.0 309.6V325.7M389.0 290.5V297.0M390.5 296.0V298.4M392.5 297.4V306.5M396.5 299.4V303.4M399.0 302.4V308.2M405.0 267.4V278.1M406.5 277.1V293.5M408.5 292.5V306.0M410.5 305.0V315.1M412.0 314.1V328.0M415.5 303.2V321.0M422.5 292.3V301.8M425.0 300.8V307.2M427.5 306.2V337.9M429.5 336.9V348.0M434.0 343.7V373.3M444.5 345.5V349.0M446.5 348.0V367.8M451.0 366.0V439.7M453.5 438.7V459.5M455.0 458.5V466.0M456.5 465.0V466.4M462.5 404.1V424.6M469.0 412.2V418.2M474.5 405.9V410.3M478.0 409.0V413.4M480.5 412.4V434.2M482.5 433.2V441.0M484.5 440.0V442.3M486.5 441.3V448.4M488.5 447.4V456.6M490.5 455.6V464.8M492.5 463.8V472.3M494.5 471.3V493.6M496.5 492.6V494.6M498.5 493.6V497.7M503.0 482.6V484.3M515.0 445.3V454.3M520.5 436.0V440.5M528.0 416.0V422.9M529.5 421.9V431.5M534.0 427.5V441.7M536.5 440.7V445.8M538.0 444.8V448.5M539.5 447.5V456.3M543.5 399.1V405.6M546.0 404.6V431.2M552.0 422.7V441.6M558.0 431.1V433.5M561.0 424.6V445.7M565.0 442.2V463.5M570.5 435.5V448.4M572.5 447.4V457.3M574.5 456.3V478.3M576.5 477.3V481.0M578.5 480.0V481.0M584.5 465.5V466.6M587.0 465.6V475.2M595.5 446.1V448.9M597.5 447.9V467.3M600.0 466.3V471.0M601.5 470.0V481.7M603.0 480.7V492.4M605.0 491.4V506.7M607.5 505.7V521.8M610.0 520.8V526.0M611.5 525.0V528.5M613.0 527.5V533.8M615.0 532.8V538.5M619.0 529.9V534.6M625.5 516.6V519.0M634.5 479.3V487.7M640.0 463.5V469.0M649.0 426.9V442.3M653.5 424.2V428.2M657.5 418.4V420.1M661.0 405.5V414.6M663.5 413.6V420.2M665.5 419.2V434.6M672.5 420.1V447.5M676.5 444.3V458.0M694.0 387.9V390.3M695.5 389.3V417.3M697.5 416.3V428.1M699.5 427.1V439.4M703.0 431.1V436.8M704.5 435.8V448.3M711.0 424.3V427.0M713.0 426.0V432.3M715.0 431.3V452.2M719.0 442.0V455.7M722.5 451.8V459.8M724.5 458.8V466.8M727.0 465.8V476.7M729.5 475.7V495.4M731.0 494.4V500.5M735.0 495.5V503.5M737.0 502.5V511.7M739.0 510.7V517.5M741.5 516.5V523.0M743.5 522.0V525.7M746.0 524.7V543.5M750.0 530.7V534.3M752.5 533.3V538.9M754.0 537.9V539.7M755.5 538.7V542.5M758.0 541.5V550.0M760.0 549.0V557.0M761.5 556.0V564.8M764.0 563.8V569.5M766.0 568.5V571.3M768.5 570.3V572.2M770.5 571.2V573.8M773.0 572.8V574.4M776.5 573.3V580.5M778.0 579.5V584.1M779.5 583.1V586.4M782.0 585.4V587.2M785.5 582.4V594.1M799.5 469.3V479.7M803.0 471.5V479.2M807.5 473.6V495.6M810.0 494.6V506.3M812.0 505.3V514.2M818.0 483.5V501.8M821.5 497.8V517.4M826.0 501.0V508.0M836.5 448.4V457.5M838.5 456.5V466.0M842.5 458.7V463.4M852.5 433.1V444.2M856.0 418.6V433.6M865.0 405.8V424.3M867.5 423.3V439.6M869.5 438.6V469.4M874.0 459.6V470.0M887.0 440.8V442.2M889.0 441.2V451.7M891.0 450.7V455.2M893.5 454.2V455.7M895.5 454.7V456.4M898.0 455.4V457.0M900.0 456.0V470.5M901.5 469.5V476.8M903.5 475.8V486.1M907.5 480.3V497.7M912.5 486.1V496.8M916.0 491.5V500.4M923.5 488.7V500.1M925.0 499.1V510.4M927.0 509.4V511.2M930.5 501.5V502.8M933.0 501.8V537.0M938.0 517.4V525.2M939.5 524.2V531.5M944.5 529.7V533.0M949.0 518.4V524.7M951.5 523.7V525.4M956.0 516.0V529.2M958.5 528.2V545.3M960.0 544.3V556.0M965.0 531.8V538.8M969.5 528.8V543.1M975.5 514.5V533.6M977.5 532.6V535.3M979.0 534.3V555.1M987.5 525.1V529.0M990.0 528.0V538.4M999.5 514.2V521.4M1003.0 500.9V510.7M1005.5 509.7V521.8M1009.5 502.0V518.1M1015.5 492.3V495.2M1017.5 494.2V501.8M1020.0 500.8V503.3M1022.0 502.3V514.9M1028.0 492.5V503.1M1030.0 502.1V508.2M1031.5 507.2V515.5M1033.0 514.5V533.0M1035.0 532.0V541.1M1036.5 540.1V544.8M1042.5 539.1V547.9M1046.5 538.7V542.2M1049.0 541.2V551.5M1055.0 539.4V557.2M1056.5 556.2V558.4M1059.0 557.4V558.5M1067.0 523.6V549.4M1072.5 530.9V547.7M1074.0 546.7V553.7M1078.0 548.6V554.1M1079.5 553.1V561.0M1083.0 552.6V558.6M1085.0 557.6V561.0M1098.5 522.8V524.3M1100.5 523.3V525.6M1102.0 524.6V533.2M1104.0 532.2V537.3M1109.5 528.6V534.4M1112.0 533.4V543.8M1116.0 542.6V557.6M1117.5 556.6V558.6M1122.0 553.8V562.4M1131.5 543.6V546.6M1133.5 545.6V552.1M1135.5 551.1V559.5M1142.5 531.6V562.2M1144.5 561.2V568.2M1153.5 536.4V540.5M1155.0 539.5V546.3M1161.0 531.5V547.8M1162.5 546.8V558.8M1169.0 537.0V540.0M1170.5 539.0V541.5M1172.5 540.5V543.5M1174.5 542.5V548.9M1179.0 547.0V550.6M1181.0 549.6V551.5M1182.5 550.5V562.2M1186.5 560.7V571.7M1190.5 569.6V576.0M1194.0 573.3V581.8M1198.0 572.8V574.4M1202.5 569.6V574.4M1204.5 573.4V575.0M1207.0 574.0V575.8M1210.5 567.2V571.8M1212.5 570.8V573.4M1218.5 568.2V576.7M1220.0 575.7V577.8M1221.5 576.8V582.3M1223.5 581.3V582.9M1225.5 581.9V585.5M1231.5 578.3V579.5M1239.5 560.4V571.5M1248.0 560.3V562.5M1263.5 507.1V517.6M1267.5 512.2V518.0M1269.5 517.0V523.4M1276.0 512.9V517.5M1278.0 516.5V519.0M1280.0 518.0V521.2M1284.0 514.0V528.3M1286.5 527.3V532.8M1290.5 524.6V547.0M1297.5 537.2V541.9M1299.0 540.9V547.8M1300.5 546.8V552.9M1304.0 535.1V540.9M1306.5 539.9V543.3M1308.5 542.3V546.6M1324.0 516.4V521.9M1330.0 497.8V508.0M1332.5 507.0V520.9M1338.5 477.5V480.0M1341.0 479.0V480.7M1343.0 479.7V486.2M1347.0 474.0V477.0M1357.0 452.5V453.8M1367.0 419.7V425.8M1368.5 424.8V430.0M1370.0 429.0V433.1M1372.0 432.1V450.3M1373.5 449.3V462.4M1378.0 455.8V461.9M1384.0 450.9V452.2M1386.0 451.2V452.3M1388.0 451.3V467.0M1393.0 458.4V461.8M1399.0 440.7V447.1M1401.0 446.1V453.4M1403.5 452.4V459.2M1415.0 442.2V453.5M1422.0 404.6V412.7M1428.5 401.3V429.0M1430.5 428.0V434.7M1435.5 425.5V447.7M1439.5 443.8V454.0M1445.5 427.3V445.3M1447.0 444.3V459.4M1449.5 458.4V475.5M1451.5 474.5V482.9M1454.0 481.9V499.0M1461.5 444.0V461.3M1463.5 460.3V469.2M1465.0 468.2V474.3M1467.5 473.3V487.7M1469.5 486.7V498.3M1471.5 497.3V506.4M1473.5 505.4V511.5M1476.0 510.5V519.0M1478.0 518.0V525.0M1479.5 524.0V538.9M1482.0 537.9V540.1M1484.0 539.1V548.4M1489.0 537.1V545.2M1494.5 536.4V539.9M1498.0 535.8V540.6M1504.5 530.0V531.0M1506.0 530.0V543.7M1508.0 542.7V553.3M1510.0 552.3V553.9M1523.0 484.0V489.0M1525.5 488.0V497.5M1527.5 496.5V510.9M1529.0 509.9V512.3M1531.0 511.3V532.0M1533.5 531.0V537.0M1539.5 467.5V470.5M1541.0 469.5V474.2M1543.0 473.2V513.7M1545.0 512.7V515.5M1548.5 489.5V496.5M1550.0 495.5V518.0M1551.5 517.0V527.7M1554.0 526.7V535.6M1558.5 518.0V531.8M1563.0 530.4V540.1M1565.0 539.1V548.5M1566.5 547.5V550.5M1568.0 549.5V556.7M1572.0 542.7V554.3M1577.0 548.3V556.7M1579.5 555.7V557.0M1584.5 555.0V557.0M1586.0 556.0V559.1M1588.5 558.1V560.5M1590.0 559.5V570.3M1591.5 569.3V574.4M1593.0 573.4V578.8M1602.0 565.7V567.5M1604.5 566.5V576.0M1607.5 574.4V579.4M1609.5 578.4V585.2M1613.0 580.1V590.7M1614.5 589.7V593.0M1621.0 574.5V580.4M1623.5 579.4V581.1M1625.5 580.1V591.0M1627.5 590.0V593.0M1629.5 592.0V593.0M1633.5 587.0V592.1M1642.0 580.6V586.4M1649.5 574.1V579.4M1652.0 578.4V580.1M1654.5 579.1V586.9M1660.5 566.3V569.8M1664.0 553.6V558.1M1665.5 557.1V567.1M1667.5 566.1V577.2M1669.5 576.2V586.3M1671.5 585.3V591.0M1677.5 580.5V588.6M1679.0 587.6V603.9M1681.0 602.9V616.4M1683.0 615.4V633.2M1687.0 625.9V661.5M1689.0 660.5V672.8M1691.5 671.8V675.7M1696.0 670.1V734.3M1697.5 733.3V734.9M1705.5 705.4V723.7M1707.5 722.7V737.5M1710.0 736.5V751.0M1712.5 750.0V763.5M1714.5 762.5V777.2M1716.5 776.2V785.4M1720.5 784.2V788.5M1722.0 787.5V794.2M1726.5 777.4V785.1M1728.5 784.1V799.3M1740.5 748.6V755.3M1742.5 754.3V756.8M1755.5 739.6V747.1M1763.5 730.9V745.1M1765.5 744.1V755.4M1768.0 754.4V771.0M1770.0 770.0V778.9M1771.5 777.9V779.1M1773.5 778.1V780.4M1775.0 779.4V780.9M1779.5 776.6V781.9M1781.5 780.9V789.3M1783.5 788.3V799.6M1789.0 797.1V800.3M1792.0 793.7V797.3M1795.5 792.4V805.3M1798.0 804.3V815.8M1800.0 814.8V831.0M1802.0 830.0V832.8M1810.0 814.6V821.0M1811.5 820.0V824.6M1813.5 823.6V825.9M1816.0 824.9V827.3M1819.5 814.3V829.4M1839.0 747.6V764.1M1846.5 717.4V724.6M1849.0 723.6V733.0M1851.5 732.0V734.4M140.9 251.5V283.5M226.3 348.9V372.9M128.8 290.8V356.7M229.1 378.6V400.8M65.2 223.2V320.3M83.8 287.1V317.6M224.3 315.9V338.7M87.4 233.1V321.4M65.7 263.2V302.7M182.6 337.0V362.4M56.5 324.0V363.1M152.5 202.2V239.2M226.0 320.1V359.6M74.8 175.6V197.0M175.7 335.7V351.5M136.3 271.8V316.6M63.0 257.4V336.3M182.2 310.8V370.6M112.8 277.2V368.6M124.6 285.2V362.7M162.0 243.4V287.3M63.9 272.3V370.0M180.6 276.1V334.5M128.8 290.1V318.7M175.2 280.6V330.8M95.5 171.8V215.9M86.0 197.1V289.6M129.0 299.1V348.5M85.2 238.9V323.4M74.0 249.4V336.4M162.1 255.4V285.3M206.6 233.1V268.7M162.9 274.0V330.2M98.5 225.3V301.1M160.1 278.9V312.3M212.6 236.7V282.0M72.9 242.6V312.6M117.3 254.4V347.2M179.4 327.0V378.6M87.9 314.0V370.0M146.2 281.7V320.3M142.5 271.9V347.5M89.4 254.3V297.5M164.5 263.0V321.8M105.6 231.0V318.6M87.0 306.1V370.0M152.6 210.8V258.2M158.4 200.1V265.7M72.4 239.4V324.6M135.3 205.4V240.8M113.5 266.1V294.9M144.8 194.2V225.7" stroke="#1a50e0" stroke-width="1.8" fill="none"/>
<path d="M49.5 259.8V271.0M53.0 267.4V283.6M56.0 263.1V302.9M63.5 259.8V358.1M67.5 280.2V287.0M75.5 293.8V362.3M78.0 236.4V294.8M86.0 259.2V314.0M93.0 272.5V311.1M94.5 254.5V273.5M97.0 223.9V255.5M104.5 239.3V277.3M109.0 249.8V251.7M111.0 249.0V250.8M117.0 316.2V364.1M119.0 283.5V317.2M121.5 169.1V284.5M124.0 152.5V170.1M131.0 216.2V243.6M133.5 154.1V217.2M137.0 229.0V271.7M141.0 242.5V317.6M148.0 244.8V276.3M150.0 240.3V245.8M153.5 230.2V245.9M155.0 220.1V231.2M157.5 195.4V221.1M162.0 203.0V216.0M179.0 358.9V372.0M180.5 328.5V359.9M187.0 359.0V367.5M188.5 342.1V360.0M192.0 344.0V349.5M194.5 336.5V345.0M196.0 328.4V337.5M198.0 307.1V329.4M204.0 315.0V321.7M206.5 273.8V316.0M210.5 270.9V287.3M223.0 302.1V330.8M229.5 312.5V324.6M250.5 414.0V419.2M259.0 411.9V428.6M264.0 380.8V417.4M266.0 355.6V381.8M271.5 370.7V385.4M274.0 367.4V371.7M277.5 387.2V401.0M280.5 393.6V399.5M282.5 382.0V394.6M287.0 375.6V406.0M289.5 365.0V376.6M293.5 361.4V368.4M296.0 344.7V362.4M298.5 321.8V345.7M300.5 300.2V322.8M305.0 283.2V306.2M311.5 271.9V287.0M319.0 267.8V301.5M322.0 280.2V302.3M324.0 268.1V281.2M326.0 266.0V269.1M332.0 272.5V274.1M334.0 271.4V273.5M342.5 280.4V281.7M346.0 287.7V297.9M350.5 297.4V307.3M353.5 298.5V309.1M355.5 292.5V299.5M363.0 299.7V308.5M369.0 309.8V317.5M372.5 304.4V333.0M379.5 309.6V321.8M383.5 324.6V325.7M385.0 323.8V325.6M386.5 290.5V324.8M394.5 299.4V306.5M401.0 284.9V308.2M403.0 267.4V285.9M413.5 303.2V328.0M417.5 315.2V321.0M419.0 304.1V316.2M421.0 292.3V305.1M432.0 343.7V348.0M436.5 371.6V373.3M438.5 352.4V372.6M441.0 347.9V353.4M443.0 345.5V348.9M449.0 366.0V367.8M458.5 464.8V466.4M460.5 404.1V465.8M464.5 419.9V424.6M466.5 412.2V420.9M471.0 412.3V418.2M473.0 405.9V413.3M476.0 409.0V410.3M501.0 482.6V497.7M504.5 482.7V484.3M506.5 476.0V483.7M508.5 470.7V477.0M511.0 464.0V471.7M513.5 445.3V465.0M516.5 446.5V454.3M518.5 436.0V447.5M522.5 436.3V440.5M525.0 435.0V437.3M526.5 416.0V436.0M531.0 430.0V431.5M532.5 427.5V431.0M541.5 399.1V456.3M548.5 426.0V431.2M550.5 422.7V427.0M554.5 432.1V441.6M556.5 431.1V433.1M559.5 424.6V433.5M563.0 442.2V445.7M566.5 453.5V463.5M568.5 435.5V454.5M580.5 474.0V481.0M582.0 465.5V475.0M589.5 471.7V475.2M591.5 459.9V472.7M593.5 446.1V460.9M617.5 529.9V538.5M621.0 528.5V534.6M623.5 516.6V529.5M627.5 510.0V519.0M629.5 485.1V511.0M632.0 479.3V486.1M636.5 472.3V487.7M638.0 463.5V473.3M642.5 457.6V469.0M644.0 442.9V458.6M646.0 435.9V443.9M647.5 426.9V436.9M651.0 424.2V442.3M656.0 418.4V428.2M659.0 405.5V420.1M668.0 420.2V434.6M670.5 420.1V421.2M675.0 444.3V447.5M679.0 449.0V458.0M680.5 449.0V450.0M682.5 440.2V450.0M684.0 422.9V441.2M686.0 418.4V423.9M687.5 403.9V419.4M690.0 393.0V404.9M692.0 387.9V394.0M701.0 431.1V439.4M707.0 438.2V448.3M709.0 424.3V439.2M717.0 442.0V452.2M720.5 451.8V455.7M733.0 495.5V500.5M748.0 530.7V543.5M775.0 573.3V574.4M784.0 582.4V587.2M787.5 569.6V594.1M790.0 531.0V570.6M791.5 520.4V532.0M793.5 484.7V521.4M795.5 470.3V485.7M797.5 469.3V471.3M801.0 471.5V479.7M805.0 473.6V479.2M814.0 499.7V514.2M816.0 483.5V500.7M819.5 497.8V501.8M823.5 501.0V517.4M827.5 502.1V508.0M829.5 496.5V503.1M831.5 490.5V497.5M833.0 478.1V491.5M834.5 448.4V479.1M840.5 458.7V466.0M844.5 461.0V463.4M847.0 444.2V462.0M849.0 440.4V445.2M850.5 433.1V441.4M854.0 418.6V444.2M858.5 424.2V433.6M861.0 415.1V425.2M863.0 405.8V416.1M871.5 459.6V469.4M876.0 466.5V470.0M878.0 460.3V467.5M880.0 443.9V461.3M882.5 443.1V444.9M884.5 440.8V444.1M906.0 480.3V486.1M910.0 486.1V497.7M914.5 491.5V496.8M918.0 494.0V500.4M920.0 489.3V495.0M922.0 488.7V490.3M929.0 501.5V511.2M935.0 524.7V537.0M936.5 517.4V525.7M942.0 529.7V531.5M947.0 518.4V533.0M954.0 516.0V525.4M962.5 531.8V556.0M967.5 528.8V538.8M971.5 530.3V543.1M973.0 514.5V531.3M981.0 546.2V555.1M983.5 543.5V547.2M985.5 525.1V544.5M991.5 536.0V538.4M993.5 527.7V537.0M995.0 515.6V528.7M997.5 514.2V516.6M1001.0 500.9V521.4M1007.0 502.0V521.8M1011.5 507.8V518.1M1013.5 492.3V508.8M1024.0 500.2V514.9M1026.0 492.5V501.2M1038.5 539.3V544.8M1040.5 539.1V540.3M1044.5 538.7V547.9M1051.5 544.6V551.5M1053.5 539.4V545.6M1060.5 534.9V558.5M1062.5 534.4V535.9M1065.0 523.6V535.4M1069.0 544.3V549.4M1071.0 530.9V545.3M1076.0 548.6V553.7M1081.5 552.6V561.0M1086.5 554.1V561.0M1088.5 539.9V555.1M1090.5 537.2V540.9M1092.5 533.6V538.2M1094.5 532.3V534.6M1096.5 522.8V533.3M1105.5 534.7V537.3M1107.5 528.6V535.7M1113.5 542.6V543.8M1119.5 553.8V558.6M1124.5 558.7V562.4M1126.5 557.0V559.7M1128.0 548.2V558.0M1129.5 543.6V549.2M1138.0 551.5V559.5M1140.5 531.6V552.5M1146.5 558.4V568.2M1148.5 554.4V559.4M1150.0 551.2V555.4M1152.0 536.4V552.2M1157.0 543.7V546.3M1158.5 531.5V544.7M1165.0 548.1V558.8M1167.0 537.0V549.1M1177.0 547.0V548.9M1184.5 560.7V562.2M1188.5 569.6V571.7M1192.0 573.3V576.0M1196.0 572.8V581.8M1200.5 569.6V574.4M1208.5 567.2V575.8M1215.0 572.1V573.4M1217.0 568.2V573.1M1227.5 581.1V585.5M1229.5 578.3V582.1M1234.0 569.5V579.5M1236.0 566.8V570.5M1238.0 560.4V567.8M1242.0 568.0V571.5M1243.5 566.5V569.0M1245.5 560.3V567.5M1250.5 559.6V562.5M1253.0 557.8V560.6M1255.0 556.2V558.8M1257.0 546.5V557.2M1259.5 513.4V547.5M1261.5 507.1V514.4M1265.0 512.2V517.6M1272.0 519.9V523.4M1274.0 512.9V520.9M1282.0 514.0V521.2M1288.5 524.6V532.8M1292.0 545.7V547.0M1293.5 545.5V546.7M1296.0 537.2V546.5M1302.0 535.1V552.9M1310.5 541.5V546.6M1313.0 534.4V542.5M1315.0 534.1V535.4M1317.0 531.4V535.1M1319.5 521.1V532.4M1322.0 516.4V522.1M1326.0 516.9V521.9M1328.5 497.8V517.9M1334.5 498.6V520.9M1336.5 477.5V499.6M1345.0 474.0V486.2M1349.0 472.0V477.0M1351.5 467.0V473.0M1353.5 463.0V468.0M1355.5 452.5V464.0M1359.0 439.0V453.8M1361.0 428.3V440.0M1363.0 428.1V429.3M1365.0 419.7V429.1M1376.0 455.8V462.4M1380.0 455.6V461.9M1382.0 450.9V456.6M1389.5 458.9V467.0M1391.0 458.4V459.9M1395.5 451.5V461.8M1397.0 440.7V452.5M1405.0 457.5V459.2M1407.5 456.2V458.5M1410.0 455.0V457.2M1411.5 451.4V456.0M1413.5 442.2V452.4M1417.0 428.0V453.5M1419.5 404.6V429.0M1424.5 408.9V412.7M1427.0 401.3V409.9M1433.0 425.5V434.7M1437.5 443.8V447.7M1442.0 447.0V454.0M1444.0 427.3V448.0M1455.5 479.2V499.0M1458.0 454.6V480.2M1459.5 444.0V455.6M1486.5 537.1V548.4M1491.0 543.9V545.2M1493.0 536.4V544.9M1496.5 535.8V539.9M1500.5 531.4V540.6M1502.5 530.0V532.4M1511.5 543.2V553.9M1513.5 528.8V544.2M1515.0 514.5V529.8M1517.0 502.5V515.5M1518.5 486.1V503.5M1520.5 484.0V487.1M1535.5 481.2V537.0M1537.5 467.5V482.2M1546.5 489.5V515.5M1556.0 518.0V535.6M1560.5 530.4V531.8M1570.0 542.7V556.7M1574.5 548.3V554.3M1582.0 555.0V557.0M1595.5 577.4V578.8M1597.0 569.4V578.4M1598.5 568.1V570.4M1600.0 565.7V569.1M1606.0 574.4V576.0M1611.0 580.1V585.2M1617.0 582.0V593.0M1619.0 574.5V583.0M1631.5 587.0V593.0M1635.0 588.2V592.1M1637.5 582.8V589.2M1640.0 580.6V583.8M1644.0 579.4V586.4M1645.5 575.4V580.4M1647.0 574.1V576.4M1657.0 573.4V586.9M1659.0 566.3V574.4M1662.5 553.6V569.8M1673.5 588.0V591.0M1675.5 580.5V589.0M1684.5 625.9V633.2M1693.5 670.1V675.7M1699.5 727.4V734.9M1701.5 719.6V728.4M1703.0 705.4V720.6M1718.5 784.2V785.4M1724.0 777.4V794.2M1730.0 790.5V799.3M1732.0 786.7V791.5M1734.5 778.3V787.7M1736.0 761.5V779.3M1738.0 748.6V762.5M1745.0 751.7V756.8M1747.0 748.3V752.7M1749.5 744.2V749.3M1751.5 740.8V745.2M1754.0 739.6V741.8M1757.0 734.0V747.1M1759.5 732.5V735.0M1761.5 730.9V733.5M1777.5 776.6V780.9M1785.0 797.3V799.6M1787.0 797.1V798.3M1790.5 793.7V800.3M1794.0 792.4V797.3M1804.0 823.5V832.8M1806.0 817.7V824.5M1808.0 814.6V818.7M1817.5 814.3V827.3M1821.0 823.7V829.4M1823.0 815.3V824.7M1824.5 814.2V816.3M1826.0 807.3V815.2M1828.0 796.0V808.3M1830.0 775.2V797.0M1832.5 771.9V776.2M1834.5 771.1V772.9M1837.0 747.6V772.1M1841.0 730.0V764.1M1843.0 722.8V731.0M1844.5 717.4V723.8M1853.0 725.1V734.4" stroke="#ee0000" stroke-width="2.4" fill="none"/>
<rect x="49" y="118" width="2" height="230" fill="#1a50e0"/>
<line x1="207" y1="240" x2="214" y2="261" stroke="#0000ee" stroke-width="4.2" stroke-dasharray="0 4.2" stroke-linecap="round"/>
<line x1="225" y1="275" x2="237" y2="437" stroke="#0000ee" stroke-width="4.2" stroke-dasharray="0 4.2" stroke-linecap="round"/>
<line x1="355" y1="263" x2="383" y2="307" stroke="#0000ee" stroke-width="4.2" stroke-dasharray="0 4.2" stroke-linecap="round"/>
<line x1="411" y1="263" x2="429" y2="300" stroke="#0000ee" stroke-width="4.2" stroke-dasharray="0 4.2" stroke-linecap="round"/>
<line x1="429" y1="310" x2="461" y2="437" stroke="#0000ee" stroke-width="4.2" stroke-dasharray="0 4.2" stroke-linecap="round"/>
<line x1="482" y1="423" x2="503" y2="515" stroke="#0000ee" stroke-width="4.2" stroke-dasharray="0 4.2" stroke-linecap="round"/>
<line x1="510" y1="409" x2="520" y2="427" stroke="#0000ee" stroke-width="4.2" stroke-dasharray="0 4.2" stroke-linecap="round"/>
<line x1="549" y1="391" x2="601" y2="458" stroke="#0000ee" stroke-width="4.2" stroke-dasharray="0 4.2" stroke-linecap="round"/>
<line x1="601" y1="451" x2="623" y2="532" stroke="#0000ee" stroke-width="4.2" stroke-dasharray="0 4.2" stroke-linecap="round"/>
<line x1="651" y1="409" x2="658" y2="416" stroke="#0000ee" stroke-width="4.2" stroke-dasharray="0 4.2" stroke-linecap="round"/>
<line x1="695" y1="382" x2="712" y2="435" stroke="#0000ee" stroke-width="4.2" stroke-dasharray="0 4.2" stroke-linecap="round"/>
<line x1="717" y1="437" x2="727" y2="472" stroke="#0000ee" stroke-width="4.2" stroke-dasharray="0 4.2" stroke-linecap="round"/>
<line x1="720" y1="475" x2="755" y2="545" stroke="#0000ee" stroke-width="4.2" stroke-dasharray="0 4.2" stroke-linecap="round"/>
<line x1="730" y1="477" x2="747" y2="505" stroke="#0000ee" stroke-width="4.2" stroke-dasharray="0 4.2" stroke-linecap="round"/>
<line x1="837" y1="410" x2="845" y2="417" stroke="#0000ee" stroke-width="4.2" stroke-dasharray="0 4.2" stroke-linecap="round"/>
<line x1="862" y1="395" x2="887" y2="442" stroke="#0000ee" stroke-width="4.2" stroke-dasharray="0 4.2" stroke-linecap="round"/>
<line x1="905" y1="450" x2="915" y2="465" stroke="#0000ee" stroke-width="4.2" stroke-dasharray="0 4.2" stroke-linecap="round"/>
<line x1="932" y1="490" x2="972" y2="535" stroke="#0000ee" stroke-width="4.2" stroke-dasharray="0 4.2" stroke-linecap="round"/>
<line x1="975" y1="505" x2="1000" y2="535" stroke="#0000ee" stroke-width="4.2" stroke-dasharray="0 4.2" stroke-linecap="round"/>
<line x1="1025" y1="480" x2="1047" y2="507" stroke="#0000ee" stroke-width="4.2" stroke-dasharray="0 4.2" stroke-linecap="round"/>
<line x1="1050" y1="522" x2="1062" y2="535" stroke="#0000ee" stroke-width="4.2" stroke-dasharray="0 4.2" stroke-linecap="round"/>
<line x1="1070" y1="530" x2="1090" y2="542" stroke="#0000ee" stroke-width="4.2" stroke-dasharray="0 4.2" stroke-linecap="round"/>
<line x1="1120" y1="517" x2="1130" y2="530" stroke="#0000ee" stroke-width="4.2" stroke-dasharray="0 4.2" stroke-linecap="round"/>
<line x1="1145" y1="517" x2="1160" y2="535" stroke="#0000ee" stroke-width="4.2" stroke-dasharray="0 4.2" stroke-linecap="round"/>
<line x1="1167" y1="530" x2="1192" y2="555" stroke="#0000ee" stroke-width="4.2" stroke-dasharray="0 4.2" stroke-linecap="round"/>
<line x1="1190" y1="557" x2="1220" y2="582" stroke="#0000ee" stroke-width="4.2" stroke-dasharray="0 4.2" stroke-linecap="round"/>
<line x1="1260" y1="505" x2="1292" y2="540" stroke="#0000ee" stroke-width="4.2" stroke-dasharray="0 4.2" stroke-linecap="round"/>
<line x1="1280" y1="517" x2="1295" y2="535" stroke="#0000ee" stroke-width="4.2" stroke-dasharray="0 4.2" stroke-linecap="round"/>
<line x1="1355" y1="380" x2="1375" y2="430" stroke="#0000ee" stroke-width="4.2" stroke-dasharray="0 4.2" stroke-linecap="round"/>
<line x1="1427" y1="397" x2="1442" y2="425" stroke="#0000ee" stroke-width="4.2" stroke-dasharray="0 4.2" stroke-linecap="round"/>
<line x1="1440" y1="422" x2="1452" y2="437" stroke="#0000ee" stroke-width="4.2" stroke-dasharray="0 4.2" stroke-linecap="round"/>
<line x1="1452" y1="422" x2="1480" y2="487" stroke="#0000ee" stroke-width="4.2" stroke-dasharray="0 4.2" stroke-linecap="round"/>
<line x1="1520" y1="425" x2="1535" y2="462" stroke="#0000ee" stroke-width="4.2" stroke-dasharray="0 4.2" stroke-linecap="round"/>
<line x1="1542" y1="465" x2="1555" y2="492" stroke="#0000ee" stroke-width="4.2" stroke-dasharray="0 4.2" stroke-linecap="round"/>
<line x1="1550" y1="500" x2="1590" y2="540" stroke="#0000ee" stroke-width="4.2" stroke-dasharray="0 4.2" stroke-linecap="round"/>
<line x1="1595" y1="542" x2="1625" y2="575" stroke="#0000ee" stroke-width="4.2" stroke-dasharray="0 4.2" stroke-linecap="round"/>
<line x1="67" y1="117" x2="80" y2="297" stroke="#0000ee" stroke-width="4.2" stroke-dasharray="0 4.2" stroke-linecap="round"/>
<line x1="135" y1="143" x2="160" y2="297" stroke="#0000ee" stroke-width="4.2" stroke-dasharray="0 4.2" stroke-linecap="round"/>
<line x1="163" y1="210" x2="173" y2="240" stroke="#0000ee" stroke-width="4.2" stroke-dasharray="0 4.2" stroke-linecap="round"/>
<line x1="200" y1="183" x2="215" y2="300" stroke="#0000ee" stroke-width="4.2" stroke-dasharray="0 4.2" stroke-linecap="round"/>
<line x1="169" y1="240" x2="182" y2="298" stroke="#0000ee" stroke-width="4.2" stroke-dasharray="0 4.2" stroke-linecap="round"/>
<line x1="1682" y1="628" x2="1727" y2="772" stroke="#0000ee" stroke-width="4.2" stroke-dasharray="0 4.2" stroke-linecap="round"/>
<line x1="1754" y1="692" x2="1799" y2="794" stroke="#0000ee" stroke-width="4.2" stroke-dasharray="0 4.2" stroke-linecap="round"/>
<line x1="1838" y1="730" x2="1850" y2="745" stroke="#0000ee" stroke-width="4.2" stroke-dasharray="0 4.2" stroke-linecap="round"/>
<line x1="249" y1="462" x2="270" y2="423" stroke="#ee0000" stroke-width="4.2" stroke-dasharray="0 4.2" stroke-linecap="round"/>
<line x1="277" y1="423" x2="299" y2="391" stroke="#ee0000" stroke-width="4.2" stroke-dasharray="0 4.2" stroke-linecap="round"/>
<line x1="306" y1="391" x2="330" y2="328" stroke="#ee0000" stroke-width="4.2" stroke-dasharray="0 4.2" stroke-linecap="round"/>
<line x1="376" y1="346" x2="397" y2="324" stroke="#ee0000" stroke-width="4.2" stroke-dasharray="0 4.2" stroke-linecap="round"/>
<line x1="464" y1="472" x2="485" y2="444" stroke="#ee0000" stroke-width="4.2" stroke-dasharray="0 4.2" stroke-linecap="round"/>
<line x1="499" y1="515" x2="506" y2="479" stroke="#ee0000" stroke-width="4.2" stroke-dasharray="0 4.2" stroke-linecap="round"/>
<line x1="510" y1="469" x2="531" y2="437" stroke="#ee0000" stroke-width="4.2" stroke-dasharray="0 4.2" stroke-linecap="round"/>
<line x1="549" y1="479" x2="563" y2="458" stroke="#ee0000" stroke-width="4.2" stroke-dasharray="0 4.2" stroke-linecap="round"/>
<line x1="580" y1="479" x2="594" y2="462" stroke="#ee0000" stroke-width="4.2" stroke-dasharray="0 4.2" stroke-linecap="round"/>
<line x1="615" y1="557" x2="633" y2="486" stroke="#ee0000" stroke-width="4.2" stroke-dasharray="0 4.2" stroke-linecap="round"/>
<line x1="651" y1="479" x2="668" y2="451" stroke="#ee0000" stroke-width="4.2" stroke-dasharray="0 4.2" stroke-linecap="round"/>
<line x1="680" y1="445" x2="700" y2="405" stroke="#ee0000" stroke-width="4.2" stroke-dasharray="0 4.2" stroke-linecap="round"/>
<line x1="710" y1="477" x2="718" y2="472" stroke="#ee0000" stroke-width="4.2" stroke-dasharray="0 4.2" stroke-linecap="round"/>
<line x1="755" y1="580" x2="765" y2="570" stroke="#ee0000" stroke-width="4.2" stroke-dasharray="0 4.2" stroke-linecap="round"/>
<line x1="782" y1="595" x2="792" y2="585" stroke="#ee0000" stroke-width="4.2" stroke-dasharray="0 4.2" stroke-linecap="round"/>
<line x1="790" y1="580" x2="800" y2="515" stroke="#ee0000" stroke-width="4.2" stroke-dasharray="0 4.2" stroke-linecap="round"/>
<line x1="820" y1="530" x2="835" y2="507" stroke="#ee0000" stroke-width="4.2" stroke-dasharray="0 4.2" stroke-linecap="round"/>
<line x1="835" y1="480" x2="842" y2="465" stroke="#ee0000" stroke-width="4.2" stroke-dasharray="0 4.2" stroke-linecap="round"/>
<line x1="842" y1="465" x2="860" y2="447" stroke="#ee0000" stroke-width="4.2" stroke-dasharray="0 4.2" stroke-linecap="round"/>
<line x1="920" y1="530" x2="935" y2="520" stroke="#ee0000" stroke-width="4.2" stroke-dasharray="0 4.2" stroke-linecap="round"/>
<line x1="970" y1="565" x2="980" y2="552" stroke="#ee0000" stroke-width="4.2" stroke-dasharray="0 4.2" stroke-linecap="round"/>
<line x1="1005" y1="560" x2="1020" y2="535" stroke="#ee0000" stroke-width="4.2" stroke-dasharray="0 4.2" stroke-linecap="round"/>
<line x1="1050" y1="570" x2="1070" y2="560" stroke="#ee0000" stroke-width="4.2" stroke-dasharray="0 4.2" stroke-linecap="round"/>
<line x1="1075" y1="560" x2="1095" y2="550" stroke="#ee0000" stroke-width="4.2" stroke-dasharray="0 4.2" stroke-linecap="round"/>
<line x1="1130" y1="585" x2="1140" y2="565" stroke="#ee0000" stroke-width="4.2" stroke-dasharray="0 4.2" stroke-linecap="round"/>
<line x1="1150" y1="560" x2="1160" y2="550" stroke="#ee0000" stroke-width="4.2" stroke-dasharray="0 4.2" stroke-linecap="round"/>
<line x1="1180" y1="587" x2="1192" y2="580" stroke="#ee0000" stroke-width="4.2" stroke-dasharray="0 4.2" stroke-linecap="round"/>
<line x1="1220" y1="595" x2="1252" y2="552" stroke="#ee0000" stroke-width="4.2" stroke-dasharray="0 4.2" stroke-linecap="round"/>
<line x1="1272" y1="545" x2="1290" y2="535" stroke="#ee0000" stroke-width="4.2" stroke-dasharray="0 4.2" stroke-linecap="round"/>
<line x1="1295" y1="570" x2="1325" y2="540" stroke="#ee0000" stroke-width="4.2" stroke-dasharray="0 4.2" stroke-linecap="round"/>
<line x1="1325" y1="530" x2="1355" y2="437" stroke="#ee0000" stroke-width="4.2" stroke-dasharray="0 4.2" stroke-linecap="round"/>
<line x1="1380" y1="492" x2="1400" y2="462" stroke="#ee0000" stroke-width="4.2" stroke-dasharray="0 4.2" stroke-linecap="round"/>
<line x1="1400" y1="462" x2="1427" y2="417" stroke="#ee0000" stroke-width="4.2" stroke-dasharray="0 4.2" stroke-linecap="round"/>
<line x1="1482" y1="570" x2="1500" y2="522" stroke="#ee0000" stroke-width="4.2" stroke-dasharray="0 4.2" stroke-linecap="round"/>
<line x1="1495" y1="585" x2="1520" y2="505" stroke="#ee0000" stroke-width="4.2" stroke-dasharray="0 4.2" stroke-linecap="round"/>
<line x1="1540" y1="592" x2="1550" y2="560" stroke="#ee0000" stroke-width="4.2" stroke-dasharray="0 4.2" stroke-linecap="round"/>
<line x1="1555" y1="592" x2="1570" y2="555" stroke="#ee0000" stroke-width="4.2" stroke-dasharray="0 4.2" stroke-linecap="round"/>
<line x1="1590" y1="570" x2="1605" y2="555" stroke="#ee0000" stroke-width="4.2" stroke-dasharray="0 4.2" stroke-linecap="round"/>
<line x1="1630" y1="592" x2="1640" y2="587" stroke="#ee0000" stroke-width="4.2" stroke-dasharray="0 4.2" stroke-linecap="round"/>
<line x1="50" y1="367" x2="60" y2="300" stroke="#ee0000" stroke-width="4.2" stroke-dasharray="0 4.2" stroke-linecap="round"/>
<line x1="80" y1="353" x2="97" y2="287" stroke="#ee0000" stroke-width="4.2" stroke-dasharray="0 4.2" stroke-linecap="round"/>
<line x1="95" y1="330" x2="108" y2="287" stroke="#ee0000" stroke-width="4.2" stroke-dasharray="0 4.2" stroke-linecap="round"/>
<line x1="123" y1="287" x2="137" y2="257" stroke="#ee0000" stroke-width="4.2" stroke-dasharray="0 4.2" stroke-linecap="round"/>
<line x1="153" y1="277" x2="163" y2="243" stroke="#ee0000" stroke-width="4.2" stroke-dasharray="0 4.2" stroke-linecap="round"/>
<line x1="182" y1="373" x2="200" y2="284" stroke="#ee0000" stroke-width="4.2" stroke-dasharray="0 4.2" stroke-linecap="round"/>
<line x1="1724" y1="822" x2="1749" y2="761" stroke="#ee0000" stroke-width="4.2" stroke-dasharray="0 4.2" stroke-linecap="round"/>
<line x1="1799" y1="844" x2="1827" y2="772" stroke="#ee0000" stroke-width="4.2" stroke-dasharray="0 4.2" stroke-linecap="round"/>
<line x1="1830" y1="770" x2="1853" y2="742" stroke="#ee0000" stroke-width="4.2" stroke-dasharray="0 4.2" stroke-linecap="round"/>
<line x1="49" y1="237.5" x2="1862" y2="237.5" stroke="#993300" stroke-width="3" stroke-linecap="butt"/>
<line x1="49" y1="371.5" x2="1862" y2="371.5" stroke="#00ff00" stroke-width="7" stroke-linecap="butt"/>
<line x1="49" y1="573.5" x2="1853" y2="573.5" stroke="#00ffff" stroke-width="5" stroke-linecap="butt"/>
<line x1="49" y1="775.5" x2="1853" y2="775.5" stroke="#0000ff" stroke-width="7" stroke-linecap="butt"/>
</g>
<rect x="1862" y="77" width="3" height="161" fill="#ee1111"/>
<rect x="1862" y="238" width="3" height="655" fill="#1155dd"/>
<rect x="1002" y="77" width="1" height="961" fill="#ee0000"/>
<rect x="1002" y="313" width="1" height="55" fill="#000"/>
<rect x="49.5" y="692.5" width="223" height="52" fill="none" stroke="#808080" stroke-width="1"/>
<rect x="7" y="894" width="1906" height="1" fill="#999"/>
<rect x="48" y="77" width="1" height="961" fill="#909090"/>
<rect x="1866" y="77" width="1" height="961" fill="#909090"/>
<rect x="7" y="1038" width="1906" height="1" fill="#909090"/>
<g clip-path="url(#cpl)">
<polyline points="49.0,922.5 120.0,922.5 170.0,921.0 250.0,921.0 312.0,922.5 375.0,924.0 480.0,925.5 960.0,959.0 1440.0,985.0 1852.0,1006.0" fill="none" stroke="#000" stroke-width="5" stroke-linecap="round"/>
<polygon points="49,921 49,906 60,907 65,912 52,918" fill="#ee0000"/>
<polyline points="57.0,911.0 73.0,908.0 108.0,913.0 138.0,911.0 178.0,910.0 233.0,912.0 240.0,922.0 253.0,932.0 268.0,936.0 308.0,938.0 433.0,940.0 458.0,949.0 488.0,953.0 508.0,956.0 600.0,956.0 618.0,965.0 648.0,968.0 713.0,969.0 758.0,974.0 913.0,971.0 968.0,977.0 1005.0,981.0 1130.0,983.0 1143.0,989.0 1218.0,998.0 1330.0,998.0 1368.0,994.0 1448.0,994.0 1538.0,1000.0 1560.0,1008.0 1685.0,1010.0 1723.0,1024.0 1823.0,1029.0 1860.0,1031.0" fill="none" stroke="#993300" stroke-width="2"/>
<polyline points="49.0,912.8 65.0,909.8 100.0,914.8 130.0,912.8 170.0,911.8 225.0,913.8 232.0,923.8 245.0,933.8 260.0,937.8 300.0,939.8 425.0,941.8 450.0,950.8 480.0,954.8 500.0,957.8 592.0,957.8 610.0,966.8 640.0,969.8 705.0,970.8 750.0,975.8 905.0,972.8 960.0,978.8 997.0,982.8 1122.0,984.8 1135.0,990.8 1210.0,999.8 1322.0,999.8 1360.0,995.8 1440.0,995.8 1530.0,1001.8 1552.0,1009.8 1677.0,1011.8 1715.0,1025.8 1815.0,1030.8 1852.0,1032.8" fill="none" stroke="#ee0000" stroke-width="1.6"/>
<polyline points="49.0,912.0 65.0,909.0 100.0,914.0 130.0,912.0 170.0,911.0 225.0,913.0 232.0,923.0 245.0,933.0 260.0,937.0 300.0,939.0 425.0,941.0 450.0,950.0 480.0,954.0 500.0,957.0 592.0,957.0 610.0,966.0 640.0,969.0 705.0,970.0 750.0,975.0 905.0,972.0 960.0,978.0 997.0,982.0 1122.0,984.0 1135.0,990.0 1210.0,999.0 1322.0,999.0 1360.0,995.0 1440.0,995.0 1530.0,1001.0 1552.0,1009.0 1677.0,1011.0 1715.0,1025.0 1815.0,1030.0 1852.0,1032.0" fill="none" stroke="#0000ee" stroke-width="1.3"/>
<polygon points="230,919 250,935 234,935" fill="#0000ee"/>
<polygon points="610,957 630,969 614,969" fill="#0000ee"/>
<polygon points="1130,984 1150,990 1134,990" fill="#0000ee"/>
<polygon points="1195,990 1215,999 1199,999" fill="#0000ee"/>
<polygon points="1530,1001 1555,1009 1534,1009" fill="#0000ee"/>
<polygon points="1675,1010 1690,1016 1679,1016" fill="#0000ee"/>
<polygon points="1700,1018 1712,1024 1704,1024" fill="#0000ee"/>
<polygon points="1775,1025 1800,1030 1779,1030" fill="#0000ee"/>
</g>
</svg>
<div class="a" style="left:52px;top:82px;width:6px;height:6px;background:#c0c0c0;border:1px solid #888"></div>
<div class="t" style="left:59px;top:78px;height:15px;padding:0 3px;background:#f2f2f2;border:1px solid #c8c8c8;color:#333;font-size:12px;line-height:13px">팬스타엔터프라이즈 매물대 수(13)</div>
<svg class="a" style="left:12px;top:96px" width="15" height="14"><rect x="1" y="1" width="13" height="12" fill="#fff" stroke="#111" stroke-width="1.5"/><rect x="3.5" y="3.5" width="8" height="7" fill="#ddd" stroke="#888" stroke-width="1"/><line x1="6" y1="3" x2="6" y2="11" stroke="#888"/><line x1="9" y1="3" x2="9" y2="11" stroke="#888"/></svg>
<div class="t" style="left:6px;top:136px;width:41px;text-align:right;color:#333;font-size:12px;letter-spacing:-0.3px">1,024</div>
<div class="t" style="left:6px;top:191px;width:41px;text-align:right;color:#333;font-size:12px;letter-spacing:-0.3px">1,019</div>
<div class="t" style="left:6px;top:246px;width:41px;text-align:right;color:#333;font-size:12px;letter-spacing:-0.3px">1,015</div>
<div class="t" style="left:6px;top:300px;width:41px;text-align:right;color:#333;font-size:12px;letter-spacing:-0.3px">1,011</div>
<div class="t" style="left:6px;top:355px;width:41px;text-align:right;color:#333;font-size:12px;letter-spacing:-0.3px">1,007</div>
<div class="t" style="left:6px;top:409px;width:41px;text-align:right;color:#333;font-size:12px;letter-spacing:-0.3px">1,003</div>
<div class="t" style="left:6px;top:463px;width:41px;text-align:right;color:#333;font-size:12px;letter-spacing:-0.3px">999</div>
<div class="t" style="left:6px;top:518px;width:41px;text-align:right;color:#333;font-size:12px;letter-spacing:-0.3px">995</div>
<div class="t" style="left:6px;top:573px;width:41px;text-align:right;color:#333;font-size:12px;letter-spacing:-0.3px">991</div>
<div class="t" style="left:6px;top:627px;width:41px;text-align:right;color:#333;font-size:12px;letter-spacing:-0.3px">987</div>
<div class="t" style="left:6px;top:791px;width:41px;text-align:right;color:#333;font-size:12px;letter-spacing:-0.3px">975</div>
<div class="t" style="left:6px;top:845px;width:41px;text-align:right;color:#333;font-size:12px;letter-spacing:-0.3px">971</div>
<div class="t" style="left:8px;top:682px;width:37px;height:30px;background:#fcd86c;border:1px solid #222;color:#222;font-size:12px;line-height:13px;text-align:center">983<br><span style="color:#1a3fd0">-3.34%</span></div>
<div class="t" style="left:10px;top:725px;width:34px;height:13px;background:#1e5cc8;color:#fff;font-size:12px;line-height:13px;text-align:right;padding-right:2px">980</div>
<div class="t" style="left:10px;top:737px;width:38px;color:#1a3fd0;font-size:12px;line-height:13px">1.64%<span style="color:#333">9</span></div>
<svg class="a" style="left:1866px;top:77px" width="48" height="961">
<line x1="0" y1="14.5" x2="4" y2="14.5" stroke="#777" stroke-width="1"/>
<line x1="0" y1="33.5" x2="7" y2="33.5" stroke="#777" stroke-width="1"/>
<line x1="0" y1="52.5" x2="4" y2="52.5" stroke="#777" stroke-width="1"/>
<line x1="0" y1="71.5" x2="4" y2="71.5" stroke="#777" stroke-width="1"/>
<line x1="0" y1="90.5" x2="4" y2="90.5" stroke="#777" stroke-width="1"/>
<line x1="0" y1="109.5" x2="4" y2="109.5" stroke="#777" stroke-width="1"/>
<line x1="0" y1="128.5" x2="7" y2="128.5" stroke="#777" stroke-width="1"/>
<line x1="0" y1="147.5" x2="4" y2="147.5" stroke="#777" stroke-width="1"/>
<line x1="0" y1="166.5" x2="4" y2="166.5" stroke="#777" stroke-width="1"/>
<line x1="0" y1="185.5" x2="4" y2="185.5" stroke="#777" stroke-width="1"/>
<line x1="0" y1="204.5" x2="4" y2="204.5" stroke="#777" stroke-width="1"/>
<line x1="0" y1="223.5" x2="7" y2="223.5" stroke="#777" stroke-width="1"/>
<line x1="0" y1="242.5" x2="4" y2="242.5" stroke="#777" stroke-width="1"/>
<line x1="0" y1="261.5" x2="4" y2="261.5" stroke="#777" stroke-width="1"/>
<line x1="0" y1="280.5" x2="4" y2="280.5" stroke="#777" stroke-width="1"/>
<line x1="0" y1="299.5" x2="4" y2="299.5" stroke="#777" stroke-width="1"/>
<line x1="0" y1="318.5" x2="7" y2="318.5" stroke="#777" stroke-width="1"/>
<line x1="0" y1="337.5" x2="4" y2="337.5" stroke="#777" stroke-width="1"/>
<line x1="0" y1="356.5" x2="4" y2="356.5" stroke="#777" stroke-width="1"/>
<line x1="0" y1="375.5" x2="4" y2="375.5" stroke="#777" stroke-width="1"/>
<line x1="0" y1="394.5" x2="4" y2="394.5" stroke="#777" stroke-width="1"/>
<line x1="0" y1="413.5" x2="7" y2="413.5" stroke="#777" stroke-width="1"/>
<line x1="0" y1="432.5" x2="4" y2="432.5" stroke="#777" stroke-width="1"/>
<line x1="0" y1="451.5" x2="4" y2="451.5" stroke="#777" stroke-width="1"/>
<line x1="0" y1="470.5" x2="4" y2="470.5" stroke="#777" stroke-width="1"/>
<line x1="0" y1="489.5" x2="4" y2="489.5" stroke="#777" stroke-width="1"/>
<line x1="0" y1="508.5" x2="7" y2="508.5" stroke="#777" stroke-width="1"/>
<line x1="0" y1="527.5" x2="4" y2="527.5" stroke="#777" stroke-width="1"/>
<line x1="0" y1="546.5" x2="4" y2="546.5" stroke="#777" stroke-width="1"/>
<line x1="0" y1="565.5" x2="4" y2="565.5" stroke="#777" stroke-width="1"/>
<line x1="0" y1="584.5" x2="4" y2="584.5" stroke="#777" stroke-width="1"/>
<line x1="0" y1="603.5" x2="7" y2="603.5" stroke="#777" stroke-width="1"/>
<line x1="0" y1="622.5" x2="4" y2="622.5" stroke="#777" stroke-width="1"/>
<line x1="0" y1="641.5" x2="4" y2="641.5" stroke="#777" stroke-width="1"/>
<line x1="0" y1="660.5" x2="4" y2="660.5" stroke="#777" stroke-width="1"/>
<line x1="0" y1="679.5" x2="4" y2="679.5" stroke="#777" stroke-width="1"/>
<line x1="0" y1="698.5" x2="7" y2="698.5" stroke="#777" stroke-width="1"/>
<line x1="0" y1="717.5" x2="4" y2="717.5" stroke="#777" stroke-width="1"/>
<line x1="0" y1="736.5" x2="4" y2="736.5" stroke="#777" stroke-width="1"/>
<line x1="0" y1="755.5" x2="4" y2="755.5" stroke="#777" stroke-width="1"/>
<line x1="0" y1="774.5" x2="4" y2="774.5" stroke="#777" stroke-width="1"/>
<line x1="0" y1="793.5" x2="7" y2="793.5" stroke="#777" stroke-width="1"/>
<line x1="0" y1="860.5" x2="7" y2="860.5" stroke="#777" stroke-width="1"/>
<line x1="0" y1="898.5" x2="7" y2="898.5" stroke="#777" stroke-width="1"/>
<line x1="0" y1="936.5" x2="7" y2="936.5" stroke="#777" stroke-width="1"/>
</svg>
<div class="t" style="left:1875px;top:103px;color:#333;font-size:12px;letter-spacing:-0.3px">70.00</div>
<div class="t" style="left:1875px;top:198px;color:#333;font-size:12px;letter-spacing:-0.3px">65.00</div>
<div class="t" style="left:1875px;top:293px;color:#333;font-size:12px;letter-spacing:-0.3px">60.00</div>
<div class="t" style="left:1875px;top:388px;color:#333;font-size:12px;letter-spacing:-0.3px">55.00</div>
<div class="t" style="left:1875px;top:483px;color:#333;font-size:12px;letter-spacing:-0.3px">50.00</div>
<div class="t" style="left:1875px;top:578px;color:#333;font-size:12px;letter-spacing:-0.3px">45.00</div>
<div class="t" style="left:1875px;top:673px;color:#333;font-size:12px;letter-spacing:-0.3px">40.00</div>
<div class="t" style="left:1875px;top:768px;color:#333;font-size:12px;letter-spacing:-0.3px">35.00</div>
<div class="t" style="left:1875px;top:863px;color:#333;font-size:12px;letter-spacing:-0.3px">30.00</div>
<div class="t" style="left:1867px;top:77px;color:#ee0000;font-size:12px;line-height:12px">LC:0.93</div>
<div class="t" style="left:1867px;top:89px;width:46px;overflow:hidden;color:#1a5cd0;font-size:12px;line-height:12px">HC:-4.48</div>
<div class="t" style="left:1870px;top:682px;width:42px;height:30px;background:#fcd86c;border:1px solid #222;color:#222;font-size:12px;line-height:13px;text-align:center">983<br><span style="color:#1a3fd0">-3.34%</span></div>
<div class="t" style="left:1871px;top:725px;width:40px;height:13px;background:#1e5cc8;color:#fff;font-size:12px;line-height:13px;padding-left:2px">980</div>
<div class="t" style="left:1874px;top:737px;color:#1a5cd0;font-size:12px;line-height:13px">-3.64%</div>
<div class="t" style="left:4px;top:930px;width:38px;overflow:hidden;text-align:right;color:#333;font-size:12px;letter-spacing:-0.5px">2,000K</div>
<div class="a" style="left:42px;top:937px;width:6px;height:1px;background:#777"></div>
<div class="t" style="left:1875px;top:930px;width:38px;overflow:hidden;color:#333;font-size:12px;letter-spacing:-0.5px">-2,000K</div>
<div class="t" style="left:4px;top:968px;width:38px;overflow:hidden;text-align:right;color:#333;font-size:12px;letter-spacing:-0.5px">2,500K</div>
<div class="a" style="left:42px;top:975px;width:6px;height:1px;background:#777"></div>
<div class="t" style="left:1875px;top:968px;width:38px;overflow:hidden;color:#333;font-size:12px;letter-spacing:-0.5px">-2,500K</div>
<div class="t" style="left:4px;top:1006px;width:38px;overflow:hidden;text-align:right;color:#333;font-size:12px;letter-spacing:-0.5px">3,000K</div>
<div class="a" style="left:42px;top:1013px;width:6px;height:1px;background:#777"></div>
<div class="t" style="left:1875px;top:1006px;width:38px;overflow:hidden;color:#333;font-size:12px;letter-spacing:-0.5px">-3,000K</div>
<svg class="a" style="left:0;top:0" width="1920" height="1080"><line x1="45" y1="929.4" x2="48" y2="929.4" stroke="#777" stroke-width="1"/><line x1="1867" y1="929.4" x2="1870" y2="929.4" stroke="#777" stroke-width="1"/><line x1="42" y1="937.0" x2="48" y2="937.0" stroke="#777" stroke-width="1"/><line x1="1867" y1="937.0" x2="1874" y2="937.0" stroke="#777" stroke-width="1"/><line x1="45" y1="944.6" x2="48" y2="944.6" stroke="#777" stroke-width="1"/><line x1="1867" y1="944.6" x2="1870" y2="944.6" stroke="#777" stroke-width="1"/><line x1="45" y1="952.2" x2="48" y2="952.2" stroke="#777" stroke-width="1"/><line x1="1867" y1="952.2" x2="1870" y2="952.2" stroke="#777" stroke-width="1"/><line x1="45" y1="959.8" x2="48" y2="959.8" stroke="#777" stroke-width="1"/><line x1="1867" y1="959.8" x2="1870" y2="959.8" stroke="#777" stroke-width="1"/><line x1="45" y1="967.4" x2="48" y2="967.4" stroke="#777" stroke-width="1"/><line x1="1867" y1="967.4" x2="1870" y2="967.4" stroke="#777" stroke-width="1"/><line x1="42" y1="975.0" x2="48" y2="975.0" stroke="#777" stroke-width="1"/><line x1="1867" y1="975.0" x2="1874" y2="975.0" stroke="#777" stroke-width="1"/><line x1="45" y1="982.6" x2="48" y2="982.6" stroke="#777" stroke-width="1"/><line x1="1867" y1="982.6" x2="1870" y2="982.6" stroke="#777" stroke-width="1"/><line x1="45" y1="990.2" x2="48" y2="990.2" stroke="#777" stroke-width="1"/><line x1="1867" y1="990.2" x2="1870" y2="990.2" stroke="#777" stroke-width="1"/><line x1="45" y1="997.8" x2="48" y2="997.8" stroke="#777" stroke-width="1"/><line x1="1867" y1="997.8" x2="1870" y2="997.8" stroke="#777" stroke-width="1"/><line x1="45" y1="1005.4" x2="48" y2="1005.4" stroke="#777" stroke-width="1"/><line x1="1867" y1="1005.4" x2="1870" y2="1005.4" stroke="#777" stroke-width="1"/><line x1="42" y1="1013.0" x2="48" y2="1013.0" stroke="#777" stroke-width="1"/><line x1="1867" y1="1013.0" x2="1874" y2="1013.0" stroke="#777" stroke-width="1"/><line x1="45" y1="1020.6" x2="48" y2="1020.6" stroke="#777" stroke-width="1"/><line x1="1867" y1="1020.6" x2="1870" y2="1020.6" stroke="#777" stroke-width="1"/><line x1="45" y1="1028.2" x2="48" y2="1028.2" stroke="#777" stroke-width="1"/><line x1="1867" y1="1028.2" x2="1870" y2="1028.2" stroke="#777" stroke-width="1"/><line x1="45" y1="1035.8" x2="48" y2="1035.8" stroke="#777" stroke-width="1"/><line x1="1867" y1="1035.8" x2="1870" y2="1035.8" stroke="#777" stroke-width="1"/><line x1="42" y1="899.5" x2="48" y2="899.5" stroke="#777"/><line x1="1867" y1="899.5" x2="1874" y2="899.5" stroke="#777"/></svg>
<div class="a" style="left:1899px;top:897px;width:10px;height:8px;background:#333"></div>
<div class="t" style="left:63px;top:117px;color:#ee0000;font-size:12px;line-height:14px">최고 1,026 (-4.48%, 09:00)</div>
<div class="t" style="left:1737px;top:239px;color:#993300;font-size:12px;line-height:14px">전일종가 1,017 (0.00%)</div>
<div class="t" style="left:1733px;top:376px;color:#00dd00;font-size:12px;line-height:14px">당일시가 1,007 (-0.98%)</div>
<div class="t" style="left:1648px;top:837px;color:#1a2fd0;font-size:12px;line-height:14px">최저 971 (0.93%, 15:02)</div>
<div class="a" style="left:7px;top:1039px;width:1906px;height:17px;background:#fff"></div>
<div class="a" style="left:7px;top:1056px;width:1906px;height:1px;background:#909090"></div>
<div class="a" style="left:49px;top:1039px;width:1px;height:17px;background:#909090"></div>
<div class="t" style="left:50px;top:1040px;color:#222;font-size:12px;line-height:15px;letter-spacing:-0.4px;font-weight:bold;">08/07</div>
<div class="a" style="left:131px;top:1039px;width:1px;height:17px;background:#909090"></div>
<div class="t" style="left:132px;top:1040px;color:#222;font-size:12px;line-height:15px;letter-spacing:-0.4px;">09:10</div>
<div class="a" style="left:205px;top:1039px;width:1px;height:17px;background:#909090"></div>
<div class="t" style="left:206px;top:1040px;color:#222;font-size:12px;line-height:15px;letter-spacing:-0.4px;">09:20</div>
<div class="a" style="left:281px;top:1039px;width:1px;height:17px;background:#909090"></div>
<div class="t" style="left:282px;top:1040px;color:#222;font-size:12px;line-height:15px;letter-spacing:-0.4px;">09:30</div>
<div class="a" style="left:356px;top:1039px;width:1px;height:17px;background:#909090"></div>
<div class="t" style="left:357px;top:1040px;color:#222;font-size:12px;line-height:15px;letter-spacing:-0.4px;">09:40</div>
<div class="a" style="left:421px;top:1039px;width:1px;height:17px;background:#909090"></div>
<div class="t" style="left:422px;top:1040px;color:#222;font-size:12px;line-height:15px;letter-spacing:-0.4px;">09:50</div>
<div class="a" style="left:496px;top:1039px;width:1px;height:17px;background:#909090"></div>
<div class="t" style="left:497px;top:1040px;color:#222;font-size:12px;line-height:15px;letter-spacing:-0.4px;">10:00</div>
<div class="a" style="left:552px;top:1039px;width:1px;height:17px;background:#909090"></div>
<div class="t" style="left:553px;top:1040px;color:#222;font-size:12px;line-height:15px;letter-spacing:-0.4px;">10:10</div>
<div class="a" style="left:612px;top:1039px;width:1px;height:17px;background:#909090"></div>
<div class="t" style="left:613px;top:1040px;color:#222;font-size:12px;line-height:15px;letter-spacing:-0.4px;">10:20</div>
<div class="a" style="left:665px;top:1039px;width:1px;height:17px;background:#909090"></div>
<div class="t" style="left:666px;top:1040px;color:#222;font-size:12px;line-height:15px;letter-spacing:-0.4px;">10:30</div>
<div class="a" style="left:725px;top:1039px;width:1px;height:17px;background:#909090"></div>
<div class="t" style="left:726px;top:1040px;color:#222;font-size:12px;line-height:15px;letter-spacing:-0.4px;">10:40</div>
<div class="a" style="left:795px;top:1039px;width:1px;height:17px;background:#909090"></div>
<div class="t" style="left:796px;top:1040px;color:#222;font-size:12px;line-height:15px;letter-spacing:-0.4px;">10:50</div>
<div class="a" style="left:852px;top:1039px;width:1px;height:17px;background:#909090"></div>
<div class="t" style="left:853px;top:1040px;color:#222;font-size:12px;line-height:15px;letter-spacing:-0.4px;">11:00</div>
<div class="a" style="left:895px;top:1039px;width:1px;height:17px;background:#909090"></div>
<div class="t" style="left:896px;top:1040px;color:#222;font-size:12px;line-height:15px;letter-spacing:-0.4px;">11:10</div>
<div class="a" style="left:1069px;top:1039px;width:1px;height:17px;background:#909090"></div>
<div class="t" style="left:1070px;top:1040px;color:#222;font-size:12px;line-height:15px;letter-spacing:-0.4px;">:50</div>
<div class="a" style="left:1098px;top:1039px;width:1px;height:17px;background:#909090"></div>
<div class="t" style="left:1099px;top:1040px;color:#222;font-size:12px;line-height:15px;letter-spacing:-0.4px;">12:00</div>
<div class="a" style="left:1136px;top:1039px;width:1px;height:17px;background:#909090"></div>
<div class="t" style="left:1137px;top:1040px;color:#222;font-size:12px;line-height:15px;letter-spacing:-0.4px;">12:10</div>
<div class="a" style="left:1169px;top:1039px;width:1px;height:17px;background:#909090"></div>
<div class="t" style="left:1170px;top:1040px;color:#222;font-size:12px;line-height:15px;letter-spacing:-0.4px;">12:20</div>
<div class="a" style="left:1218px;top:1039px;width:1px;height:17px;background:#909090"></div>
<div class="t" style="left:1219px;top:1040px;color:#222;font-size:12px;line-height:15px;letter-spacing:-0.4px;">12:30</div>
<div class="a" style="left:1256px;top:1039px;width:1px;height:17px;background:#909090"></div>
<div class="t" style="left:1257px;top:1040px;color:#222;font-size:12px;line-height:15px;letter-spacing:-0.4px;">12:40</div>
<div class="a" style="left:1292px;top:1039px;width:1px;height:17px;background:#909090"></div>
<div class="t" style="left:1293px;top:1040px;color:#222;font-size:12px;line-height:15px;letter-spacing:-0.4px;">12:50</div>
<div class="a" style="left:1322px;top:1039px;width:1px;height:17px;background:#909090"></div>
<div class="t" style="left:1323px;top:1040px;color:#222;font-size:12px;line-height:15px;letter-spacing:-0.4px;">13:00</div>
<div class="a" style="left:1371px;top:1039px;width:1px;height:17px;background:#909090"></div>
<div class="t" style="left:1372px;top:1040px;color:#222;font-size:12px;line-height:15px;letter-spacing:-0.4px;">13:10</div>
<div class="a" style="left:1413px;top:1039px;width:1px;height:17px;background:#909090"></div>
<div class="t" style="left:1414px;top:1040px;color:#222;font-size:12px;line-height:15px;letter-spacing:-0.4px;">13:20</div>
<div class="a" style="left:1443px;top:1039px;width:1px;height:17px;background:#909090"></div>
<div class="t" style="left:1444px;top:1040px;color:#222;font-size:12px;line-height:15px;letter-spacing:-0.4px;">13:30</div>
<div class="a" style="left:1497px;top:1039px;width:1px;height:17px;background:#909090"></div>
<div class="t" style="left:1498px;top:1040px;color:#222;font-size:12px;line-height:15px;letter-spacing:-0.4px;">13:50</div>
<div class="a" style="left:1531px;top:1039px;width:1px;height:17px;background:#909090"></div>
<div class="t" style="left:1532px;top:1040px;color:#222;font-size:12px;line-height:15px;letter-spacing:-0.4px;">14:00</div>
<div class="a" style="left:1565px;top:1039px;width:1px;height:17px;background:#909090"></div>
<div class="t" style="left:1566px;top:1040px;color:#222;font-size:12px;line-height:15px;letter-spacing:-0.4px;">14:10</div>
<div class="a" style="left:1598px;top:1039px;width:1px;height:17px;background:#909090"></div>
<div class="t" style="left:1599px;top:1040px;color:#222;font-size:12px;line-height:15px;letter-spacing:-0.4px;">14:20</div>
<div class="a" style="left:1635px;top:1039px;width:1px;height:17px;background:#909090"></div>
<div class="t" style="left:1636px;top:1040px;color:#222;font-size:12px;line-height:15px;letter-spacing:-0.4px;">14:30</div>
<div class="a" style="left:1671px;top:1039px;width:1px;height:17px;background:#909090"></div>
<div class="t" style="left:1672px;top:1040px;color:#222;font-size:12px;line-height:15px;letter-spacing:-0.4px;">14:40</div>
<div class="a" style="left:1733px;top:1039px;width:1px;height:17px;background:#909090"></div>
<div class="t" style="left:1734px;top:1040px;color:#222;font-size:12px;line-height:15px;letter-spacing:-0.4px;">14:50</div>
<div class="a" style="left:1783px;top:1039px;width:1px;height:17px;background:#909090"></div>
<div class="t" style="left:1784px;top:1040px;color:#222;font-size:12px;line-height:15px;letter-spacing:-0.4px;">15:00</div>
<div class="a" style="left:1834px;top:1039px;width:1px;height:17px;background:#909090"></div>
<div class="a" style="left:1866px;top:1039px;width:1px;height:17px;background:#909090"></div>
<div class="t" style="left:1874px;top:1040px;color:#222;font-size:12px;line-height:15px;letter-spacing:-0.4px;">15:13:3</div>
<div class="t" style="left:934px;top:1038px;width:135px;height:18px;background:#fcd86c;border:1px solid #222;color:#222;font-size:12px;line-height:16px;letter-spacing:-0.4px;padding-left:2px">2025/08/07(목) 11:36:05</div>
<div class="a" style="left:7px;top:1057px;width:1906px;height:19px;background:#f0f0f0"></div>
<div class="a" style="left:675px;top:1057px;width:870px;height:18px;background:#eaeaea;border-top:1px solid #fff;border-bottom:2px solid #a8a8a8"></div>
<div class="btn" style="left:7px;top:1058px;width:15px;height:16px;font-size:9px;line-height:14px">◀</div>
<div class="btn" style="left:1548px;top:1058px;width:16px;height:16px;font-size:9px;line-height:14px;letter-spacing:-2px">▶</div>
<div class="btn" style="left:1562px;top:1058px;width:16px;height:16px;font-size:9px;line-height:14px;letter-spacing:-2px">◀◀</div>
<div class="btn" style="left:1578px;top:1058px;width:16px;height:16px;font-size:9px;line-height:14px;letter-spacing:-2px">■</div>
<div class="btn" style="left:1595px;top:1058px;width:16px;height:16px;font-size:9px;line-height:14px;letter-spacing:-2px">▶▶</div>
<svg class="a" style="left:1615px;top:1058px" width="300" height="18"><g stroke="#555" fill="none" stroke-width="1.2"><line x1="3" y1="5" x2="70" y2="5"/><line x1="42" y1="2" x2="40" y2="10"/><path d="M5 12 v3 M12 12 v3 M19 12 v3 M26 12 v3 M33 12 v3 M40 12 v3 M47 12 v3 M54 12 v3 M61 12 v3 M68 12 v3"/><rect x="80" y="2" width="9" height="8"/><rect x="85" y="7" width="8" height="8"/><rect x="97" y="2" width="9" height="8"/><rect x="101" y="6" width="9" height="8"/><path d="M114 13 l5 -5 l4 3 l6 -6" /><rect x="114" y="2" width="14" height="12" stroke-dasharray="2 2"/><path d="M131 14 v-12 h3 M131 2 l6 6"/><path d="M149 10 q4 -8 7 0 q3 -6 6 -2"/><path d="M168 14 l4 -10 l3 10 l4 -8"/><path d="M185 14 l6 -10 l4 8 M187 14 l6 -8"/><path d="M203 12 l6 -8 l6 4 v6 h-12 z"/><rect x="219" y="5" width="12" height="9"/><path d="M221 12 l3 -4 l3 2 l4 -5"/><circle cx="243" cy="7" r="4.5" stroke-width="1.5"/><line x1="246" y1="10" x2="250" y2="14" stroke-width="2"/><line x1="258" y1="8" x2="266" y2="8" stroke-width="2.5"/><path d="M274 8 h10 M279 3 v10" stroke-width="2.5"/><path d="M289 14 l4 -11 l4 11 M290.5 10 h5" stroke-width="1.8"/></g></svg>
</body></html>
